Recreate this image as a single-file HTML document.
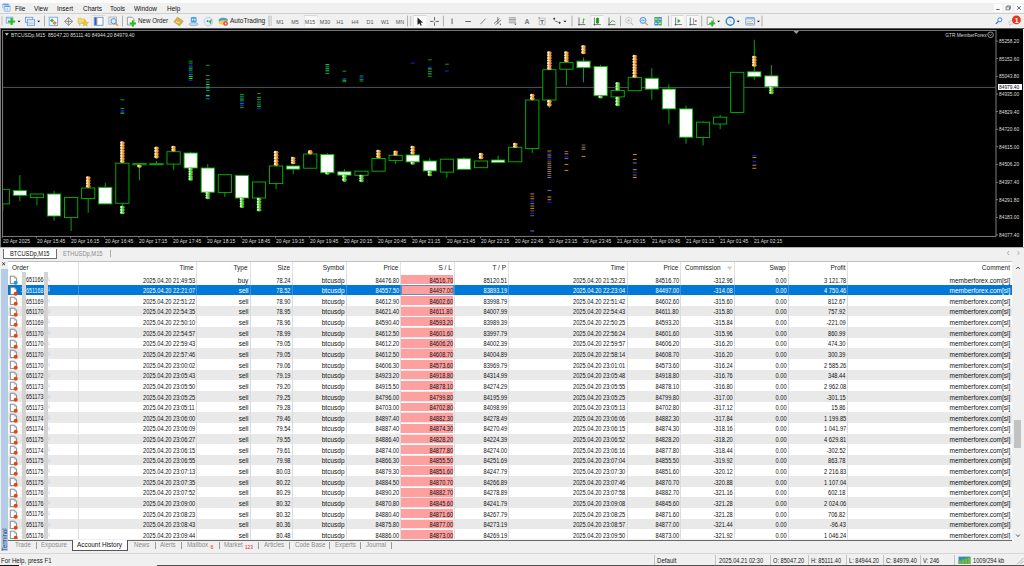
<!DOCTYPE html><html><head><meta charset="utf-8"><style>
html,body{margin:0;padding:0;}
body{width:1024px;height:566px;overflow:hidden;position:relative;background:#f0f0f0;font-family:"Liberation Sans", sans-serif;}
div{box-sizing:border-box;}
</style></head><body>
<div style="position:absolute;left:0px;top:0px;width:1024px;height:13.5px;background:#f0f0f0;"></div>
<div style="position:absolute;left:0px;top:0px;width:1024px;height:2.6px;background:#fcfcfc;"></div>
<div style="position:absolute;left:0px;top:12.8px;width:1024px;height:0.9px;background:#cfcfcf;"></div>
<div style="position:absolute;left:15px;top:5.0px;font-size:7.0px;line-height:7.0px;color:#111;white-space:nowrap;transform:scaleX(0.92);transform-origin:0 50%;">File</div>
<div style="position:absolute;left:34px;top:5.0px;font-size:7.0px;line-height:7.0px;color:#111;white-space:nowrap;transform:scaleX(0.92);transform-origin:0 50%;">View</div>
<div style="position:absolute;left:57px;top:5.0px;font-size:7.0px;line-height:7.0px;color:#111;white-space:nowrap;transform:scaleX(0.92);transform-origin:0 50%;">Insert</div>
<div style="position:absolute;left:82.5px;top:5.0px;font-size:7.0px;line-height:7.0px;color:#111;white-space:nowrap;transform:scaleX(0.92);transform-origin:0 50%;">Charts</div>
<div style="position:absolute;left:110px;top:5.0px;font-size:7.0px;line-height:7.0px;color:#111;white-space:nowrap;transform:scaleX(0.92);transform-origin:0 50%;">Tools</div>
<div style="position:absolute;left:134px;top:5.0px;font-size:7.0px;line-height:7.0px;color:#111;white-space:nowrap;transform:scaleX(0.92);transform-origin:0 50%;">Window</div>
<div style="position:absolute;left:167px;top:5.0px;font-size:7.0px;line-height:7.0px;color:#111;white-space:nowrap;transform:scaleX(0.92);transform-origin:0 50%;">Help</div>
<svg width="14" height="14" style="position:absolute;left:0;top:0"><rect x="2.6" y="3.8" width="6.2" height="4.4" rx="0.8" fill="#dce9f8" stroke="#8ab4ea" stroke-width="0.6"/><rect x="2.8" y="3.9" width="5.8" height="1.0" fill="#5b9be6"/><rect x="4.2" y="5.8" width="6.0" height="5.5" rx="0.8" fill="#e4eefa" stroke="#7aa8e6" stroke-width="0.7"/><rect x="4.4" y="5.9" width="5.6" height="1.0" fill="#5b9be6"/><rect x="5.2" y="8.4" width="1" height="2" fill="#a8c8f0"/><rect x="7" y="8" width="1" height="2.4" fill="#a8c8f0"/></svg>
<div style="position:absolute;left:0px;top:14px;width:1024px;height:13.5px;background:#f0f0f0;"></div>
<svg width="1024" height="28" style="position:absolute;left:0;top:0">
<rect x="1.2" y="15.8" width="1.6" height="10" fill="#d2d2d2"/>
<rect x="6.2" y="17.2" width="6.6" height="5.8" fill="#e4eefa" stroke="#79a6da" stroke-width="0.9"/>
<rect x="6.6" y="17.6" width="5.8" height="1.2" fill="#9fc3ea"/>
<rect x="8.0" y="20.45" width="7.2" height="2.1" fill="#1fbf1f" rx="0.4"/>
<rect x="10.549999999999999" y="17.9" width="2.1" height="7.2" fill="#1fbf1f" rx="0.4"/>
<polygon points="17.5,20.7 20.5,20.7 19.0,22.3" fill="#000"/>
<rect x="25.5" y="17.3" width="7.2" height="5.2" fill="#e8f0fa" stroke="#6e9fd6" stroke-width="0.9"/>
<rect x="27.4" y="19.7" width="7.2" height="5.6" fill="#e8f0fa" stroke="#6e9fd6" stroke-width="0.9"/>
<rect x="28.2" y="22.6" width="5.6" height="0.8" fill="#9ab"/>
<polygon points="37.2,20.7 40.2,20.7 38.7,22.3" fill="#000"/>
<rect x="44.05" y="15.6" width="0.9" height="10.8" fill="#a8a8a8"/>
<rect x="49.2" y="17.2" width="8.4" height="8.2" fill="#f4f8fd" stroke="#78a6da" stroke-width="0.9"/>
<polygon points="52,18.5 54.2,20.6 52,22.6 49.9,20.6" fill="#3cb83c"/>
<polygon points="54.6,21.0 56.8,23.1 54.6,25.1 52.5,23.1" fill="#f07a4a"/>
<g stroke="#6a6a6a" stroke-width="0.7" fill="none"><line x1="65.2" y1="21.4" x2="72.0" y2="21.4"/><line x1="68.6" y1="18.0" x2="68.6" y2="24.8"/><path d="M66.6 19.6 L68.6 17.2 L70.6 19.6 M66.6 23.2 L68.6 25.6 L70.6 23.2 M66.8 19.4 L64.4 21.4 L66.8 23.4 M70.4 19.4 L72.8 21.4 L70.4 23.4"/></g>
<path d="M78.2 18.2 L81.2 18.2 L82 19 L85 19 L85 23.5 L78.2 23.5 Z" fill="#f3dc6a" stroke="#d4b43a" stroke-width="0.6"/>
<polygon points="85.3,20.2 86.3,22.3 88.5,22.5 86.8,24 87.3,26 85.3,24.9 83.3,26 83.8,24 82.1,22.5 84.3,22.3" fill="#f0c828" stroke="#c9a020" stroke-width="0.4"/>
<rect x="79" y="23.5" width="1.4" height="2.2" fill="#bbb"/>
<rect x="91.6" y="15.0" width="13.400000000000006" height="11.8" fill="#f9f9f9"/>
<rect x="91.6" y="15.0" width="13.400000000000006" height="0.8" fill="#cfcfcf"/>
<rect x="91.6" y="15.0" width="0.8" height="11.8" fill="#dcdcdc"/>
<rect x="94.2" y="17.3" width="8.8" height="8" fill="#fff" stroke="#5b8fd0" stroke-width="0.9"/>
<rect x="94.6" y="17.7" width="2.2" height="7.2" fill="#2a62b8"/>
<rect x="96.8" y="17.7" width="0.9" height="7.2" fill="#f4b6b6"/>
<rect x="108.8" y="17.0" width="7.6" height="7.2" fill="#e6e6e6" stroke="#b0b0b0" stroke-width="0.8"/>
<circle cx="113.6" cy="21.2" r="2.6" fill="#d8ecfb" stroke="#3f8fd8" stroke-width="0.9"/>
<line x1="115.4" y1="23.0" x2="117.9" y2="25.9" stroke="#d89a20" stroke-width="1.3"/>
<rect x="122.05" y="15.6" width="0.9" height="10.8" fill="#a8a8a8"/>
<path d="M127.4 17.2 L132 17.2 L134 19.2 L134 25 L127.4 25 Z" fill="#f6f6f6" stroke="#8a8a8a" stroke-width="0.8"/>
<rect x="129.60000000000002" y="22.55" width="6.4" height="1.9" fill="#1fbf1f" rx="0.4"/>
<rect x="131.85000000000002" y="20.3" width="1.9" height="6.4" fill="#1fbf1f" rx="0.4"/>
<polygon points="177.5,17.2 183.2,21.2 179.5,25.7 173.9,21.8" fill="#d9b445" stroke="#a88a30" stroke-width="0.6"/>
<polygon points="176.2,21.3 180.2,22.6 179.6,23.6 175.6,22.3" fill="#f6e08a"/>
<ellipse cx="193.6" cy="24.2" rx="4.6" ry="1.6" fill="#c9d4e2" stroke="#8ea2bb" stroke-width="0.6"/>
<rect x="190.8" y="17.0" width="5.8" height="5.4" rx="1.2" fill="#49a4ea"/>
<rect x="192" y="18.8" width="1.3" height="1.6" fill="#dff"/><rect x="194.2" y="18.8" width="1.3" height="1.6" fill="#dff"/>
<circle cx="208.4" cy="21.5" r="4.3" fill="#e2eef8" stroke="#a8c4de" stroke-width="0.7"/>
<path d="M208.6 21.4 L211.8 19 L211 24.5 Z" fill="#3ab54a"/>
<circle cx="207.6" cy="21.2" r="0.9" fill="#2a70c0"/>
<path d="M218.8 19.2 Q223 16.6 227.6 19 L227.6 23.6 Q223 26 218.8 23.6 Z" fill="#f0d040"/>
<path d="M218.8 19.2 Q223 16.6 227.6 19 L227.6 21 Q223 19 218.8 21.6 Z" fill="#4a9ee0"/>
<circle cx="225.6" cy="23.5" r="2.3" fill="#e23a2a"/>
<rect x="224.8" y="22.6" width="1.6" height="1.8" fill="#fff"/>
<rect x="268.55" y="15.6" width="0.9" height="10.8" fill="#a8a8a8"/>
<rect x="270.4" y="15.8" width="1.6" height="10" fill="#d2d2d2"/>
<rect x="303.8" y="15.0" width="13.0" height="11.8" fill="#f9f9f9"/>
<rect x="303.8" y="15.0" width="13.0" height="0.8" fill="#cfcfcf"/>
<rect x="303.8" y="15.0" width="0.8" height="11.8" fill="#dcdcdc"/>
<rect x="407.05" y="15.6" width="0.9" height="10.8" fill="#a8a8a8"/>
<rect x="409.8" y="15.8" width="1.6" height="10" fill="#d2d2d2"/>
<rect x="413.2" y="15.0" width="13.0" height="11.8" fill="#f9f9f9"/>
<rect x="413.2" y="15.0" width="13.0" height="0.8" fill="#cfcfcf"/>
<rect x="413.2" y="15.0" width="0.8" height="11.8" fill="#dcdcdc"/>
<polygon points="417.5,17.4 417.5,25.0 419.3,23.2 420.8,25.8 421.9,25.2 420.6,22.7 423.0,22.5" fill="#222"/>
<g stroke="#444" stroke-width="0.8"><line x1="430" y1="21.4" x2="433.5" y2="21.4"/><line x1="435.5" y1="21.4" x2="439" y2="21.4"/><line x1="434.5" y1="17" x2="434.5" y2="20.4"/><line x1="434.5" y1="22.4" x2="434.5" y2="25.8"/></g>
<rect x="442.95" y="15.6" width="0.9" height="10.8" fill="#a8a8a8"/>
<rect x="451.6" y="18.5" width="0.9" height="5.6" fill="#555"/>
<rect x="465.3" y="21.0" width="5.6" height="0.9" fill="#555"/>
<line x1="480.4" y1="24.2" x2="485.6" y2="18.6" stroke="#666" stroke-width="0.8"/>
<g stroke="#666" stroke-width="0.8"><line x1="494" y1="23.6" x2="499.6" y2="18.6"/><line x1="495.4" y1="25" x2="501" y2="20"/><line x1="497.8" y1="17" x2="497.8" y2="24"/></g>
<rect x="499.8" y="23.6" width="1" height="1.6" fill="#555"/>
<g stroke="#777" stroke-width="0.7"><line x1="508.8" y1="17.8" x2="516" y2="17.8"/><line x1="508.8" y1="19.4" x2="516" y2="19.4"/><line x1="508.8" y1="21" x2="516" y2="21"/><line x1="508.8" y1="22.8" x2="516" y2="22.8"/></g>
<polygon points="514.3,23.8 516.4,23.8 515.4,25" fill="#333"/>
<text x="527" y="24.4" font-family="Liberation Sans" font-weight="bold" font-size="7" fill="#7a7a7a" text-anchor="middle">A</text>
<rect x="539.2" y="18.2" width="5.8" height="6.6" fill="#f6f6f6" stroke="#aaa" stroke-width="0.7"/>
<text x="542.1" y="24.2" font-family="Liberation Sans" font-weight="bold" font-size="6" fill="#555" text-anchor="middle">T</text>
<rect x="538.6" y="17.4" width="0.9" height="0.9" fill="#333"/>
<g fill="#333"><polygon points="554.2,17.6 555.4,18.8 554.2,20 553,18.8"/><polygon points="559.6,21.6 560.8,22.8 559.6,24 558.4,22.8"/></g>
<line x1="554.6" y1="20.8" x2="558.4" y2="22.2" stroke="#555" stroke-width="0.7"/>
<polygon points="563.5,20.7 566.5,20.7 565.0,22.3" fill="#000"/>
<rect x="571.55" y="15.6" width="0.9" height="10.8" fill="#a8a8a8"/>
<g stroke="#444" stroke-width="0.7"><line x1="579.0" y1="17.4" x2="579.0" y2="25.6"/><line x1="578.0" y1="24.6" x2="585.4" y2="24.6"/></g>
<g stroke="#2aa02a" stroke-width="0.8"><line x1="583.4" y1="18.6" x2="583.4" y2="23.4"/><line x1="582.2" y1="22.6" x2="583.4" y2="22.6"/><line x1="583.4" y1="19.4" x2="584.6" y2="19.4"/></g>
<rect x="590.5" y="15.0" width="13.0" height="11.8" fill="#f9f9f9"/>
<rect x="590.5" y="15.0" width="13.0" height="0.8" fill="#cfcfcf"/>
<rect x="590.5" y="15.0" width="0.8" height="11.8" fill="#dcdcdc"/>
<g stroke="#444" stroke-width="0.7"><line x1="594.4" y1="17.4" x2="594.4" y2="25.6"/><line x1="593.4" y1="24.6" x2="600.8" y2="24.6"/></g>
<rect x="596.2" y="18.6" width="2.6" height="4.4" fill="#1fb21f" stroke="#0a8a0a" stroke-width="0.5"/>
<line x1="597.5" y1="17.4" x2="597.5" y2="24" stroke="#0a8a0a" stroke-width="0.6"/>
<g stroke="#444" stroke-width="0.7"><line x1="609.0" y1="17.4" x2="609.0" y2="25.6"/><line x1="608.0" y1="24.6" x2="615.4" y2="24.6"/></g>
<path d="M609.6 23.6 Q612.5 18.5 615.2 22.4" fill="none" stroke="#3aa03a" stroke-width="0.8"/>
<rect x="620.05" y="15.6" width="0.9" height="10.8" fill="#a8a8a8"/>
<circle cx="628.6" cy="20.4" r="3.0" fill="#f4f4f4" stroke="#c0c0c0" stroke-width="0.8"/>
<line x1="630.8" y1="22.6" x2="633.2" y2="25.2" stroke="#c0c0c0" stroke-width="1.1"/>
<g stroke="#aaa" stroke-width="0.6"><line x1="627" y1="20.4" x2="630.2" y2="20.4"/><line x1="628.6" y1="18.8" x2="628.6" y2="22"/></g>
<circle cx="643" cy="20.4" r="3.0" fill="#cfe6f8" stroke="#3d8fd8" stroke-width="0.9"/>
<line x1="641.4" y1="20.4" x2="644.6" y2="20.4" stroke="#3d8fd8" stroke-width="0.7"/>
<line x1="645.2" y1="22.6" x2="647.8" y2="25.3" stroke="#d9a92a" stroke-width="1.3"/>
<rect x="654.4" y="17.0" width="3.6" height="4.0" fill="#3bb24a"/><rect x="658.2" y="17.0" width="3.6" height="4.0" fill="#3d86d8"/>
<rect x="654.4" y="21.2" width="3.6" height="4.2" fill="#3d86d8"/><rect x="658.2" y="21.2" width="3.6" height="4.2" fill="#3bb24a"/>
<g fill="#e8f4e8"><rect x="655" y="18.6" width="2.4" height="1"/><rect x="658.8" y="18.6" width="2.4" height="1"/><rect x="655" y="22.8" width="2.4" height="1"/><rect x="658.8" y="22.8" width="2.4" height="1"/></g>
<rect x="668.05" y="15.6" width="0.9" height="10.8" fill="#a8a8a8"/>
<rect x="671.0" y="15.0" width="12.5" height="11.8" fill="#f9f9f9"/>
<rect x="671.0" y="15.0" width="12.5" height="0.8" fill="#cfcfcf"/>
<rect x="671.0" y="15.0" width="0.8" height="11.8" fill="#dcdcdc"/>
<g stroke="#444" stroke-width="0.7"><line x1="675.6" y1="17.4" x2="675.6" y2="25.6"/><line x1="674.6" y1="24.6" x2="682.0" y2="24.6"/></g>
<polygon points="677.6,18.8 680.6,21.0 677.6,23.2" fill="#2aa83a"/>
<rect x="686.0" y="15.0" width="12.600000000000023" height="11.8" fill="#f9f9f9"/>
<rect x="686.0" y="15.0" width="12.600000000000023" height="0.8" fill="#cfcfcf"/>
<rect x="686.0" y="15.0" width="0.8" height="11.8" fill="#dcdcdc"/>
<g stroke="#444" stroke-width="0.7"><line x1="690.3" y1="17.4" x2="690.3" y2="25.6"/><line x1="689.3" y1="24.6" x2="696.6999999999999" y2="24.6"/></g>
<rect x="693.2" y="18.2" width="0.8" height="6" fill="#4a8fd8"/>
<rect x="694.8" y="20.0" width="1.9" height="1.9" fill="#e06a3a"/>
<rect x="701.25" y="15.6" width="0.9" height="10.8" fill="#a8a8a8"/>
<path d="M707.2 17.2 L711.6 17.2 L713.6 19.2 L713.6 24.6 L707.2 24.6 Z" fill="#f6f6f6" stroke="#8a8a8a" stroke-width="0.8"/>
<rect x="709.2" y="22.5" width="6.0" height="1.8" fill="#1fbf1f" rx="0.4"/>
<rect x="711.3000000000001" y="20.4" width="1.8" height="6.0" fill="#1fbf1f" rx="0.4"/>
<polygon points="717.1,20.7 720.1,20.7 718.6,22.3" fill="#000"/>
<circle cx="730.2" cy="21.2" r="4.0" fill="#eaf2fb" stroke="#2f7fd0" stroke-width="1.4"/>
<line x1="729.4" y1="20.2" x2="731.2" y2="21.8" stroke="#777" stroke-width="0.7"/>
<polygon points="736.7,20.7 739.7,20.7 738.2,22.3" fill="#000"/>
<rect x="745.8" y="17.6" width="8.8" height="7.4" fill="#eef4fb" stroke="#6b9fd8" stroke-width="0.9" rx="0.6"/>
<rect x="746.3" y="18.1" width="7.8" height="1.3" fill="#8ab8ea"/>
<path d="M746.8 22.6 L748.6 21 L750.4 22 L752.4 20.6 L754 21.4" fill="none" stroke="#e06a5a" stroke-width="0.6"/>
<rect x="746.8" y="23.2" width="6.8" height="0.8" fill="#6cc070"/>
<polygon points="756.9,20.7 759.9,20.7 758.4,22.3" fill="#000"/>
<rect x="761.55" y="15.6" width="0.9" height="10.8" fill="#a8a8a8"/>
<circle cx="999.9" cy="19.8" r="2.0" fill="#fff" stroke="#3f7fe0" stroke-width="1.0"/>
<line x1="998.4" y1="21.4" x2="995.9" y2="23.9" stroke="#2f6fd0" stroke-width="1.3"/>
<ellipse cx="1011.2" cy="22.6" rx="2.8" ry="2.2" fill="#e4e4e4" stroke="#cfcfcf" stroke-width="0.5"/>
<path d="M1009.6 24.2 L1009 26 L1011 24.6 Z" fill="#bbb"/>
<circle cx="1016.4" cy="19.9" r="4.4" fill="#e5341f"/>
<text x="1016.6" y="22.6" font-family="Liberation Sans" font-weight="bold" font-size="7" fill="#fff" text-anchor="middle">1</text>
</svg>
<div style="position:absolute;left:137.5px;top:16.9px;font-size:7.0px;line-height:7.0px;color:#1a1a1a;white-space:nowrap;transform:scaleX(0.89);transform-origin:0 50%;">New Order</div>
<div style="position:absolute;left:230.0px;top:16.9px;font-size:7.0px;line-height:7.0px;color:#1a1a1a;white-space:nowrap;transform:scaleX(0.93);transform-origin:0 50%;">AutoTrading</div>
<div style="position:absolute;left:269.8px;top:18.6px;width:20px;text-align:center;font-size:6px;line-height:6px;color:#555;transform:scaleX(0.9);">M1</div>
<div style="position:absolute;left:285px;top:18.6px;width:20px;text-align:center;font-size:6px;line-height:6px;color:#555;transform:scaleX(0.9);">M5</div>
<div style="position:absolute;left:300.2px;top:18.6px;width:20px;text-align:center;font-size:6px;line-height:6px;color:#555;transform:scaleX(0.9);">M15</div>
<div style="position:absolute;left:315px;top:18.6px;width:20px;text-align:center;font-size:6px;line-height:6px;color:#555;transform:scaleX(0.9);">M30</div>
<div style="position:absolute;left:329.5px;top:18.6px;width:20px;text-align:center;font-size:6px;line-height:6px;color:#555;transform:scaleX(0.9);">H1</div>
<div style="position:absolute;left:344.5px;top:18.6px;width:20px;text-align:center;font-size:6px;line-height:6px;color:#555;transform:scaleX(0.9);">H4</div>
<div style="position:absolute;left:359.5px;top:18.6px;width:20px;text-align:center;font-size:6px;line-height:6px;color:#555;transform:scaleX(0.9);">D1</div>
<div style="position:absolute;left:375px;top:18.6px;width:20px;text-align:center;font-size:6px;line-height:6px;color:#555;transform:scaleX(0.9);">W1</div>
<div style="position:absolute;left:389.6px;top:18.6px;width:20px;text-align:center;font-size:6px;line-height:6px;color:#555;transform:scaleX(0.9);">MN</div>
<svg width="40" height="14" style="position:absolute;left:984px;top:0"><rect x="10" y="4" width="8.3" height="7.9" fill="#fcfcfc"/><rect x="20.4" y="4" width="7.9" height="7.9" fill="#fcfcfc"/><rect x="30.7" y="4" width="8" height="7.9" fill="#fcfcfc"/><rect x="12.2" y="9.0" width="3.4" height="0.9" fill="#4a5260"/><rect x="23.0" y="5.9" width="3.4" height="3.0" fill="none" stroke="#6a7280" stroke-width="0.8"/><rect x="22.0" y="6.9" width="3.4" height="3.0" fill="#e8e8e8" stroke="#6a7280" stroke-width="0.8"/><path d="M33.1 6.1 L36.8 9.8 M36.8 6.1 L33.1 9.8" stroke="#555d6a" stroke-width="0.9"/></svg>
<div style="position:absolute;left:0px;top:27.5px;width:1024px;height:1.6px;background:#5a5a5a;"></div>
<div style="position:absolute;left:0px;top:29px;width:1023px;height:218.3px;background:#000;"></div>
<div style="position:absolute;left:0px;top:27.5px;width:1.2px;height:220px;background:#7a7a7a;"></div>
<svg width="1024" height="566" style="position:absolute;left:0;top:0">
<defs><clipPath id="pc"><rect x="3" y="31" width="993" height="205"/></clipPath></defs>
<rect x="2.6" y="30.4" width="993.4" height="206" fill="none" stroke="#8c8c8c" stroke-width="0.9"/>
<line x1="3" y1="87.4" x2="996" y2="87.4" stroke="#50565c" stroke-width="1"/>
<g clip-path="url(#pc)">
<rect x="120.46" y="99.30" width="3.8" height="1" fill="#0a0"/>
<rect x="120.46" y="108.00" width="3.8" height="1" fill="#0a0"/>
<rect x="120.46" y="110.20" width="3.8" height="1" fill="#1c1cff"/>
<rect x="120.46" y="111.50" width="3.8" height="1" fill="#1c1cff"/>
<rect x="120.46" y="112.70" width="3.8" height="1" fill="#22dd22"/>
<rect x="188.78" y="60.70" width="3.8" height="1" fill="#0a0"/>
<rect x="188.78" y="62.62" width="3.8" height="1" fill="#0a0"/>
<rect x="188.78" y="64.54" width="3.8" height="1" fill="#1c1cff"/>
<rect x="188.78" y="66.46" width="3.8" height="1" fill="#0c8c8c"/>
<rect x="188.78" y="68.38" width="3.8" height="1" fill="#22dd22"/>
<rect x="188.78" y="70.30" width="3.8" height="1" fill="#0c8c8c"/>
<rect x="188.78" y="72.22" width="3.8" height="1" fill="#1c1cff"/>
<rect x="188.78" y="74.14" width="3.8" height="1" fill="#0c8c8c"/>
<rect x="188.78" y="76.06" width="3.8" height="1" fill="#22dd22"/>
<rect x="188.78" y="77.98" width="3.8" height="1" fill="#22dd22"/>
<rect x="188.78" y="79.90" width="3.8" height="1" fill="#1c1cff"/>
<rect x="205.86" y="64.80" width="3.8" height="1" fill="#0a0"/>
<rect x="205.86" y="75.00" width="3.8" height="1" fill="#0c8c8c"/>
<rect x="205.86" y="79.00" width="3.8" height="1" fill="#0a0"/>
<rect x="205.86" y="81.50" width="3.8" height="1" fill="#0c8c8c"/>
<rect x="205.86" y="84.00" width="3.8" height="1" fill="#22dd22"/>
<rect x="205.86" y="86.50" width="3.8" height="1" fill="#22dd22"/>
<rect x="205.86" y="88.00" width="3.8" height="1" fill="#1c1cff"/>
<rect x="205.86" y="90.00" width="3.8" height="1" fill="#0a0"/>
<rect x="205.86" y="95.00" width="3.8" height="1" fill="#22dd22"/>
<rect x="205.86" y="96.00" width="3.8" height="1" fill="#1c1cff"/>
<rect x="205.86" y="98.30" width="3.8" height="1" fill="#0a0"/>
<rect x="240.02" y="93.90" width="3.8" height="1" fill="#0a0"/>
<rect x="240.02" y="95.76" width="3.8" height="1" fill="#0c8c8c"/>
<rect x="240.02" y="97.61" width="3.8" height="1" fill="#0a0"/>
<rect x="240.02" y="99.47" width="3.8" height="1" fill="#22dd22"/>
<rect x="240.02" y="101.33" width="3.8" height="1" fill="#1c1cff"/>
<rect x="240.02" y="103.19" width="3.8" height="1" fill="#0c8c8c"/>
<rect x="240.02" y="105.04" width="3.8" height="1" fill="#1c1cff"/>
<rect x="240.02" y="106.90" width="3.8" height="1" fill="#0a0"/>
<rect x="257.10" y="92.90" width="3.8" height="1" fill="#0a0"/>
<rect x="257.10" y="97.00" width="3.8" height="1" fill="#0a0"/>
<rect x="257.10" y="99.00" width="3.8" height="1" fill="#0a0"/>
<rect x="257.10" y="101.50" width="3.8" height="1" fill="#0c8c8c"/>
<rect x="257.10" y="103.63" width="3.8" height="1" fill="#0a0"/>
<rect x="257.10" y="105.77" width="3.8" height="1" fill="#22dd22"/>
<rect x="257.10" y="107.90" width="3.8" height="1" fill="#1c1cff"/>
<rect x="325.42" y="64.10" width="3.8" height="1" fill="#22dd22"/>
<rect x="325.42" y="66.17" width="3.8" height="1" fill="#0c8c8c"/>
<rect x="325.42" y="68.23" width="3.8" height="1" fill="#22dd22"/>
<rect x="325.42" y="70.30" width="3.8" height="1" fill="#22dd22"/>
<rect x="325.42" y="73.00" width="3.8" height="1" fill="#0a0"/>
<rect x="342.50" y="70.70" width="3.8" height="1" fill="#0a0"/>
<rect x="342.50" y="78.50" width="3.8" height="1" fill="#0c8c8c"/>
<rect x="342.50" y="80.00" width="3.8" height="1" fill="#0c8c8c"/>
<rect x="342.50" y="81.20" width="3.8" height="1" fill="#0a0"/>
<rect x="359.58" y="75.50" width="3.8" height="1" fill="#0a0"/>
<rect x="359.58" y="77.17" width="3.8" height="1" fill="#1c1cff"/>
<rect x="359.58" y="78.83" width="3.8" height="1" fill="#0c8c8c"/>
<rect x="359.58" y="80.50" width="3.8" height="1" fill="#0a0"/>
<rect x="410.82" y="62.60" width="3.8" height="1" fill="#1c1cff"/>
<rect x="427.90" y="59.30" width="3.8" height="1" fill="#0a0"/>
<rect x="427.90" y="66.80" width="3.8" height="1" fill="#1c1cff"/>
<rect x="427.90" y="68.40" width="3.8" height="1" fill="#22dd22"/>
<rect x="427.90" y="70.87" width="3.8" height="1" fill="#0c8c8c"/>
<rect x="427.90" y="73.33" width="3.8" height="1" fill="#22dd22"/>
<rect x="427.90" y="75.80" width="3.8" height="1" fill="#0a0"/>
<rect x="444.98" y="63.70" width="3.8" height="1" fill="#0a0"/>
<rect x="444.98" y="70.50" width="3.8" height="1" fill="#1c1cff"/>
<rect x="530.38" y="193.40" width="3.8" height="1" fill="#d08a10"/>
<rect x="530.38" y="195.82" width="3.8" height="1" fill="#8a6020"/>
<rect x="530.38" y="198.24" width="3.8" height="1" fill="#d08a10"/>
<rect x="530.38" y="200.67" width="3.8" height="1" fill="#1c1cff"/>
<rect x="530.38" y="203.09" width="3.8" height="1" fill="#7070d0"/>
<rect x="530.38" y="205.51" width="3.8" height="1" fill="#d08a10"/>
<rect x="530.38" y="207.93" width="3.8" height="1" fill="#d08a10"/>
<rect x="530.38" y="210.36" width="3.8" height="1" fill="#8a6020"/>
<rect x="530.38" y="212.78" width="3.8" height="1" fill="#1c1cff"/>
<rect x="530.38" y="215.20" width="3.8" height="1" fill="#8a6020"/>
<rect x="530.38" y="230.50" width="3.8" height="1" fill="#7070d0"/>
<rect x="547.46" y="150.50" width="3.8" height="1" fill="#d08a10"/>
<rect x="547.46" y="152.54" width="3.8" height="1" fill="#1c1cff"/>
<rect x="547.46" y="154.58" width="3.8" height="1" fill="#d08a10"/>
<rect x="547.46" y="156.62" width="3.8" height="1" fill="#7070d0"/>
<rect x="547.46" y="158.65" width="3.8" height="1" fill="#1c1cff"/>
<rect x="547.46" y="160.69" width="3.8" height="1" fill="#8a6020"/>
<rect x="547.46" y="162.73" width="3.8" height="1" fill="#d08a10"/>
<rect x="547.46" y="164.77" width="3.8" height="1" fill="#7070d0"/>
<rect x="547.46" y="166.81" width="3.8" height="1" fill="#d08a10"/>
<rect x="547.46" y="168.85" width="3.8" height="1" fill="#7070d0"/>
<rect x="547.46" y="170.88" width="3.8" height="1" fill="#d08a10"/>
<rect x="547.46" y="172.92" width="3.8" height="1" fill="#7070d0"/>
<rect x="547.46" y="174.96" width="3.8" height="1" fill="#8a6020"/>
<rect x="547.46" y="177.00" width="3.8" height="1" fill="#7070d0"/>
<rect x="547.46" y="189.90" width="3.8" height="1" fill="#7070d0"/>
<rect x="547.46" y="196.50" width="3.8" height="1" fill="#d08a10"/>
<rect x="547.46" y="199.20" width="3.8" height="1" fill="#d08a10"/>
<rect x="547.46" y="201.70" width="3.8" height="1" fill="#1c1cff"/>
<rect x="564.54" y="151.00" width="3.8" height="1" fill="#8a6020"/>
<rect x="564.54" y="153.30" width="3.8" height="1" fill="#d08a10"/>
<rect x="564.54" y="156.30" width="3.8" height="1" fill="#1c1cff"/>
<rect x="564.54" y="158.10" width="3.8" height="1" fill="#7070d0"/>
<rect x="564.54" y="163.90" width="3.8" height="1" fill="#d08a10"/>
<rect x="564.54" y="169.90" width="3.8" height="1" fill="#d08a10"/>
<rect x="581.62" y="144.50" width="3.8" height="1" fill="#8a6020"/>
<rect x="581.62" y="146.70" width="3.8" height="1" fill="#7070d0"/>
<rect x="581.62" y="148.70" width="3.8" height="1" fill="#d08a10"/>
<rect x="581.62" y="155.90" width="3.8" height="1" fill="#d08a10"/>
<rect x="632.86" y="154.00" width="3.8" height="1" fill="#d08a10"/>
<rect x="632.86" y="158.90" width="3.8" height="1" fill="#d08a10"/>
<rect x="632.86" y="162.50" width="3.8" height="1" fill="#7070d0"/>
<rect x="632.86" y="169.20" width="3.8" height="1" fill="#d08a10"/>
<rect x="632.86" y="171.80" width="3.8" height="1" fill="#1c1cff"/>
<rect x="632.86" y="174.50" width="3.8" height="1" fill="#8a6020"/>
<rect x="632.86" y="177.00" width="3.8" height="1" fill="#d08a10"/>
<rect x="752.42" y="155.10" width="3.8" height="1" fill="#1c1cff"/>
<rect x="752.42" y="157.00" width="3.8" height="1" fill="#d08a10"/>
<rect x="752.42" y="160.80" width="3.8" height="1" fill="#1c1cff"/>
<rect x="752.42" y="164.70" width="3.8" height="1" fill="#d08a10"/>
<rect x="752.42" y="167.80" width="3.8" height="1" fill="#d08a10"/>
<line x1="2.80" y1="203.9" x2="2.80" y2="210.7" stroke="#00bb00" stroke-width="0.9"/>
<rect x="-3.80" y="189.3" width="13.20" height="14.60" fill="#000" stroke="#00bb00" stroke-width="0.9"/>
<line x1="19.88" y1="175.0" x2="19.88" y2="190.6" stroke="#00bb00" stroke-width="0.9"/>
<line x1="19.88" y1="195.3" x2="19.88" y2="201.2" stroke="#00bb00" stroke-width="0.9"/>
<rect x="13.28" y="190.6" width="13.20" height="4.70" fill="#fff" stroke="#00bb00" stroke-width="0.9"/>
<line x1="36.96" y1="197.6" x2="36.96" y2="205.5" stroke="#00bb00" stroke-width="0.9"/>
<rect x="30.36" y="194.0" width="13.20" height="3.60" fill="#000" stroke="#00bb00" stroke-width="0.9"/>
<line x1="54.04" y1="190.9" x2="54.04" y2="194.0" stroke="#00bb00" stroke-width="0.9"/>
<line x1="54.04" y1="216.0" x2="54.04" y2="220.8" stroke="#00bb00" stroke-width="0.9"/>
<rect x="47.44" y="194.0" width="13.20" height="22.00" fill="#fff" stroke="#00bb00" stroke-width="0.9"/>
<line x1="71.12" y1="217.6" x2="71.12" y2="231.0" stroke="#00bb00" stroke-width="0.9"/>
<rect x="64.52" y="197.6" width="13.20" height="20.00" fill="#000" stroke="#00bb00" stroke-width="0.9"/>
<line x1="88.20" y1="198.5" x2="88.20" y2="212.8" stroke="#00bb00" stroke-width="0.9"/>
<rect x="81.60" y="188.0" width="13.20" height="10.50" fill="#000" stroke="#00bb00" stroke-width="0.9"/>
<line x1="105.28" y1="183.0" x2="105.28" y2="187.4" stroke="#00bb00" stroke-width="0.9"/>
<rect x="98.68" y="187.4" width="13.20" height="16.50" fill="#fff" stroke="#00bb00" stroke-width="0.9"/>
<line x1="122.36" y1="203.3" x2="122.36" y2="207.7" stroke="#00bb00" stroke-width="0.9"/>
<rect x="115.76" y="163.2" width="13.20" height="40.10" fill="#000" stroke="#00bb00" stroke-width="0.9"/>
<line x1="139.44" y1="164.8" x2="139.44" y2="180.4" stroke="#00bb00" stroke-width="0.9"/>
<rect x="132.84" y="163.6" width="13.20" height="1.20" fill="#000" stroke="#00bb00" stroke-width="0.9"/>
<line x1="156.52" y1="161.0" x2="156.52" y2="163.7" stroke="#00bb00" stroke-width="0.9"/>
<rect x="149.92" y="163.7" width="13.20" height="1.00" fill="#000" stroke="#00bb00" stroke-width="0.9"/>
<line x1="173.60" y1="164.1" x2="173.60" y2="169.8" stroke="#00bb00" stroke-width="0.9"/>
<rect x="167.00" y="151.7" width="13.20" height="12.40" fill="#000" stroke="#00bb00" stroke-width="0.9"/>
<line x1="190.68" y1="152.0" x2="190.68" y2="153.0" stroke="#00bb00" stroke-width="0.9"/>
<rect x="184.08" y="153.0" width="13.20" height="15.00" fill="#fff" stroke="#00bb00" stroke-width="0.9"/>
<line x1="207.76" y1="164.0" x2="207.76" y2="168.0" stroke="#00bb00" stroke-width="0.9"/>
<rect x="201.16" y="168.0" width="13.20" height="24.20" fill="#fff" stroke="#00bb00" stroke-width="0.9"/>
<line x1="224.84" y1="192.4" x2="224.84" y2="196.8" stroke="#00bb00" stroke-width="0.9"/>
<rect x="218.24" y="174.7" width="13.20" height="17.70" fill="#000" stroke="#00bb00" stroke-width="0.9"/>
<rect x="235.32" y="175.4" width="13.20" height="22.60" fill="#fff" stroke="#00bb00" stroke-width="0.9"/>
<rect x="252.40" y="182.0" width="13.20" height="16.00" fill="#000" stroke="#00bb00" stroke-width="0.9"/>
<line x1="276.08" y1="183.6" x2="276.08" y2="189.3" stroke="#00bb00" stroke-width="0.9"/>
<rect x="269.48" y="166.0" width="13.20" height="17.60" fill="#000" stroke="#00bb00" stroke-width="0.9"/>
<line x1="293.16" y1="169.1" x2="293.16" y2="174.0" stroke="#00bb00" stroke-width="0.9"/>
<rect x="286.56" y="166.0" width="13.20" height="3.10" fill="#fff" stroke="#00bb00" stroke-width="0.9"/>
<rect x="303.64" y="154.0" width="13.20" height="14.20" fill="#000" stroke="#00bb00" stroke-width="0.9"/>
<line x1="327.32" y1="153.0" x2="327.32" y2="154.5" stroke="#00bb00" stroke-width="0.9"/>
<rect x="320.72" y="154.5" width="13.20" height="18.20" fill="#fff" stroke="#00bb00" stroke-width="0.9"/>
<line x1="344.40" y1="169.0" x2="344.40" y2="171.8" stroke="#00bb00" stroke-width="0.9"/>
<rect x="337.80" y="171.8" width="13.20" height="3.30" fill="#fff" stroke="#00bb00" stroke-width="0.9"/>
<rect x="354.88" y="171.2" width="13.20" height="4.10" fill="#000" stroke="#00bb00" stroke-width="0.9"/>
<rect x="371.96" y="158.5" width="13.20" height="12.70" fill="#000" stroke="#00bb00" stroke-width="0.9"/>
<line x1="395.64" y1="160.6" x2="395.64" y2="163.8" stroke="#00bb00" stroke-width="0.9"/>
<rect x="389.04" y="155.3" width="13.20" height="5.30" fill="#000" stroke="#00bb00" stroke-width="0.9"/>
<rect x="406.12" y="155.0" width="13.20" height="6.90" fill="#fff" stroke="#00bb00" stroke-width="0.9"/>
<line x1="429.80" y1="158.0" x2="429.80" y2="161.0" stroke="#00bb00" stroke-width="0.9"/>
<rect x="423.20" y="161.0" width="13.20" height="9.90" fill="#fff" stroke="#00bb00" stroke-width="0.9"/>
<line x1="446.88" y1="172.1" x2="446.88" y2="177.7" stroke="#00bb00" stroke-width="0.9"/>
<rect x="440.28" y="159.2" width="13.20" height="12.90" fill="#000" stroke="#00bb00" stroke-width="0.9"/>
<line x1="463.96" y1="157.0" x2="463.96" y2="158.8" stroke="#00bb00" stroke-width="0.9"/>
<rect x="457.36" y="158.8" width="13.20" height="10.50" fill="#fff" stroke="#00bb00" stroke-width="0.9"/>
<rect x="474.44" y="161.0" width="13.20" height="6.70" fill="#000" stroke="#00bb00" stroke-width="0.9"/>
<line x1="498.12" y1="155.6" x2="498.12" y2="160.0" stroke="#00bb00" stroke-width="0.9"/>
<rect x="491.52" y="160.0" width="13.20" height="2.40" fill="#fff" stroke="#00bb00" stroke-width="0.9"/>
<rect x="508.60" y="147.3" width="13.20" height="14.50" fill="#000" stroke="#00bb00" stroke-width="0.9"/>
<line x1="532.28" y1="148.6" x2="532.28" y2="153.0" stroke="#00bb00" stroke-width="0.9"/>
<rect x="525.68" y="100.0" width="13.20" height="48.60" fill="#000" stroke="#00bb00" stroke-width="0.9"/>
<line x1="549.36" y1="100.0" x2="549.36" y2="108.0" stroke="#00bb00" stroke-width="0.9"/>
<rect x="542.76" y="69.7" width="13.20" height="30.30" fill="#000" stroke="#00bb00" stroke-width="0.9"/>
<line x1="566.44" y1="69.2" x2="566.44" y2="85.0" stroke="#00bb00" stroke-width="0.9"/>
<rect x="559.84" y="62.6" width="13.20" height="6.60" fill="#000" stroke="#00bb00" stroke-width="0.9"/>
<line x1="583.52" y1="57.7" x2="583.52" y2="61.2" stroke="#00bb00" stroke-width="0.9"/>
<line x1="583.52" y1="67.7" x2="583.52" y2="82.4" stroke="#00bb00" stroke-width="0.9"/>
<rect x="576.92" y="61.2" width="13.20" height="6.50" fill="#fff" stroke="#00bb00" stroke-width="0.9"/>
<line x1="600.60" y1="64.7" x2="600.60" y2="66.5" stroke="#00bb00" stroke-width="0.9"/>
<rect x="594.00" y="66.5" width="13.20" height="29.20" fill="#fff" stroke="#00bb00" stroke-width="0.9"/>
<rect x="611.08" y="90.4" width="13.20" height="6.50" fill="#000" stroke="#00bb00" stroke-width="0.9"/>
<rect x="628.16" y="77.6" width="13.20" height="13.10" fill="#000" stroke="#00bb00" stroke-width="0.9"/>
<line x1="651.84" y1="68.3" x2="651.84" y2="78.3" stroke="#00bb00" stroke-width="0.9"/>
<line x1="651.84" y1="89.1" x2="651.84" y2="99.7" stroke="#00bb00" stroke-width="0.9"/>
<rect x="645.24" y="78.3" width="13.20" height="10.80" fill="#fff" stroke="#00bb00" stroke-width="0.9"/>
<line x1="668.92" y1="84.2" x2="668.92" y2="89.1" stroke="#00bb00" stroke-width="0.9"/>
<line x1="668.92" y1="108.9" x2="668.92" y2="124.0" stroke="#00bb00" stroke-width="0.9"/>
<rect x="662.32" y="89.1" width="13.20" height="19.80" fill="#fff" stroke="#00bb00" stroke-width="0.9"/>
<line x1="686.00" y1="105.4" x2="686.00" y2="108.9" stroke="#00bb00" stroke-width="0.9"/>
<line x1="686.00" y1="137.2" x2="686.00" y2="143.8" stroke="#00bb00" stroke-width="0.9"/>
<rect x="679.40" y="108.9" width="13.20" height="28.30" fill="#fff" stroke="#00bb00" stroke-width="0.9"/>
<line x1="703.08" y1="121.3" x2="703.08" y2="122.2" stroke="#00bb00" stroke-width="0.9"/>
<line x1="703.08" y1="137.5" x2="703.08" y2="145.4" stroke="#00bb00" stroke-width="0.9"/>
<rect x="696.48" y="122.2" width="13.20" height="15.30" fill="#000" stroke="#00bb00" stroke-width="0.9"/>
<line x1="720.16" y1="115.0" x2="720.16" y2="117.2" stroke="#00bb00" stroke-width="0.9"/>
<line x1="720.16" y1="124.0" x2="720.16" y2="129.2" stroke="#00bb00" stroke-width="0.9"/>
<rect x="713.56" y="117.2" width="13.20" height="6.80" fill="#000" stroke="#00bb00" stroke-width="0.9"/>
<line x1="737.24" y1="112.4" x2="737.24" y2="113.3" stroke="#00bb00" stroke-width="0.9"/>
<rect x="730.64" y="72.3" width="13.20" height="40.10" fill="#000" stroke="#00bb00" stroke-width="0.9"/>
<line x1="754.32" y1="39.7" x2="754.32" y2="71.8" stroke="#00bb00" stroke-width="0.9"/>
<line x1="754.32" y1="76.7" x2="754.32" y2="79.8" stroke="#00bb00" stroke-width="0.9"/>
<rect x="747.72" y="71.8" width="13.20" height="4.90" fill="#fff" stroke="#00bb00" stroke-width="0.9"/>
<line x1="771.40" y1="64.9" x2="771.40" y2="75.9" stroke="#00bb00" stroke-width="0.9"/>
<rect x="764.80" y="75.9" width="13.20" height="10.90" fill="#fff" stroke="#00bb00" stroke-width="0.9"/>
<ellipse cx="88.20" cy="177.90" rx="2.3" ry="1.74" fill="#f0a030"/>
<ellipse cx="88.20" cy="180.70" rx="2.3" ry="1.74" fill="#f0a030"/>
<ellipse cx="88.20" cy="183.50" rx="2.3" ry="1.74" fill="#f0a030"/>
<ellipse cx="88.20" cy="186.30" rx="2.3" ry="1.74" fill="#f0a030"/>
<ellipse cx="87.10" cy="177.60" rx="1.0" ry="1.26" fill="#fff4dc" opacity="0.9"/>
<rect x="89.60" y="177.40" width="1.0" height="1.0" fill="#e4381c"/>
<rect x="88.30" y="178.10" width="0.9" height="0.9" fill="#a8d040"/>
<ellipse cx="87.10" cy="180.40" rx="1.0" ry="1.26" fill="#fff4dc" opacity="0.9"/>
<rect x="89.60" y="180.20" width="1.0" height="1.0" fill="#e4381c"/>
<rect x="88.30" y="180.90" width="0.9" height="0.9" fill="#a8d040"/>
<ellipse cx="87.10" cy="183.20" rx="1.0" ry="1.26" fill="#fff4dc" opacity="0.9"/>
<rect x="89.60" y="183.00" width="1.0" height="1.0" fill="#e4381c"/>
<rect x="88.30" y="183.70" width="0.9" height="0.9" fill="#a8d040"/>
<ellipse cx="87.10" cy="186.00" rx="1.0" ry="1.26" fill="#fff4dc" opacity="0.9"/>
<rect x="89.60" y="185.80" width="1.0" height="1.0" fill="#e4381c"/>
<rect x="88.30" y="186.50" width="0.9" height="0.9" fill="#a8d040"/>
<ellipse cx="122.36" cy="142.82" rx="2.3" ry="1.64" fill="#f0a030"/>
<ellipse cx="122.36" cy="145.47" rx="2.3" ry="1.64" fill="#f0a030"/>
<ellipse cx="122.36" cy="148.12" rx="2.3" ry="1.64" fill="#f0a030"/>
<ellipse cx="122.36" cy="150.78" rx="2.3" ry="1.64" fill="#f0a030"/>
<ellipse cx="122.36" cy="153.42" rx="2.3" ry="1.64" fill="#f0a030"/>
<ellipse cx="122.36" cy="156.07" rx="2.3" ry="1.64" fill="#f0a030"/>
<ellipse cx="122.36" cy="158.72" rx="2.3" ry="1.64" fill="#f0a030"/>
<ellipse cx="122.36" cy="161.38" rx="2.3" ry="1.64" fill="#f0a030"/>
<ellipse cx="121.26" cy="142.52" rx="1.0" ry="1.19" fill="#fff4dc" opacity="0.9"/>
<rect x="123.76" y="142.32" width="1.0" height="1.0" fill="#e4381c"/>
<rect x="122.46" y="143.02" width="0.9" height="0.9" fill="#a8d040"/>
<ellipse cx="121.26" cy="145.17" rx="1.0" ry="1.19" fill="#fff4dc" opacity="0.9"/>
<rect x="123.76" y="144.97" width="1.0" height="1.0" fill="#e4381c"/>
<rect x="122.46" y="145.67" width="0.9" height="0.9" fill="#a8d040"/>
<ellipse cx="121.26" cy="147.82" rx="1.0" ry="1.19" fill="#fff4dc" opacity="0.9"/>
<rect x="123.76" y="147.62" width="1.0" height="1.0" fill="#e4381c"/>
<rect x="122.46" y="148.32" width="0.9" height="0.9" fill="#a8d040"/>
<ellipse cx="121.26" cy="150.47" rx="1.0" ry="1.19" fill="#fff4dc" opacity="0.9"/>
<rect x="123.76" y="150.28" width="1.0" height="1.0" fill="#e4381c"/>
<rect x="122.46" y="150.97" width="0.9" height="0.9" fill="#a8d040"/>
<ellipse cx="121.26" cy="153.12" rx="1.0" ry="1.19" fill="#fff4dc" opacity="0.9"/>
<rect x="123.76" y="152.92" width="1.0" height="1.0" fill="#e4381c"/>
<rect x="122.46" y="153.62" width="0.9" height="0.9" fill="#a8d040"/>
<ellipse cx="121.26" cy="155.77" rx="1.0" ry="1.19" fill="#fff4dc" opacity="0.9"/>
<rect x="123.76" y="155.57" width="1.0" height="1.0" fill="#e4381c"/>
<rect x="122.46" y="156.27" width="0.9" height="0.9" fill="#a8d040"/>
<ellipse cx="121.26" cy="158.42" rx="1.0" ry="1.19" fill="#fff4dc" opacity="0.9"/>
<rect x="123.76" y="158.22" width="1.0" height="1.0" fill="#e4381c"/>
<rect x="122.46" y="158.92" width="0.9" height="0.9" fill="#a8d040"/>
<ellipse cx="121.26" cy="161.07" rx="1.0" ry="1.19" fill="#fff4dc" opacity="0.9"/>
<rect x="123.76" y="160.88" width="1.0" height="1.0" fill="#e4381c"/>
<rect x="122.46" y="161.57" width="0.9" height="0.9" fill="#a8d040"/>
<ellipse cx="122.36" cy="207.33" rx="2.3" ry="1.65" fill="#30e030"/>
<ellipse cx="122.36" cy="210.00" rx="2.3" ry="1.65" fill="#30e030"/>
<ellipse cx="122.36" cy="212.67" rx="2.3" ry="1.65" fill="#30e030"/>
<ellipse cx="121.26" cy="207.03" rx="1.0" ry="1.20" fill="#fff4dc" opacity="0.9"/>
<rect x="123.76" y="206.83" width="1.0" height="1.0" fill="#e4381c"/>
<ellipse cx="121.26" cy="209.70" rx="1.0" ry="1.20" fill="#fff4dc" opacity="0.9"/>
<rect x="123.76" y="209.50" width="1.0" height="1.0" fill="#e4381c"/>
<ellipse cx="121.26" cy="212.37" rx="1.0" ry="1.20" fill="#fff4dc" opacity="0.9"/>
<rect x="123.76" y="212.17" width="1.0" height="1.0" fill="#e4381c"/>
<ellipse cx="139.44" cy="166.15" rx="2.3" ry="1.50" fill="#f0a030"/>
<ellipse cx="138.34" cy="165.85" rx="1.0" ry="1.00" fill="#fff4dc" opacity="0.9"/>
<rect x="140.84" y="165.65" width="1.0" height="1.0" fill="#e4381c"/>
<rect x="139.54" y="166.35" width="0.9" height="0.9" fill="#a8d040"/>
<ellipse cx="156.52" cy="148.24" rx="2.3" ry="1.78" fill="#f0a030"/>
<ellipse cx="156.52" cy="151.11" rx="2.3" ry="1.78" fill="#f0a030"/>
<ellipse cx="156.52" cy="153.99" rx="2.3" ry="1.78" fill="#f0a030"/>
<ellipse cx="156.52" cy="156.86" rx="2.3" ry="1.78" fill="#f0a030"/>
<ellipse cx="155.42" cy="147.94" rx="1.0" ry="1.29" fill="#fff4dc" opacity="0.9"/>
<rect x="157.92" y="147.74" width="1.0" height="1.0" fill="#e4381c"/>
<rect x="156.62" y="148.44" width="0.9" height="0.9" fill="#a8d040"/>
<ellipse cx="155.42" cy="150.81" rx="1.0" ry="1.29" fill="#fff4dc" opacity="0.9"/>
<rect x="157.92" y="150.61" width="1.0" height="1.0" fill="#e4381c"/>
<rect x="156.62" y="151.31" width="0.9" height="0.9" fill="#a8d040"/>
<ellipse cx="155.42" cy="153.69" rx="1.0" ry="1.29" fill="#fff4dc" opacity="0.9"/>
<rect x="157.92" y="153.49" width="1.0" height="1.0" fill="#e4381c"/>
<rect x="156.62" y="154.19" width="0.9" height="0.9" fill="#a8d040"/>
<ellipse cx="155.42" cy="156.56" rx="1.0" ry="1.29" fill="#fff4dc" opacity="0.9"/>
<rect x="157.92" y="156.36" width="1.0" height="1.0" fill="#e4381c"/>
<rect x="156.62" y="157.06" width="0.9" height="0.9" fill="#a8d040"/>
<ellipse cx="173.60" cy="147.38" rx="2.3" ry="1.71" fill="#f0a030"/>
<ellipse cx="173.60" cy="150.12" rx="2.3" ry="1.71" fill="#f0a030"/>
<ellipse cx="172.50" cy="147.07" rx="1.0" ry="1.24" fill="#fff4dc" opacity="0.9"/>
<rect x="175.00" y="146.88" width="1.0" height="1.0" fill="#e4381c"/>
<rect x="173.70" y="147.57" width="0.9" height="0.9" fill="#a8d040"/>
<ellipse cx="172.50" cy="149.82" rx="1.0" ry="1.24" fill="#fff4dc" opacity="0.9"/>
<rect x="175.00" y="149.62" width="1.0" height="1.0" fill="#e4381c"/>
<rect x="173.70" y="150.32" width="0.9" height="0.9" fill="#a8d040"/>
<ellipse cx="190.68" cy="169.24" rx="2.3" ry="1.54" fill="#30e030"/>
<ellipse cx="190.68" cy="171.72" rx="2.3" ry="1.54" fill="#30e030"/>
<ellipse cx="190.68" cy="174.20" rx="2.3" ry="1.54" fill="#30e030"/>
<ellipse cx="190.68" cy="176.68" rx="2.3" ry="1.54" fill="#30e030"/>
<ellipse cx="190.68" cy="179.16" rx="2.3" ry="1.54" fill="#30e030"/>
<ellipse cx="189.58" cy="168.94" rx="1.0" ry="1.12" fill="#fff4dc" opacity="0.9"/>
<rect x="192.08" y="168.74" width="1.0" height="1.0" fill="#e4381c"/>
<ellipse cx="189.58" cy="171.42" rx="1.0" ry="1.12" fill="#fff4dc" opacity="0.9"/>
<rect x="192.08" y="171.22" width="1.0" height="1.0" fill="#e4381c"/>
<ellipse cx="189.58" cy="173.90" rx="1.0" ry="1.12" fill="#fff4dc" opacity="0.9"/>
<rect x="192.08" y="173.70" width="1.0" height="1.0" fill="#e4381c"/>
<ellipse cx="189.58" cy="176.38" rx="1.0" ry="1.12" fill="#fff4dc" opacity="0.9"/>
<rect x="192.08" y="176.18" width="1.0" height="1.0" fill="#e4381c"/>
<ellipse cx="189.58" cy="178.86" rx="1.0" ry="1.12" fill="#fff4dc" opacity="0.9"/>
<rect x="192.08" y="178.66" width="1.0" height="1.0" fill="#e4381c"/>
<ellipse cx="207.76" cy="193.17" rx="2.3" ry="1.50" fill="#30e030"/>
<ellipse cx="207.76" cy="195.50" rx="2.3" ry="1.50" fill="#30e030"/>
<ellipse cx="207.76" cy="197.83" rx="2.3" ry="1.50" fill="#30e030"/>
<ellipse cx="206.66" cy="192.87" rx="1.0" ry="1.05" fill="#fff4dc" opacity="0.9"/>
<rect x="209.16" y="192.67" width="1.0" height="1.0" fill="#e4381c"/>
<ellipse cx="206.66" cy="195.20" rx="1.0" ry="1.05" fill="#fff4dc" opacity="0.9"/>
<rect x="209.16" y="195.00" width="1.0" height="1.0" fill="#e4381c"/>
<ellipse cx="206.66" cy="197.53" rx="1.0" ry="1.05" fill="#fff4dc" opacity="0.9"/>
<rect x="209.16" y="197.33" width="1.0" height="1.0" fill="#e4381c"/>
<ellipse cx="241.92" cy="199.21" rx="2.3" ry="1.50" fill="#30e030"/>
<ellipse cx="241.92" cy="201.64" rx="2.3" ry="1.50" fill="#30e030"/>
<ellipse cx="241.92" cy="204.06" rx="2.3" ry="1.50" fill="#30e030"/>
<ellipse cx="241.92" cy="206.49" rx="2.3" ry="1.50" fill="#30e030"/>
<ellipse cx="240.82" cy="198.91" rx="1.0" ry="1.09" fill="#fff4dc" opacity="0.9"/>
<rect x="243.32" y="198.71" width="1.0" height="1.0" fill="#e4381c"/>
<ellipse cx="240.82" cy="201.34" rx="1.0" ry="1.09" fill="#fff4dc" opacity="0.9"/>
<rect x="243.32" y="201.14" width="1.0" height="1.0" fill="#e4381c"/>
<ellipse cx="240.82" cy="203.76" rx="1.0" ry="1.09" fill="#fff4dc" opacity="0.9"/>
<rect x="243.32" y="203.56" width="1.0" height="1.0" fill="#e4381c"/>
<ellipse cx="240.82" cy="206.19" rx="1.0" ry="1.09" fill="#fff4dc" opacity="0.9"/>
<rect x="243.32" y="205.99" width="1.0" height="1.0" fill="#e4381c"/>
<ellipse cx="259.00" cy="199.33" rx="2.3" ry="1.65" fill="#30e030"/>
<ellipse cx="259.00" cy="201.99" rx="2.3" ry="1.65" fill="#30e030"/>
<ellipse cx="259.00" cy="204.65" rx="2.3" ry="1.65" fill="#30e030"/>
<ellipse cx="259.00" cy="207.31" rx="2.3" ry="1.65" fill="#30e030"/>
<ellipse cx="259.00" cy="209.97" rx="2.3" ry="1.65" fill="#30e030"/>
<ellipse cx="257.90" cy="199.03" rx="1.0" ry="1.20" fill="#fff4dc" opacity="0.9"/>
<rect x="260.40" y="198.83" width="1.0" height="1.0" fill="#e4381c"/>
<ellipse cx="257.90" cy="201.69" rx="1.0" ry="1.20" fill="#fff4dc" opacity="0.9"/>
<rect x="260.40" y="201.49" width="1.0" height="1.0" fill="#e4381c"/>
<ellipse cx="257.90" cy="204.35" rx="1.0" ry="1.20" fill="#fff4dc" opacity="0.9"/>
<rect x="260.40" y="204.15" width="1.0" height="1.0" fill="#e4381c"/>
<ellipse cx="257.90" cy="207.01" rx="1.0" ry="1.20" fill="#fff4dc" opacity="0.9"/>
<rect x="260.40" y="206.81" width="1.0" height="1.0" fill="#e4381c"/>
<ellipse cx="257.90" cy="209.67" rx="1.0" ry="1.20" fill="#fff4dc" opacity="0.9"/>
<rect x="260.40" y="209.47" width="1.0" height="1.0" fill="#e4381c"/>
<ellipse cx="276.08" cy="152.46" rx="2.3" ry="1.81" fill="#f0a030"/>
<ellipse cx="276.08" cy="155.38" rx="2.3" ry="1.81" fill="#f0a030"/>
<ellipse cx="276.08" cy="158.30" rx="2.3" ry="1.81" fill="#f0a030"/>
<ellipse cx="276.08" cy="161.22" rx="2.3" ry="1.81" fill="#f0a030"/>
<ellipse cx="276.08" cy="164.14" rx="2.3" ry="1.81" fill="#f0a030"/>
<ellipse cx="274.98" cy="152.16" rx="1.0" ry="1.31" fill="#fff4dc" opacity="0.9"/>
<rect x="277.48" y="151.96" width="1.0" height="1.0" fill="#e4381c"/>
<rect x="276.18" y="152.66" width="0.9" height="0.9" fill="#a8d040"/>
<ellipse cx="274.98" cy="155.08" rx="1.0" ry="1.31" fill="#fff4dc" opacity="0.9"/>
<rect x="277.48" y="154.88" width="1.0" height="1.0" fill="#e4381c"/>
<rect x="276.18" y="155.58" width="0.9" height="0.9" fill="#a8d040"/>
<ellipse cx="274.98" cy="158.00" rx="1.0" ry="1.31" fill="#fff4dc" opacity="0.9"/>
<rect x="277.48" y="157.80" width="1.0" height="1.0" fill="#e4381c"/>
<rect x="276.18" y="158.50" width="0.9" height="0.9" fill="#a8d040"/>
<ellipse cx="274.98" cy="160.92" rx="1.0" ry="1.31" fill="#fff4dc" opacity="0.9"/>
<rect x="277.48" y="160.72" width="1.0" height="1.0" fill="#e4381c"/>
<rect x="276.18" y="161.42" width="0.9" height="0.9" fill="#a8d040"/>
<ellipse cx="274.98" cy="163.84" rx="1.0" ry="1.31" fill="#fff4dc" opacity="0.9"/>
<rect x="277.48" y="163.64" width="1.0" height="1.0" fill="#e4381c"/>
<rect x="276.18" y="164.34" width="0.9" height="0.9" fill="#a8d040"/>
<ellipse cx="293.16" cy="158.17" rx="2.3" ry="1.50" fill="#f0a030"/>
<ellipse cx="293.16" cy="160.50" rx="2.3" ry="1.50" fill="#f0a030"/>
<ellipse cx="293.16" cy="162.83" rx="2.3" ry="1.50" fill="#f0a030"/>
<ellipse cx="292.06" cy="157.87" rx="1.0" ry="1.05" fill="#fff4dc" opacity="0.9"/>
<rect x="294.56" y="157.67" width="1.0" height="1.0" fill="#e4381c"/>
<rect x="293.26" y="158.37" width="0.9" height="0.9" fill="#a8d040"/>
<ellipse cx="292.06" cy="160.20" rx="1.0" ry="1.05" fill="#fff4dc" opacity="0.9"/>
<rect x="294.56" y="160.00" width="1.0" height="1.0" fill="#e4381c"/>
<rect x="293.26" y="160.70" width="0.9" height="0.9" fill="#a8d040"/>
<ellipse cx="292.06" cy="162.53" rx="1.0" ry="1.05" fill="#fff4dc" opacity="0.9"/>
<rect x="294.56" y="162.33" width="1.0" height="1.0" fill="#e4381c"/>
<rect x="293.26" y="163.03" width="0.9" height="0.9" fill="#a8d040"/>
<ellipse cx="310.24" cy="152.20" rx="2.3" ry="2.23" fill="#f0a030"/>
<ellipse cx="309.14" cy="151.90" rx="1.0" ry="1.62" fill="#fff4dc" opacity="0.9"/>
<rect x="311.64" y="151.70" width="1.0" height="1.0" fill="#e4381c"/>
<rect x="310.34" y="152.40" width="0.9" height="0.9" fill="#a8d040"/>
<ellipse cx="327.32" cy="173.35" rx="2.3" ry="1.50" fill="#30e030"/>
<ellipse cx="326.22" cy="173.05" rx="1.0" ry="1.00" fill="#fff4dc" opacity="0.9"/>
<rect x="328.72" y="172.85" width="1.0" height="1.0" fill="#e4381c"/>
<ellipse cx="344.40" cy="176.62" rx="2.3" ry="2.02" fill="#30e030"/>
<ellipse cx="344.40" cy="179.88" rx="2.3" ry="2.02" fill="#30e030"/>
<ellipse cx="343.30" cy="176.32" rx="1.0" ry="1.46" fill="#fff4dc" opacity="0.9"/>
<rect x="345.80" y="176.12" width="1.0" height="1.0" fill="#e4381c"/>
<ellipse cx="343.30" cy="179.57" rx="1.0" ry="1.46" fill="#fff4dc" opacity="0.9"/>
<rect x="345.80" y="179.38" width="1.0" height="1.0" fill="#e4381c"/>
<ellipse cx="361.48" cy="176.17" rx="2.3" ry="1.50" fill="#30e030"/>
<ellipse cx="361.48" cy="178.50" rx="2.3" ry="1.50" fill="#30e030"/>
<ellipse cx="361.48" cy="180.83" rx="2.3" ry="1.50" fill="#30e030"/>
<ellipse cx="360.38" cy="175.87" rx="1.0" ry="1.05" fill="#fff4dc" opacity="0.9"/>
<rect x="362.88" y="175.67" width="1.0" height="1.0" fill="#e4381c"/>
<ellipse cx="360.38" cy="178.20" rx="1.0" ry="1.05" fill="#fff4dc" opacity="0.9"/>
<rect x="362.88" y="178.00" width="1.0" height="1.0" fill="#e4381c"/>
<ellipse cx="360.38" cy="180.53" rx="1.0" ry="1.05" fill="#fff4dc" opacity="0.9"/>
<rect x="362.88" y="180.33" width="1.0" height="1.0" fill="#e4381c"/>
<ellipse cx="378.56" cy="151.33" rx="2.3" ry="1.65" fill="#f0a030"/>
<ellipse cx="378.56" cy="154.00" rx="2.3" ry="1.65" fill="#f0a030"/>
<ellipse cx="378.56" cy="156.67" rx="2.3" ry="1.65" fill="#f0a030"/>
<ellipse cx="377.46" cy="151.03" rx="1.0" ry="1.20" fill="#fff4dc" opacity="0.9"/>
<rect x="379.96" y="150.83" width="1.0" height="1.0" fill="#e4381c"/>
<rect x="378.66" y="151.53" width="0.9" height="0.9" fill="#a8d040"/>
<ellipse cx="377.46" cy="153.70" rx="1.0" ry="1.20" fill="#fff4dc" opacity="0.9"/>
<rect x="379.96" y="153.50" width="1.0" height="1.0" fill="#e4381c"/>
<rect x="378.66" y="154.20" width="0.9" height="0.9" fill="#a8d040"/>
<ellipse cx="377.46" cy="156.37" rx="1.0" ry="1.20" fill="#fff4dc" opacity="0.9"/>
<rect x="379.96" y="156.17" width="1.0" height="1.0" fill="#e4381c"/>
<rect x="378.66" y="156.87" width="0.9" height="0.9" fill="#a8d040"/>
<ellipse cx="395.64" cy="152.07" rx="2.3" ry="1.50" fill="#f0a030"/>
<ellipse cx="395.64" cy="154.23" rx="2.3" ry="1.50" fill="#f0a030"/>
<ellipse cx="394.54" cy="151.77" rx="1.0" ry="1.00" fill="#fff4dc" opacity="0.9"/>
<rect x="397.04" y="151.57" width="1.0" height="1.0" fill="#e4381c"/>
<rect x="395.74" y="152.27" width="0.9" height="0.9" fill="#a8d040"/>
<ellipse cx="394.54" cy="153.93" rx="1.0" ry="1.00" fill="#fff4dc" opacity="0.9"/>
<rect x="397.04" y="153.73" width="1.0" height="1.0" fill="#e4381c"/>
<rect x="395.74" y="154.43" width="0.9" height="0.9" fill="#a8d040"/>
<ellipse cx="412.72" cy="147.42" rx="2.3" ry="1.76" fill="#f0a030"/>
<ellipse cx="412.72" cy="150.25" rx="2.3" ry="1.76" fill="#f0a030"/>
<ellipse cx="412.72" cy="153.08" rx="2.3" ry="1.76" fill="#f0a030"/>
<ellipse cx="411.62" cy="147.12" rx="1.0" ry="1.28" fill="#fff4dc" opacity="0.9"/>
<rect x="414.12" y="146.92" width="1.0" height="1.0" fill="#e4381c"/>
<rect x="412.82" y="147.62" width="0.9" height="0.9" fill="#a8d040"/>
<ellipse cx="411.62" cy="149.95" rx="1.0" ry="1.28" fill="#fff4dc" opacity="0.9"/>
<rect x="414.12" y="149.75" width="1.0" height="1.0" fill="#e4381c"/>
<rect x="412.82" y="150.45" width="0.9" height="0.9" fill="#a8d040"/>
<ellipse cx="411.62" cy="152.78" rx="1.0" ry="1.28" fill="#fff4dc" opacity="0.9"/>
<rect x="414.12" y="152.58" width="1.0" height="1.0" fill="#e4381c"/>
<rect x="412.82" y="153.28" width="0.9" height="0.9" fill="#a8d040"/>
<ellipse cx="412.72" cy="163.25" rx="2.3" ry="1.55" fill="#30e030"/>
<ellipse cx="411.62" cy="162.95" rx="1.0" ry="1.12" fill="#fff4dc" opacity="0.9"/>
<rect x="414.12" y="162.75" width="1.0" height="1.0" fill="#e4381c"/>
<ellipse cx="429.80" cy="172.25" rx="2.3" ry="1.55" fill="#30e030"/>
<ellipse cx="429.80" cy="174.75" rx="2.3" ry="1.55" fill="#30e030"/>
<ellipse cx="428.70" cy="171.95" rx="1.0" ry="1.12" fill="#fff4dc" opacity="0.9"/>
<rect x="431.20" y="171.75" width="1.0" height="1.0" fill="#e4381c"/>
<ellipse cx="428.70" cy="174.45" rx="1.0" ry="1.12" fill="#fff4dc" opacity="0.9"/>
<rect x="431.20" y="174.25" width="1.0" height="1.0" fill="#e4381c"/>
<ellipse cx="481.04" cy="154.50" rx="2.3" ry="1.86" fill="#f0a030"/>
<ellipse cx="481.04" cy="157.50" rx="2.3" ry="1.86" fill="#f0a030"/>
<ellipse cx="479.94" cy="154.20" rx="1.0" ry="1.35" fill="#fff4dc" opacity="0.9"/>
<rect x="482.44" y="154.00" width="1.0" height="1.0" fill="#e4381c"/>
<rect x="481.14" y="154.70" width="0.9" height="0.9" fill="#a8d040"/>
<ellipse cx="479.94" cy="157.20" rx="1.0" ry="1.35" fill="#fff4dc" opacity="0.9"/>
<rect x="482.44" y="157.00" width="1.0" height="1.0" fill="#e4381c"/>
<rect x="481.14" y="157.70" width="0.9" height="0.9" fill="#a8d040"/>
<ellipse cx="515.20" cy="144.18" rx="2.3" ry="1.50" fill="#f0a030"/>
<ellipse cx="515.20" cy="146.52" rx="2.3" ry="1.50" fill="#f0a030"/>
<ellipse cx="514.10" cy="143.88" rx="1.0" ry="1.06" fill="#fff4dc" opacity="0.9"/>
<rect x="516.60" y="143.68" width="1.0" height="1.0" fill="#e4381c"/>
<rect x="515.30" y="144.38" width="0.9" height="0.9" fill="#a8d040"/>
<ellipse cx="514.10" cy="146.22" rx="1.0" ry="1.06" fill="#fff4dc" opacity="0.9"/>
<rect x="516.60" y="146.02" width="1.0" height="1.0" fill="#e4381c"/>
<rect x="515.30" y="146.72" width="0.9" height="0.9" fill="#a8d040"/>
<ellipse cx="532.28" cy="95.50" rx="2.3" ry="1.86" fill="#f0a030"/>
<ellipse cx="532.28" cy="98.50" rx="2.3" ry="1.86" fill="#f0a030"/>
<ellipse cx="531.18" cy="95.20" rx="1.0" ry="1.35" fill="#fff4dc" opacity="0.9"/>
<rect x="533.68" y="95.00" width="1.0" height="1.0" fill="#e4381c"/>
<rect x="532.38" y="95.70" width="0.9" height="0.9" fill="#a8d040"/>
<ellipse cx="531.18" cy="98.20" rx="1.0" ry="1.35" fill="#fff4dc" opacity="0.9"/>
<rect x="533.68" y="98.00" width="1.0" height="1.0" fill="#e4381c"/>
<rect x="532.38" y="98.70" width="0.9" height="0.9" fill="#a8d040"/>
<ellipse cx="549.36" cy="52.80" rx="2.3" ry="1.61" fill="#f0a030"/>
<ellipse cx="549.36" cy="55.40" rx="2.3" ry="1.61" fill="#f0a030"/>
<ellipse cx="549.36" cy="58.00" rx="2.3" ry="1.61" fill="#f0a030"/>
<ellipse cx="549.36" cy="60.60" rx="2.3" ry="1.61" fill="#f0a030"/>
<ellipse cx="549.36" cy="63.20" rx="2.3" ry="1.61" fill="#f0a030"/>
<ellipse cx="549.36" cy="65.80" rx="2.3" ry="1.61" fill="#f0a030"/>
<ellipse cx="549.36" cy="68.40" rx="2.3" ry="1.61" fill="#f0a030"/>
<ellipse cx="548.26" cy="52.50" rx="1.0" ry="1.17" fill="#fff4dc" opacity="0.9"/>
<rect x="550.76" y="52.30" width="1.0" height="1.0" fill="#e4381c"/>
<rect x="549.46" y="53.00" width="0.9" height="0.9" fill="#a8d040"/>
<ellipse cx="548.26" cy="55.10" rx="1.0" ry="1.17" fill="#fff4dc" opacity="0.9"/>
<rect x="550.76" y="54.90" width="1.0" height="1.0" fill="#e4381c"/>
<rect x="549.46" y="55.60" width="0.9" height="0.9" fill="#a8d040"/>
<ellipse cx="548.26" cy="57.70" rx="1.0" ry="1.17" fill="#fff4dc" opacity="0.9"/>
<rect x="550.76" y="57.50" width="1.0" height="1.0" fill="#e4381c"/>
<rect x="549.46" y="58.20" width="0.9" height="0.9" fill="#a8d040"/>
<ellipse cx="548.26" cy="60.30" rx="1.0" ry="1.17" fill="#fff4dc" opacity="0.9"/>
<rect x="550.76" y="60.10" width="1.0" height="1.0" fill="#e4381c"/>
<rect x="549.46" y="60.80" width="0.9" height="0.9" fill="#a8d040"/>
<ellipse cx="548.26" cy="62.90" rx="1.0" ry="1.17" fill="#fff4dc" opacity="0.9"/>
<rect x="550.76" y="62.70" width="1.0" height="1.0" fill="#e4381c"/>
<rect x="549.46" y="63.40" width="0.9" height="0.9" fill="#a8d040"/>
<ellipse cx="548.26" cy="65.50" rx="1.0" ry="1.17" fill="#fff4dc" opacity="0.9"/>
<rect x="550.76" y="65.30" width="1.0" height="1.0" fill="#e4381c"/>
<rect x="549.46" y="66.00" width="0.9" height="0.9" fill="#a8d040"/>
<ellipse cx="548.26" cy="68.10" rx="1.0" ry="1.17" fill="#fff4dc" opacity="0.9"/>
<rect x="550.76" y="67.90" width="1.0" height="1.0" fill="#e4381c"/>
<rect x="549.46" y="68.60" width="0.9" height="0.9" fill="#a8d040"/>
<ellipse cx="549.36" cy="101.58" rx="2.3" ry="1.95" fill="#f0a030"/>
<ellipse cx="549.36" cy="104.72" rx="2.3" ry="1.95" fill="#f0a030"/>
<ellipse cx="548.26" cy="101.28" rx="1.0" ry="1.42" fill="#fff4dc" opacity="0.9"/>
<rect x="550.76" y="101.08" width="1.0" height="1.0" fill="#e4381c"/>
<rect x="549.46" y="101.78" width="0.9" height="0.9" fill="#a8d040"/>
<ellipse cx="548.26" cy="104.42" rx="1.0" ry="1.42" fill="#fff4dc" opacity="0.9"/>
<rect x="550.76" y="104.22" width="1.0" height="1.0" fill="#e4381c"/>
<rect x="549.46" y="104.92" width="0.9" height="0.9" fill="#a8d040"/>
<ellipse cx="566.44" cy="52.81" rx="2.3" ry="1.63" fill="#f0a030"/>
<ellipse cx="566.44" cy="55.44" rx="2.3" ry="1.63" fill="#f0a030"/>
<ellipse cx="566.44" cy="58.06" rx="2.3" ry="1.63" fill="#f0a030"/>
<ellipse cx="566.44" cy="60.69" rx="2.3" ry="1.63" fill="#f0a030"/>
<ellipse cx="565.34" cy="52.51" rx="1.0" ry="1.18" fill="#fff4dc" opacity="0.9"/>
<rect x="567.84" y="52.31" width="1.0" height="1.0" fill="#e4381c"/>
<rect x="566.54" y="53.01" width="0.9" height="0.9" fill="#a8d040"/>
<ellipse cx="565.34" cy="55.14" rx="1.0" ry="1.18" fill="#fff4dc" opacity="0.9"/>
<rect x="567.84" y="54.94" width="1.0" height="1.0" fill="#e4381c"/>
<rect x="566.54" y="55.64" width="0.9" height="0.9" fill="#a8d040"/>
<ellipse cx="565.34" cy="57.76" rx="1.0" ry="1.18" fill="#fff4dc" opacity="0.9"/>
<rect x="567.84" y="57.56" width="1.0" height="1.0" fill="#e4381c"/>
<rect x="566.54" y="58.26" width="0.9" height="0.9" fill="#a8d040"/>
<ellipse cx="565.34" cy="60.39" rx="1.0" ry="1.18" fill="#fff4dc" opacity="0.9"/>
<rect x="567.84" y="60.19" width="1.0" height="1.0" fill="#e4381c"/>
<rect x="566.54" y="60.89" width="0.9" height="0.9" fill="#a8d040"/>
<ellipse cx="583.52" cy="46.75" rx="2.3" ry="1.80" fill="#f0a030"/>
<ellipse cx="583.52" cy="49.65" rx="2.3" ry="1.80" fill="#f0a030"/>
<ellipse cx="583.52" cy="52.55" rx="2.3" ry="1.80" fill="#f0a030"/>
<ellipse cx="582.42" cy="46.45" rx="1.0" ry="1.31" fill="#fff4dc" opacity="0.9"/>
<rect x="584.92" y="46.25" width="1.0" height="1.0" fill="#e4381c"/>
<rect x="583.62" y="46.95" width="0.9" height="0.9" fill="#a8d040"/>
<ellipse cx="582.42" cy="49.35" rx="1.0" ry="1.31" fill="#fff4dc" opacity="0.9"/>
<rect x="584.92" y="49.15" width="1.0" height="1.0" fill="#e4381c"/>
<rect x="583.62" y="49.85" width="0.9" height="0.9" fill="#a8d040"/>
<ellipse cx="582.42" cy="52.25" rx="1.0" ry="1.31" fill="#fff4dc" opacity="0.9"/>
<rect x="584.92" y="52.05" width="1.0" height="1.0" fill="#e4381c"/>
<rect x="583.62" y="52.75" width="0.9" height="0.9" fill="#a8d040"/>
<ellipse cx="600.60" cy="97.00" rx="2.3" ry="1.50" fill="#30e030"/>
<ellipse cx="599.50" cy="96.70" rx="1.0" ry="1.00" fill="#fff4dc" opacity="0.9"/>
<rect x="602.00" y="96.50" width="1.0" height="1.0" fill="#e4381c"/>
<ellipse cx="617.68" cy="83.73" rx="2.3" ry="1.65" fill="#30e030"/>
<ellipse cx="617.68" cy="86.40" rx="2.3" ry="1.65" fill="#30e030"/>
<ellipse cx="617.68" cy="89.07" rx="2.3" ry="1.65" fill="#30e030"/>
<ellipse cx="616.58" cy="83.43" rx="1.0" ry="1.20" fill="#fff4dc" opacity="0.9"/>
<rect x="619.08" y="83.23" width="1.0" height="1.0" fill="#e4381c"/>
<ellipse cx="616.58" cy="86.10" rx="1.0" ry="1.20" fill="#fff4dc" opacity="0.9"/>
<rect x="619.08" y="85.90" width="1.0" height="1.0" fill="#e4381c"/>
<ellipse cx="616.58" cy="88.77" rx="1.0" ry="1.20" fill="#fff4dc" opacity="0.9"/>
<rect x="619.08" y="88.57" width="1.0" height="1.0" fill="#e4381c"/>
<ellipse cx="617.68" cy="98.50" rx="2.3" ry="1.86" fill="#30e030"/>
<ellipse cx="617.68" cy="101.50" rx="2.3" ry="1.86" fill="#30e030"/>
<ellipse cx="617.68" cy="104.50" rx="2.3" ry="1.86" fill="#30e030"/>
<ellipse cx="616.58" cy="98.20" rx="1.0" ry="1.35" fill="#fff4dc" opacity="0.9"/>
<rect x="619.08" y="98.00" width="1.0" height="1.0" fill="#e4381c"/>
<ellipse cx="616.58" cy="101.20" rx="1.0" ry="1.35" fill="#fff4dc" opacity="0.9"/>
<rect x="619.08" y="101.00" width="1.0" height="1.0" fill="#e4381c"/>
<ellipse cx="616.58" cy="104.20" rx="1.0" ry="1.35" fill="#fff4dc" opacity="0.9"/>
<rect x="619.08" y="104.00" width="1.0" height="1.0" fill="#e4381c"/>
<ellipse cx="634.76" cy="56.41" rx="2.3" ry="1.75" fill="#f0a030"/>
<ellipse cx="634.76" cy="59.24" rx="2.3" ry="1.75" fill="#f0a030"/>
<ellipse cx="634.76" cy="62.06" rx="2.3" ry="1.75" fill="#f0a030"/>
<ellipse cx="634.76" cy="64.89" rx="2.3" ry="1.75" fill="#f0a030"/>
<ellipse cx="634.76" cy="67.71" rx="2.3" ry="1.75" fill="#f0a030"/>
<ellipse cx="634.76" cy="70.54" rx="2.3" ry="1.75" fill="#f0a030"/>
<ellipse cx="634.76" cy="73.36" rx="2.3" ry="1.75" fill="#f0a030"/>
<ellipse cx="634.76" cy="76.19" rx="2.3" ry="1.75" fill="#f0a030"/>
<ellipse cx="633.66" cy="56.11" rx="1.0" ry="1.27" fill="#fff4dc" opacity="0.9"/>
<rect x="636.16" y="55.91" width="1.0" height="1.0" fill="#e4381c"/>
<rect x="634.86" y="56.61" width="0.9" height="0.9" fill="#a8d040"/>
<ellipse cx="633.66" cy="58.94" rx="1.0" ry="1.27" fill="#fff4dc" opacity="0.9"/>
<rect x="636.16" y="58.74" width="1.0" height="1.0" fill="#e4381c"/>
<rect x="634.86" y="59.44" width="0.9" height="0.9" fill="#a8d040"/>
<ellipse cx="633.66" cy="61.76" rx="1.0" ry="1.27" fill="#fff4dc" opacity="0.9"/>
<rect x="636.16" y="61.56" width="1.0" height="1.0" fill="#e4381c"/>
<rect x="634.86" y="62.26" width="0.9" height="0.9" fill="#a8d040"/>
<ellipse cx="633.66" cy="64.59" rx="1.0" ry="1.27" fill="#fff4dc" opacity="0.9"/>
<rect x="636.16" y="64.39" width="1.0" height="1.0" fill="#e4381c"/>
<rect x="634.86" y="65.09" width="0.9" height="0.9" fill="#a8d040"/>
<ellipse cx="633.66" cy="67.41" rx="1.0" ry="1.27" fill="#fff4dc" opacity="0.9"/>
<rect x="636.16" y="67.21" width="1.0" height="1.0" fill="#e4381c"/>
<rect x="634.86" y="67.91" width="0.9" height="0.9" fill="#a8d040"/>
<ellipse cx="633.66" cy="70.24" rx="1.0" ry="1.27" fill="#fff4dc" opacity="0.9"/>
<rect x="636.16" y="70.04" width="1.0" height="1.0" fill="#e4381c"/>
<rect x="634.86" y="70.74" width="0.9" height="0.9" fill="#a8d040"/>
<ellipse cx="633.66" cy="73.06" rx="1.0" ry="1.27" fill="#fff4dc" opacity="0.9"/>
<rect x="636.16" y="72.86" width="1.0" height="1.0" fill="#e4381c"/>
<rect x="634.86" y="73.56" width="0.9" height="0.9" fill="#a8d040"/>
<ellipse cx="633.66" cy="75.89" rx="1.0" ry="1.27" fill="#fff4dc" opacity="0.9"/>
<rect x="636.16" y="75.69" width="1.0" height="1.0" fill="#e4381c"/>
<rect x="634.86" y="76.39" width="0.9" height="0.9" fill="#a8d040"/>
<ellipse cx="754.32" cy="57.31" rx="2.3" ry="1.63" fill="#f0a030"/>
<ellipse cx="754.32" cy="59.94" rx="2.3" ry="1.63" fill="#f0a030"/>
<ellipse cx="754.32" cy="62.56" rx="2.3" ry="1.63" fill="#f0a030"/>
<ellipse cx="754.32" cy="65.19" rx="2.3" ry="1.63" fill="#f0a030"/>
<ellipse cx="753.22" cy="57.01" rx="1.0" ry="1.18" fill="#fff4dc" opacity="0.9"/>
<rect x="755.72" y="56.81" width="1.0" height="1.0" fill="#e4381c"/>
<rect x="754.42" y="57.51" width="0.9" height="0.9" fill="#a8d040"/>
<ellipse cx="753.22" cy="59.64" rx="1.0" ry="1.18" fill="#fff4dc" opacity="0.9"/>
<rect x="755.72" y="59.44" width="1.0" height="1.0" fill="#e4381c"/>
<rect x="754.42" y="60.14" width="0.9" height="0.9" fill="#a8d040"/>
<ellipse cx="753.22" cy="62.26" rx="1.0" ry="1.18" fill="#fff4dc" opacity="0.9"/>
<rect x="755.72" y="62.06" width="1.0" height="1.0" fill="#e4381c"/>
<rect x="754.42" y="62.76" width="0.9" height="0.9" fill="#a8d040"/>
<ellipse cx="753.22" cy="64.89" rx="1.0" ry="1.18" fill="#fff4dc" opacity="0.9"/>
<rect x="755.72" y="64.69" width="1.0" height="1.0" fill="#e4381c"/>
<rect x="754.42" y="65.39" width="0.9" height="0.9" fill="#a8d040"/>
<ellipse cx="771.40" cy="88.00" rx="2.3" ry="1.50" fill="#30e030"/>
<ellipse cx="771.40" cy="90.40" rx="2.3" ry="1.50" fill="#30e030"/>
<ellipse cx="771.40" cy="92.80" rx="2.3" ry="1.50" fill="#30e030"/>
<ellipse cx="770.30" cy="87.70" rx="1.0" ry="1.08" fill="#fff4dc" opacity="0.9"/>
<rect x="772.80" y="87.50" width="1.0" height="1.0" fill="#e4381c"/>
<ellipse cx="770.30" cy="90.10" rx="1.0" ry="1.08" fill="#fff4dc" opacity="0.9"/>
<rect x="772.80" y="89.90" width="1.0" height="1.0" fill="#e4381c"/>
<ellipse cx="770.30" cy="92.50" rx="1.0" ry="1.08" fill="#fff4dc" opacity="0.9"/>
<rect x="772.80" y="92.30" width="1.0" height="1.0" fill="#e4381c"/>
</g>
<line x1="996" y1="41.20" x2="998" y2="41.20" stroke="#8c8c8c" stroke-width="0.8"/>
<line x1="996" y1="58.51" x2="998" y2="58.51" stroke="#8c8c8c" stroke-width="0.8"/>
<line x1="996" y1="76.35" x2="998" y2="76.35" stroke="#8c8c8c" stroke-width="0.8"/>
<line x1="996" y1="94.19" x2="998" y2="94.19" stroke="#8c8c8c" stroke-width="0.8"/>
<line x1="996" y1="111.51" x2="998" y2="111.51" stroke="#8c8c8c" stroke-width="0.8"/>
<line x1="996" y1="129.34" x2="998" y2="129.34" stroke="#8c8c8c" stroke-width="0.8"/>
<line x1="996" y1="146.66" x2="998" y2="146.66" stroke="#8c8c8c" stroke-width="0.8"/>
<line x1="996" y1="164.50" x2="998" y2="164.50" stroke="#8c8c8c" stroke-width="0.8"/>
<line x1="996" y1="182.34" x2="998" y2="182.34" stroke="#8c8c8c" stroke-width="0.8"/>
<line x1="996" y1="199.65" x2="998" y2="199.65" stroke="#8c8c8c" stroke-width="0.8"/>
<line x1="996" y1="217.49" x2="998" y2="217.49" stroke="#8c8c8c" stroke-width="0.8"/>
<line x1="996" y1="234.80" x2="998" y2="234.80" stroke="#8c8c8c" stroke-width="0.8"/>
<line x1="2.20" y1="236.4" x2="2.20" y2="238.2" stroke="#8c8c8c" stroke-width="0.8"/>
<line x1="36.37" y1="236.4" x2="36.37" y2="238.2" stroke="#8c8c8c" stroke-width="0.8"/>
<line x1="70.53" y1="236.4" x2="70.53" y2="238.2" stroke="#8c8c8c" stroke-width="0.8"/>
<line x1="104.70" y1="236.4" x2="104.70" y2="238.2" stroke="#8c8c8c" stroke-width="0.8"/>
<line x1="138.86" y1="236.4" x2="138.86" y2="238.2" stroke="#8c8c8c" stroke-width="0.8"/>
<line x1="173.02" y1="236.4" x2="173.02" y2="238.2" stroke="#8c8c8c" stroke-width="0.8"/>
<line x1="207.19" y1="236.4" x2="207.19" y2="238.2" stroke="#8c8c8c" stroke-width="0.8"/>
<line x1="241.35" y1="236.4" x2="241.35" y2="238.2" stroke="#8c8c8c" stroke-width="0.8"/>
<line x1="275.52" y1="236.4" x2="275.52" y2="238.2" stroke="#8c8c8c" stroke-width="0.8"/>
<line x1="309.69" y1="236.4" x2="309.69" y2="238.2" stroke="#8c8c8c" stroke-width="0.8"/>
<line x1="343.85" y1="236.4" x2="343.85" y2="238.2" stroke="#8c8c8c" stroke-width="0.8"/>
<line x1="378.01" y1="236.4" x2="378.01" y2="238.2" stroke="#8c8c8c" stroke-width="0.8"/>
<line x1="412.18" y1="236.4" x2="412.18" y2="238.2" stroke="#8c8c8c" stroke-width="0.8"/>
<line x1="446.34" y1="236.4" x2="446.34" y2="238.2" stroke="#8c8c8c" stroke-width="0.8"/>
<line x1="480.51" y1="236.4" x2="480.51" y2="238.2" stroke="#8c8c8c" stroke-width="0.8"/>
<line x1="514.68" y1="236.4" x2="514.68" y2="238.2" stroke="#8c8c8c" stroke-width="0.8"/>
<line x1="548.84" y1="236.4" x2="548.84" y2="238.2" stroke="#8c8c8c" stroke-width="0.8"/>
<line x1="583.00" y1="236.4" x2="583.00" y2="238.2" stroke="#8c8c8c" stroke-width="0.8"/>
<line x1="617.17" y1="236.4" x2="617.17" y2="238.2" stroke="#8c8c8c" stroke-width="0.8"/>
<line x1="651.34" y1="236.4" x2="651.34" y2="238.2" stroke="#8c8c8c" stroke-width="0.8"/>
<line x1="685.50" y1="236.4" x2="685.50" y2="238.2" stroke="#8c8c8c" stroke-width="0.8"/>
<line x1="719.67" y1="236.4" x2="719.67" y2="238.2" stroke="#8c8c8c" stroke-width="0.8"/>
<line x1="753.83" y1="236.4" x2="753.83" y2="238.2" stroke="#8c8c8c" stroke-width="0.8"/>
<polygon points="793.5,31 799,31 796.2,34" fill="#8fa0b0"/>
</svg>
<div style="position:absolute;left:998.8px;top:38.2px;font-size:6.0px;line-height:6.0px;color:#dcdcdc;white-space:nowrap;transform:scaleX(0.81);transform-origin:0 50%;">85258.20</div>
<div style="position:absolute;left:998.8px;top:55.51417599999857px;font-size:6.0px;line-height:6.0px;color:#dcdcdc;white-space:nowrap;transform:scaleX(0.81);transform-origin:0 50%;">85152.60</div>
<div style="position:absolute;left:998.8px;top:73.35302399999904px;font-size:6.0px;line-height:6.0px;color:#dcdcdc;white-space:nowrap;transform:scaleX(0.81);transform-origin:0 50%;">85043.80</div>
<div style="position:absolute;left:998.8px;top:91.19187199999952px;font-size:6.0px;line-height:6.0px;color:#dcdcdc;white-space:nowrap;transform:scaleX(0.81);transform-origin:0 50%;">84935.00</div>
<div style="position:absolute;left:998.8px;top:108.50604800000048px;font-size:6.0px;line-height:6.0px;color:#dcdcdc;white-space:nowrap;transform:scaleX(0.81);transform-origin:0 50%;">84829.40</div>
<div style="position:absolute;left:998.8px;top:126.34489599999858px;font-size:6.0px;line-height:6.0px;color:#dcdcdc;white-space:nowrap;transform:scaleX(0.81);transform-origin:0 50%;">84720.60</div>
<div style="position:absolute;left:998.8px;top:143.65907199999953px;font-size:6.0px;line-height:6.0px;color:#dcdcdc;white-space:nowrap;transform:scaleX(0.81);transform-origin:0 50%;">84615.00</div>
<div style="position:absolute;left:998.8px;top:161.49792px;font-size:6.0px;line-height:6.0px;color:#dcdcdc;white-space:nowrap;transform:scaleX(0.81);transform-origin:0 50%;">84506.20</div>
<div style="position:absolute;left:998.8px;top:179.33676800000046px;font-size:6.0px;line-height:6.0px;color:#dcdcdc;white-space:nowrap;transform:scaleX(0.81);transform-origin:0 50%;">84397.40</div>
<div style="position:absolute;left:998.8px;top:196.65094399999901px;font-size:6.0px;line-height:6.0px;color:#dcdcdc;white-space:nowrap;transform:scaleX(0.81);transform-origin:0 50%;">84291.80</div>
<div style="position:absolute;left:998.8px;top:214.4897919999995px;font-size:6.0px;line-height:6.0px;color:#dcdcdc;white-space:nowrap;transform:scaleX(0.81);transform-origin:0 50%;">84183.00</div>
<div style="position:absolute;left:998.8px;top:231.80396800000045px;font-size:6.0px;line-height:6.0px;color:#dcdcdc;white-space:nowrap;transform:scaleX(0.81);transform-origin:0 50%;">84077.40</div>
<div style="position:absolute;left:997.8px;top:83.71204800000048px;width:24.2px;height:6.4px;background:#fff;"></div>
<div style="position:absolute;left:998.8px;top:83.91204800000048px;font-size:6.0px;line-height:6.0px;color:#000;white-space:nowrap;transform:scaleX(0.81);transform-origin:0 50%;">84979.40</div>
<div style="position:absolute;left:2.5px;top:238.2px;font-size:6.0px;line-height:6.0px;color:#dcdcdc;white-space:nowrap;transform:scaleX(0.834);transform-origin:0 50%;">20 Apr 2025</div>
<div style="position:absolute;left:36.665px;top:238.2px;font-size:6.0px;line-height:6.0px;color:#dcdcdc;white-space:nowrap;transform:scaleX(0.834);transform-origin:0 50%;">20 Apr 15:45</div>
<div style="position:absolute;left:70.83px;top:238.2px;font-size:6.0px;line-height:6.0px;color:#dcdcdc;white-space:nowrap;transform:scaleX(0.834);transform-origin:0 50%;">20 Apr 16:15</div>
<div style="position:absolute;left:104.995px;top:238.2px;font-size:6.0px;line-height:6.0px;color:#dcdcdc;white-space:nowrap;transform:scaleX(0.834);transform-origin:0 50%;">20 Apr 16:45</div>
<div style="position:absolute;left:139.16px;top:238.2px;font-size:6.0px;line-height:6.0px;color:#dcdcdc;white-space:nowrap;transform:scaleX(0.834);transform-origin:0 50%;">20 Apr 17:15</div>
<div style="position:absolute;left:173.325px;top:238.2px;font-size:6.0px;line-height:6.0px;color:#dcdcdc;white-space:nowrap;transform:scaleX(0.834);transform-origin:0 50%;">20 Apr 17:45</div>
<div style="position:absolute;left:207.49px;top:238.2px;font-size:6.0px;line-height:6.0px;color:#dcdcdc;white-space:nowrap;transform:scaleX(0.834);transform-origin:0 50%;">20 Apr 18:15</div>
<div style="position:absolute;left:241.655px;top:238.2px;font-size:6.0px;line-height:6.0px;color:#dcdcdc;white-space:nowrap;transform:scaleX(0.834);transform-origin:0 50%;">20 Apr 18:45</div>
<div style="position:absolute;left:275.82px;top:238.2px;font-size:6.0px;line-height:6.0px;color:#dcdcdc;white-space:nowrap;transform:scaleX(0.834);transform-origin:0 50%;">20 Apr 19:15</div>
<div style="position:absolute;left:309.985px;top:238.2px;font-size:6.0px;line-height:6.0px;color:#dcdcdc;white-space:nowrap;transform:scaleX(0.834);transform-origin:0 50%;">20 Apr 19:45</div>
<div style="position:absolute;left:344.15px;top:238.2px;font-size:6.0px;line-height:6.0px;color:#dcdcdc;white-space:nowrap;transform:scaleX(0.834);transform-origin:0 50%;">20 Apr 20:15</div>
<div style="position:absolute;left:378.315px;top:238.2px;font-size:6.0px;line-height:6.0px;color:#dcdcdc;white-space:nowrap;transform:scaleX(0.834);transform-origin:0 50%;">20 Apr 20:45</div>
<div style="position:absolute;left:412.48px;top:238.2px;font-size:6.0px;line-height:6.0px;color:#dcdcdc;white-space:nowrap;transform:scaleX(0.834);transform-origin:0 50%;">20 Apr 21:15</div>
<div style="position:absolute;left:446.645px;top:238.2px;font-size:6.0px;line-height:6.0px;color:#dcdcdc;white-space:nowrap;transform:scaleX(0.834);transform-origin:0 50%;">20 Apr 21:45</div>
<div style="position:absolute;left:480.81px;top:238.2px;font-size:6.0px;line-height:6.0px;color:#dcdcdc;white-space:nowrap;transform:scaleX(0.834);transform-origin:0 50%;">20 Apr 22:15</div>
<div style="position:absolute;left:514.975px;top:238.2px;font-size:6.0px;line-height:6.0px;color:#dcdcdc;white-space:nowrap;transform:scaleX(0.834);transform-origin:0 50%;">20 Apr 22:45</div>
<div style="position:absolute;left:549.14px;top:238.2px;font-size:6.0px;line-height:6.0px;color:#dcdcdc;white-space:nowrap;transform:scaleX(0.834);transform-origin:0 50%;">20 Apr 23:15</div>
<div style="position:absolute;left:583.305px;top:238.2px;font-size:6.0px;line-height:6.0px;color:#dcdcdc;white-space:nowrap;transform:scaleX(0.834);transform-origin:0 50%;">20 Apr 23:45</div>
<div style="position:absolute;left:617.47px;top:238.2px;font-size:6.0px;line-height:6.0px;color:#dcdcdc;white-space:nowrap;transform:scaleX(0.834);transform-origin:0 50%;">21 Apr 00:15</div>
<div style="position:absolute;left:651.635px;top:238.2px;font-size:6.0px;line-height:6.0px;color:#dcdcdc;white-space:nowrap;transform:scaleX(0.834);transform-origin:0 50%;">21 Apr 00:45</div>
<div style="position:absolute;left:685.8px;top:238.2px;font-size:6.0px;line-height:6.0px;color:#dcdcdc;white-space:nowrap;transform:scaleX(0.834);transform-origin:0 50%;">21 Apr 01:15</div>
<div style="position:absolute;left:719.965px;top:238.2px;font-size:6.0px;line-height:6.0px;color:#dcdcdc;white-space:nowrap;transform:scaleX(0.834);transform-origin:0 50%;">21 Apr 01:45</div>
<div style="position:absolute;left:754.13px;top:238.2px;font-size:6.0px;line-height:6.0px;color:#dcdcdc;white-space:nowrap;transform:scaleX(0.834);transform-origin:0 50%;">21 Apr 02:15</div>
<div style="position:absolute;left:10.5px;top:31.7px;font-size:6.0px;line-height:6.0px;color:#dcdcdc;white-space:nowrap;transform:scaleX(0.83);transform-origin:0 50%;">BTCUSDp,M15&nbsp;&nbsp;85047.20 85111.40 84944.20 84979.40</div>
<svg width="8" height="6" style="position:absolute;left:3.5px;top:32px"><polygon points="0.9,1.3 4.8,1.3 2.85,3.4" fill="#ddd"/></svg>
<div style="position:absolute;right:37.700000000000045px;top:32.0px;font-size:6.0px;line-height:6.0px;color:#dcdcdc;white-space:nowrap;text-align:right;transform:scaleX(0.8);transform-origin:100% 50%;">GTR MemberForex</div>
<svg width="8" height="8" style="position:absolute;left:986.5px;top:31px"><circle cx="3.6" cy="3.8" r="2.8" fill="none" stroke="#ccc" stroke-width="0.7"/><path d="M2.4 3.2 L3.6 4.6 L4.8 3.2" fill="none" stroke="#ccc" stroke-width="0.6"/></svg>
<div style="position:absolute;left:0px;top:247.3px;width:1024px;height:0.9px;background:#b4b4b4;"></div>
<div style="position:absolute;left:3px;top:248.5px;width:53.5px;height:10.2px;background:#fff;border:0.8px solid #6e6e6e;border-top:none;"></div>
<div style="position:absolute;left:10.2px;top:250.8px;font-size:6.6px;line-height:6.6px;color:#111;white-space:nowrap;transform:scaleX(0.87);transform-origin:0 50%;">BTCUSDp,M15</div>
<div style="position:absolute;left:62.5px;top:250.8px;font-size:6.6px;line-height:6.6px;color:#8a8a8a;white-space:nowrap;transform:scaleX(0.87);transform-origin:0 50%;">ETHUSDp,M15</div>
<div style="position:absolute;left:109.8px;top:250px;width:0.8px;height:7px;background:#aaa;"></div>
<div style="position:absolute;left:8.3px;top:261.2px;width:1003.7px;height:279.09999999999997px;background:#fff;"></div>
<div style="position:absolute;left:8.3px;top:261.2px;width:1015.7px;height:0.8px;background:#c0c0c0;"></div>
<div style="position:absolute;left:77.6px;top:262.0px;width:0.8px;height:11.899999999999988px;background:#e3e3e3;"></div>
<div style="position:absolute;left:196.2px;top:262.0px;width:0.8px;height:11.899999999999988px;background:#e3e3e3;"></div>
<div style="position:absolute;left:249.79999999999998px;top:262.0px;width:0.8px;height:11.899999999999988px;background:#e3e3e3;"></div>
<div style="position:absolute;left:291.90000000000003px;top:262.0px;width:0.8px;height:11.899999999999988px;background:#e3e3e3;"></div>
<div style="position:absolute;left:345.90000000000003px;top:262.0px;width:0.8px;height:11.899999999999988px;background:#e3e3e3;"></div>
<div style="position:absolute;left:400.3px;top:262.0px;width:0.8px;height:11.899999999999988px;background:#e3e3e3;"></div>
<div style="position:absolute;left:454.1px;top:262.0px;width:0.8px;height:11.899999999999988px;background:#e3e3e3;"></div>
<div style="position:absolute;left:508.20000000000005px;top:262.0px;width:0.8px;height:11.899999999999988px;background:#e3e3e3;"></div>
<div style="position:absolute;left:626.8000000000001px;top:262.0px;width:0.8px;height:11.899999999999988px;background:#e3e3e3;"></div>
<div style="position:absolute;left:680.4px;top:262.0px;width:0.8px;height:11.899999999999988px;background:#e3e3e3;"></div>
<div style="position:absolute;left:734.2px;top:262.0px;width:0.8px;height:11.899999999999988px;background:#e3e3e3;"></div>
<div style="position:absolute;left:788.0px;top:262.0px;width:0.8px;height:11.899999999999988px;background:#e3e3e3;"></div>
<div style="position:absolute;left:847.2px;top:262.0px;width:0.8px;height:11.899999999999988px;background:#e3e3e3;"></div>
<div style="position:absolute;left:8.3px;top:273.59999999999997px;width:1003.7px;height:0.8px;background:#e6e6e6;"></div>
<div style="position:absolute;left:12px;top:265.2px;font-size:6.7px;line-height:6.7px;color:#222;white-space:nowrap;transform:scaleX(0.97);transform-origin:0 50%;">Order</div>
<div style="position:absolute;right:829.9px;top:265.2px;font-size:6.7px;line-height:6.7px;color:#222;white-space:nowrap;text-align:right;transform:scaleX(0.97);transform-origin:100% 50%;">Time</div>
<div style="position:absolute;right:776.3px;top:265.2px;font-size:6.7px;line-height:6.7px;color:#222;white-space:nowrap;text-align:right;transform:scaleX(0.97);transform-origin:100% 50%;">Type</div>
<div style="position:absolute;right:734.2px;top:265.2px;font-size:6.7px;line-height:6.7px;color:#222;white-space:nowrap;text-align:right;transform:scaleX(0.97);transform-origin:100% 50%;">Size</div>
<div style="position:absolute;right:680.2px;top:265.2px;font-size:6.7px;line-height:6.7px;color:#222;white-space:nowrap;text-align:right;transform:scaleX(0.97);transform-origin:100% 50%;">Symbol</div>
<div style="position:absolute;right:625.8px;top:265.2px;font-size:6.7px;line-height:6.7px;color:#222;white-space:nowrap;text-align:right;transform:scaleX(0.97);transform-origin:100% 50%;">Price</div>
<div style="position:absolute;right:572.0px;top:265.2px;font-size:6.7px;line-height:6.7px;color:#222;white-space:nowrap;text-align:right;transform:scaleX(0.97);transform-origin:100% 50%;">S / L</div>
<div style="position:absolute;right:517.9px;top:265.2px;font-size:6.7px;line-height:6.7px;color:#222;white-space:nowrap;text-align:right;transform:scaleX(0.97);transform-origin:100% 50%;">T / P</div>
<div style="position:absolute;right:399.29999999999995px;top:265.2px;font-size:6.7px;line-height:6.7px;color:#222;white-space:nowrap;text-align:right;transform:scaleX(0.97);transform-origin:100% 50%;">Time</div>
<div style="position:absolute;right:345.70000000000005px;top:265.2px;font-size:6.7px;line-height:6.7px;color:#222;white-space:nowrap;text-align:right;transform:scaleX(0.97);transform-origin:100% 50%;">Price</div>
<div style="position:absolute;left:685.4px;top:265.2px;font-size:6.7px;line-height:6.7px;color:#222;white-space:nowrap;transform:scaleX(0.97);transform-origin:0 50%;">Commission</div>
<svg width="6" height="5" style="position:absolute;left:726.6px;top:266.2px"><path d="M0.8 1 L4.4 1 L2.6 3.6 Z" fill="none" stroke="#999" stroke-width="0.6"/></svg>
<div style="position:absolute;right:238.10000000000002px;top:265.2px;font-size:6.7px;line-height:6.7px;color:#222;white-space:nowrap;text-align:right;transform:scaleX(0.97);transform-origin:100% 50%;">Swap</div>
<div style="position:absolute;right:178.89999999999998px;top:265.2px;font-size:6.7px;line-height:6.7px;color:#222;white-space:nowrap;text-align:right;transform:scaleX(0.97);transform-origin:100% 50%;">Profit</div>
<div style="position:absolute;right:14.5px;top:265.2px;font-size:6.7px;line-height:6.7px;color:#222;white-space:nowrap;text-align:right;transform:scaleX(0.97);transform-origin:100% 50%;">Comment</div>
<div style="position:absolute;left:8.3px;top:273.9px;width:1003.7px;height:10.64px;background:#ffffff;"></div>
<div style="position:absolute;left:401.2px;top:274.9px;width:51.90000000000001px;height:8.84px;background:#ffa0a0;"></div>
<div style="position:absolute;right:829.2px;top:276.5px;font-size:7.0px;line-height:7.0px;color:#111;white-space:nowrap;text-align:right;transform:scaleX(0.8125);transform-origin:100% 50%;">2025.04.20 21:49:53</div>
<div style="position:absolute;right:775.6px;top:276.5px;font-size:7.0px;line-height:7.0px;color:#111;white-space:nowrap;text-align:right;transform:scaleX(0.93);transform-origin:100% 50%;">buy</div>
<div style="position:absolute;right:733.5px;top:276.5px;font-size:7.0px;line-height:7.0px;color:#111;white-space:nowrap;text-align:right;transform:scaleX(0.8125);transform-origin:100% 50%;">78.24</div>
<div style="position:absolute;right:679.5px;top:276.5px;font-size:7.0px;line-height:7.0px;color:#111;white-space:nowrap;text-align:right;transform:scaleX(0.93);transform-origin:100% 50%;">btcusdp</div>
<div style="position:absolute;right:625.1px;top:276.5px;font-size:7.0px;line-height:7.0px;color:#111;white-space:nowrap;text-align:right;transform:scaleX(0.8125);transform-origin:100% 50%;">84476.80</div>
<div style="position:absolute;right:571.3px;top:276.5px;font-size:7.0px;line-height:7.0px;color:#111;white-space:nowrap;text-align:right;transform:scaleX(0.8125);transform-origin:100% 50%;">84516.70</div>
<div style="position:absolute;right:517.2px;top:276.5px;font-size:7.0px;line-height:7.0px;color:#111;white-space:nowrap;text-align:right;transform:scaleX(0.8125);transform-origin:100% 50%;">85120.51</div>
<div style="position:absolute;right:398.5999999999999px;top:276.5px;font-size:7.0px;line-height:7.0px;color:#111;white-space:nowrap;text-align:right;transform:scaleX(0.8125);transform-origin:100% 50%;">2025.04.20 21:52:23</div>
<div style="position:absolute;right:345.0px;top:276.5px;font-size:7.0px;line-height:7.0px;color:#111;white-space:nowrap;text-align:right;transform:scaleX(0.8125);transform-origin:100% 50%;">84516.70</div>
<div style="position:absolute;right:291.19999999999993px;top:276.5px;font-size:7.0px;line-height:7.0px;color:#111;white-space:nowrap;text-align:right;transform:scaleX(0.8125);transform-origin:100% 50%;">-312.96</div>
<div style="position:absolute;right:237.39999999999998px;top:276.5px;font-size:7.0px;line-height:7.0px;color:#111;white-space:nowrap;text-align:right;transform:scaleX(0.8125);transform-origin:100% 50%;">0.00</div>
<div style="position:absolute;right:178.19999999999993px;top:276.5px;font-size:7.0px;line-height:7.0px;color:#111;white-space:nowrap;text-align:right;transform:scaleX(0.8125);transform-origin:100% 50%;">3 121.78</div>
<div style="position:absolute;right:13.799999999999955px;top:276.5px;font-size:7.0px;line-height:7.0px;color:#111;white-space:nowrap;text-align:right;transform:scaleX(0.93);transform-origin:100% 50%;">memberforex.com[sl]</div>
<div style="position:absolute;left:77.6px;top:273.9px;width:0.8px;height:10.64px;background:#dcdcdc;"></div>
<div style="position:absolute;left:196.2px;top:273.9px;width:0.8px;height:10.64px;background:#dcdcdc;"></div>
<div style="position:absolute;left:249.79999999999998px;top:273.9px;width:0.8px;height:10.64px;background:#dcdcdc;"></div>
<div style="position:absolute;left:291.90000000000003px;top:273.9px;width:0.8px;height:10.64px;background:#dcdcdc;"></div>
<div style="position:absolute;left:345.90000000000003px;top:273.9px;width:0.8px;height:10.64px;background:#dcdcdc;"></div>
<div style="position:absolute;left:400.3px;top:273.9px;width:0.8px;height:10.64px;background:#dcdcdc;"></div>
<div style="position:absolute;left:454.1px;top:273.9px;width:0.8px;height:10.64px;background:#dcdcdc;"></div>
<div style="position:absolute;left:508.20000000000005px;top:273.9px;width:0.8px;height:10.64px;background:#dcdcdc;"></div>
<div style="position:absolute;left:626.8000000000001px;top:273.9px;width:0.8px;height:10.64px;background:#dcdcdc;"></div>
<div style="position:absolute;left:680.4px;top:273.9px;width:0.8px;height:10.64px;background:#dcdcdc;"></div>
<div style="position:absolute;left:734.2px;top:273.9px;width:0.8px;height:10.64px;background:#dcdcdc;"></div>
<div style="position:absolute;left:788.0px;top:273.9px;width:0.8px;height:10.64px;background:#dcdcdc;"></div>
<div style="position:absolute;left:847.2px;top:273.9px;width:0.8px;height:10.64px;background:#dcdcdc;"></div>
<div style="position:absolute;left:8.3px;top:284.53999999999996px;width:1003.7px;height:10.64px;background:#0078d7;"></div>
<div style="position:absolute;left:401.2px;top:285.14px;width:52.500000000000014px;height:9.440000000000001px;background:#ffa0a0;border:0.8px solid #5a8ed0;"></div>
<div style="position:absolute;right:829.2px;top:287.14px;font-size:7.0px;line-height:7.0px;color:#fff;white-space:nowrap;text-align:right;transform:scaleX(0.8125);transform-origin:100% 50%;">2025.04.20 22:21:07</div>
<div style="position:absolute;right:775.6px;top:287.14px;font-size:7.0px;line-height:7.0px;color:#fff;white-space:nowrap;text-align:right;transform:scaleX(0.93);transform-origin:100% 50%;">sell</div>
<div style="position:absolute;right:733.5px;top:287.14px;font-size:7.0px;line-height:7.0px;color:#fff;white-space:nowrap;text-align:right;transform:scaleX(0.8125);transform-origin:100% 50%;">78.52</div>
<div style="position:absolute;right:679.5px;top:287.14px;font-size:7.0px;line-height:7.0px;color:#fff;white-space:nowrap;text-align:right;transform:scaleX(0.93);transform-origin:100% 50%;">btcusdp</div>
<div style="position:absolute;right:625.1px;top:287.14px;font-size:7.0px;line-height:7.0px;color:#fff;white-space:nowrap;text-align:right;transform:scaleX(0.8125);transform-origin:100% 50%;">84557.50</div>
<div style="position:absolute;right:571.3px;top:287.14px;font-size:7.0px;line-height:7.0px;color:#111;white-space:nowrap;text-align:right;transform:scaleX(0.8125);transform-origin:100% 50%;">84497.00</div>
<div style="position:absolute;right:517.2px;top:287.14px;font-size:7.0px;line-height:7.0px;color:#fff;white-space:nowrap;text-align:right;transform:scaleX(0.8125);transform-origin:100% 50%;">83893.19</div>
<div style="position:absolute;right:398.5999999999999px;top:287.14px;font-size:7.0px;line-height:7.0px;color:#fff;white-space:nowrap;text-align:right;transform:scaleX(0.8125);transform-origin:100% 50%;">2025.04.20 22:23:04</div>
<div style="position:absolute;right:345.0px;top:287.14px;font-size:7.0px;line-height:7.0px;color:#fff;white-space:nowrap;text-align:right;transform:scaleX(0.8125);transform-origin:100% 50%;">84497.00</div>
<div style="position:absolute;right:291.19999999999993px;top:287.14px;font-size:7.0px;line-height:7.0px;color:#fff;white-space:nowrap;text-align:right;transform:scaleX(0.8125);transform-origin:100% 50%;">-314.08</div>
<div style="position:absolute;right:237.39999999999998px;top:287.14px;font-size:7.0px;line-height:7.0px;color:#fff;white-space:nowrap;text-align:right;transform:scaleX(0.8125);transform-origin:100% 50%;">0.00</div>
<div style="position:absolute;right:178.19999999999993px;top:287.14px;font-size:7.0px;line-height:7.0px;color:#fff;white-space:nowrap;text-align:right;transform:scaleX(0.8125);transform-origin:100% 50%;">4 750.46</div>
<div style="position:absolute;right:13.799999999999955px;top:287.14px;font-size:7.0px;line-height:7.0px;color:#fff;white-space:nowrap;text-align:right;transform:scaleX(0.93);transform-origin:100% 50%;">memberforex.com[sl]</div>
<div style="position:absolute;left:77.6px;top:284.53999999999996px;width:0.8px;height:10.64px;background:#3a8fd9;"></div>
<div style="position:absolute;left:196.2px;top:284.53999999999996px;width:0.8px;height:10.64px;background:#3a8fd9;"></div>
<div style="position:absolute;left:249.79999999999998px;top:284.53999999999996px;width:0.8px;height:10.64px;background:#3a8fd9;"></div>
<div style="position:absolute;left:291.90000000000003px;top:284.53999999999996px;width:0.8px;height:10.64px;background:#3a8fd9;"></div>
<div style="position:absolute;left:345.90000000000003px;top:284.53999999999996px;width:0.8px;height:10.64px;background:#3a8fd9;"></div>
<div style="position:absolute;left:400.3px;top:284.53999999999996px;width:0.8px;height:10.64px;background:#3a8fd9;"></div>
<div style="position:absolute;left:454.1px;top:284.53999999999996px;width:0.8px;height:10.64px;background:#3a8fd9;"></div>
<div style="position:absolute;left:508.20000000000005px;top:284.53999999999996px;width:0.8px;height:10.64px;background:#3a8fd9;"></div>
<div style="position:absolute;left:626.8000000000001px;top:284.53999999999996px;width:0.8px;height:10.64px;background:#3a8fd9;"></div>
<div style="position:absolute;left:680.4px;top:284.53999999999996px;width:0.8px;height:10.64px;background:#3a8fd9;"></div>
<div style="position:absolute;left:734.2px;top:284.53999999999996px;width:0.8px;height:10.64px;background:#3a8fd9;"></div>
<div style="position:absolute;left:788.0px;top:284.53999999999996px;width:0.8px;height:10.64px;background:#3a8fd9;"></div>
<div style="position:absolute;left:847.2px;top:284.53999999999996px;width:0.8px;height:10.64px;background:#3a8fd9;"></div>
<div style="position:absolute;left:8.3px;top:295.17999999999995px;width:1003.7px;height:10.64px;background:#ffffff;"></div>
<div style="position:absolute;left:401.2px;top:296.17999999999995px;width:51.90000000000001px;height:8.84px;background:#ffa0a0;"></div>
<div style="position:absolute;right:829.2px;top:297.78px;font-size:7.0px;line-height:7.0px;color:#111;white-space:nowrap;text-align:right;transform:scaleX(0.8125);transform-origin:100% 50%;">2025.04.20 22:51:22</div>
<div style="position:absolute;right:775.6px;top:297.78px;font-size:7.0px;line-height:7.0px;color:#111;white-space:nowrap;text-align:right;transform:scaleX(0.93);transform-origin:100% 50%;">sell</div>
<div style="position:absolute;right:733.5px;top:297.78px;font-size:7.0px;line-height:7.0px;color:#111;white-space:nowrap;text-align:right;transform:scaleX(0.8125);transform-origin:100% 50%;">78.90</div>
<div style="position:absolute;right:679.5px;top:297.78px;font-size:7.0px;line-height:7.0px;color:#111;white-space:nowrap;text-align:right;transform:scaleX(0.93);transform-origin:100% 50%;">btcusdp</div>
<div style="position:absolute;right:625.1px;top:297.78px;font-size:7.0px;line-height:7.0px;color:#111;white-space:nowrap;text-align:right;transform:scaleX(0.8125);transform-origin:100% 50%;">84612.90</div>
<div style="position:absolute;right:571.3px;top:297.78px;font-size:7.0px;line-height:7.0px;color:#111;white-space:nowrap;text-align:right;transform:scaleX(0.8125);transform-origin:100% 50%;">84602.60</div>
<div style="position:absolute;right:517.2px;top:297.78px;font-size:7.0px;line-height:7.0px;color:#111;white-space:nowrap;text-align:right;transform:scaleX(0.8125);transform-origin:100% 50%;">83998.79</div>
<div style="position:absolute;right:398.5999999999999px;top:297.78px;font-size:7.0px;line-height:7.0px;color:#111;white-space:nowrap;text-align:right;transform:scaleX(0.8125);transform-origin:100% 50%;">2025.04.20 22:51:42</div>
<div style="position:absolute;right:345.0px;top:297.78px;font-size:7.0px;line-height:7.0px;color:#111;white-space:nowrap;text-align:right;transform:scaleX(0.8125);transform-origin:100% 50%;">84602.60</div>
<div style="position:absolute;right:291.19999999999993px;top:297.78px;font-size:7.0px;line-height:7.0px;color:#111;white-space:nowrap;text-align:right;transform:scaleX(0.8125);transform-origin:100% 50%;">-315.60</div>
<div style="position:absolute;right:237.39999999999998px;top:297.78px;font-size:7.0px;line-height:7.0px;color:#111;white-space:nowrap;text-align:right;transform:scaleX(0.8125);transform-origin:100% 50%;">0.00</div>
<div style="position:absolute;right:178.19999999999993px;top:297.78px;font-size:7.0px;line-height:7.0px;color:#111;white-space:nowrap;text-align:right;transform:scaleX(0.8125);transform-origin:100% 50%;">812.67</div>
<div style="position:absolute;right:13.799999999999955px;top:297.78px;font-size:7.0px;line-height:7.0px;color:#111;white-space:nowrap;text-align:right;transform:scaleX(0.93);transform-origin:100% 50%;">memberforex.com[sl]</div>
<div style="position:absolute;left:77.6px;top:295.17999999999995px;width:0.8px;height:10.64px;background:#dcdcdc;"></div>
<div style="position:absolute;left:196.2px;top:295.17999999999995px;width:0.8px;height:10.64px;background:#dcdcdc;"></div>
<div style="position:absolute;left:249.79999999999998px;top:295.17999999999995px;width:0.8px;height:10.64px;background:#dcdcdc;"></div>
<div style="position:absolute;left:291.90000000000003px;top:295.17999999999995px;width:0.8px;height:10.64px;background:#dcdcdc;"></div>
<div style="position:absolute;left:345.90000000000003px;top:295.17999999999995px;width:0.8px;height:10.64px;background:#dcdcdc;"></div>
<div style="position:absolute;left:400.3px;top:295.17999999999995px;width:0.8px;height:10.64px;background:#dcdcdc;"></div>
<div style="position:absolute;left:454.1px;top:295.17999999999995px;width:0.8px;height:10.64px;background:#dcdcdc;"></div>
<div style="position:absolute;left:508.20000000000005px;top:295.17999999999995px;width:0.8px;height:10.64px;background:#dcdcdc;"></div>
<div style="position:absolute;left:626.8000000000001px;top:295.17999999999995px;width:0.8px;height:10.64px;background:#dcdcdc;"></div>
<div style="position:absolute;left:680.4px;top:295.17999999999995px;width:0.8px;height:10.64px;background:#dcdcdc;"></div>
<div style="position:absolute;left:734.2px;top:295.17999999999995px;width:0.8px;height:10.64px;background:#dcdcdc;"></div>
<div style="position:absolute;left:788.0px;top:295.17999999999995px;width:0.8px;height:10.64px;background:#dcdcdc;"></div>
<div style="position:absolute;left:847.2px;top:295.17999999999995px;width:0.8px;height:10.64px;background:#dcdcdc;"></div>
<div style="position:absolute;left:8.3px;top:305.82px;width:1003.7px;height:10.64px;background:#e9e9e9;"></div>
<div style="position:absolute;left:401.2px;top:306.82px;width:51.90000000000001px;height:8.84px;background:#ffa0a0;"></div>
<div style="position:absolute;right:829.2px;top:308.42px;font-size:7.0px;line-height:7.0px;color:#111;white-space:nowrap;text-align:right;transform:scaleX(0.8125);transform-origin:100% 50%;">2025.04.20 22:54:35</div>
<div style="position:absolute;right:775.6px;top:308.42px;font-size:7.0px;line-height:7.0px;color:#111;white-space:nowrap;text-align:right;transform:scaleX(0.93);transform-origin:100% 50%;">sell</div>
<div style="position:absolute;right:733.5px;top:308.42px;font-size:7.0px;line-height:7.0px;color:#111;white-space:nowrap;text-align:right;transform:scaleX(0.8125);transform-origin:100% 50%;">78.95</div>
<div style="position:absolute;right:679.5px;top:308.42px;font-size:7.0px;line-height:7.0px;color:#111;white-space:nowrap;text-align:right;transform:scaleX(0.93);transform-origin:100% 50%;">btcusdp</div>
<div style="position:absolute;right:625.1px;top:308.42px;font-size:7.0px;line-height:7.0px;color:#111;white-space:nowrap;text-align:right;transform:scaleX(0.8125);transform-origin:100% 50%;">84621.40</div>
<div style="position:absolute;right:571.3px;top:308.42px;font-size:7.0px;line-height:7.0px;color:#111;white-space:nowrap;text-align:right;transform:scaleX(0.8125);transform-origin:100% 50%;">84611.80</div>
<div style="position:absolute;right:517.2px;top:308.42px;font-size:7.0px;line-height:7.0px;color:#111;white-space:nowrap;text-align:right;transform:scaleX(0.8125);transform-origin:100% 50%;">84007.99</div>
<div style="position:absolute;right:398.5999999999999px;top:308.42px;font-size:7.0px;line-height:7.0px;color:#111;white-space:nowrap;text-align:right;transform:scaleX(0.8125);transform-origin:100% 50%;">2025.04.20 22:54:43</div>
<div style="position:absolute;right:345.0px;top:308.42px;font-size:7.0px;line-height:7.0px;color:#111;white-space:nowrap;text-align:right;transform:scaleX(0.8125);transform-origin:100% 50%;">84611.80</div>
<div style="position:absolute;right:291.19999999999993px;top:308.42px;font-size:7.0px;line-height:7.0px;color:#111;white-space:nowrap;text-align:right;transform:scaleX(0.8125);transform-origin:100% 50%;">-315.80</div>
<div style="position:absolute;right:237.39999999999998px;top:308.42px;font-size:7.0px;line-height:7.0px;color:#111;white-space:nowrap;text-align:right;transform:scaleX(0.8125);transform-origin:100% 50%;">0.00</div>
<div style="position:absolute;right:178.19999999999993px;top:308.42px;font-size:7.0px;line-height:7.0px;color:#111;white-space:nowrap;text-align:right;transform:scaleX(0.8125);transform-origin:100% 50%;">757.92</div>
<div style="position:absolute;right:13.799999999999955px;top:308.42px;font-size:7.0px;line-height:7.0px;color:#111;white-space:nowrap;text-align:right;transform:scaleX(0.93);transform-origin:100% 50%;">memberforex.com[sl]</div>
<div style="position:absolute;left:77.6px;top:305.82px;width:0.8px;height:10.64px;background:#dcdcdc;"></div>
<div style="position:absolute;left:196.2px;top:305.82px;width:0.8px;height:10.64px;background:#dcdcdc;"></div>
<div style="position:absolute;left:249.79999999999998px;top:305.82px;width:0.8px;height:10.64px;background:#dcdcdc;"></div>
<div style="position:absolute;left:291.90000000000003px;top:305.82px;width:0.8px;height:10.64px;background:#dcdcdc;"></div>
<div style="position:absolute;left:345.90000000000003px;top:305.82px;width:0.8px;height:10.64px;background:#dcdcdc;"></div>
<div style="position:absolute;left:400.3px;top:305.82px;width:0.8px;height:10.64px;background:#dcdcdc;"></div>
<div style="position:absolute;left:454.1px;top:305.82px;width:0.8px;height:10.64px;background:#dcdcdc;"></div>
<div style="position:absolute;left:508.20000000000005px;top:305.82px;width:0.8px;height:10.64px;background:#dcdcdc;"></div>
<div style="position:absolute;left:626.8000000000001px;top:305.82px;width:0.8px;height:10.64px;background:#dcdcdc;"></div>
<div style="position:absolute;left:680.4px;top:305.82px;width:0.8px;height:10.64px;background:#dcdcdc;"></div>
<div style="position:absolute;left:734.2px;top:305.82px;width:0.8px;height:10.64px;background:#dcdcdc;"></div>
<div style="position:absolute;left:788.0px;top:305.82px;width:0.8px;height:10.64px;background:#dcdcdc;"></div>
<div style="position:absolute;left:847.2px;top:305.82px;width:0.8px;height:10.64px;background:#dcdcdc;"></div>
<div style="position:absolute;left:8.3px;top:316.46px;width:1003.7px;height:10.64px;background:#ffffff;"></div>
<div style="position:absolute;left:401.2px;top:317.46px;width:51.90000000000001px;height:8.84px;background:#ffa0a0;"></div>
<div style="position:absolute;right:829.2px;top:319.06px;font-size:7.0px;line-height:7.0px;color:#111;white-space:nowrap;text-align:right;transform:scaleX(0.8125);transform-origin:100% 50%;">2025.04.20 22:50:10</div>
<div style="position:absolute;right:775.6px;top:319.06px;font-size:7.0px;line-height:7.0px;color:#111;white-space:nowrap;text-align:right;transform:scaleX(0.93);transform-origin:100% 50%;">sell</div>
<div style="position:absolute;right:733.5px;top:319.06px;font-size:7.0px;line-height:7.0px;color:#111;white-space:nowrap;text-align:right;transform:scaleX(0.8125);transform-origin:100% 50%;">78.96</div>
<div style="position:absolute;right:679.5px;top:319.06px;font-size:7.0px;line-height:7.0px;color:#111;white-space:nowrap;text-align:right;transform:scaleX(0.93);transform-origin:100% 50%;">btcusdp</div>
<div style="position:absolute;right:625.1px;top:319.06px;font-size:7.0px;line-height:7.0px;color:#111;white-space:nowrap;text-align:right;transform:scaleX(0.8125);transform-origin:100% 50%;">84590.40</div>
<div style="position:absolute;right:571.3px;top:319.06px;font-size:7.0px;line-height:7.0px;color:#111;white-space:nowrap;text-align:right;transform:scaleX(0.8125);transform-origin:100% 50%;">84593.20</div>
<div style="position:absolute;right:517.2px;top:319.06px;font-size:7.0px;line-height:7.0px;color:#111;white-space:nowrap;text-align:right;transform:scaleX(0.8125);transform-origin:100% 50%;">83989.39</div>
<div style="position:absolute;right:398.5999999999999px;top:319.06px;font-size:7.0px;line-height:7.0px;color:#111;white-space:nowrap;text-align:right;transform:scaleX(0.8125);transform-origin:100% 50%;">2025.04.20 22:50:25</div>
<div style="position:absolute;right:345.0px;top:319.06px;font-size:7.0px;line-height:7.0px;color:#111;white-space:nowrap;text-align:right;transform:scaleX(0.8125);transform-origin:100% 50%;">84593.20</div>
<div style="position:absolute;right:291.19999999999993px;top:319.06px;font-size:7.0px;line-height:7.0px;color:#111;white-space:nowrap;text-align:right;transform:scaleX(0.8125);transform-origin:100% 50%;">-315.84</div>
<div style="position:absolute;right:237.39999999999998px;top:319.06px;font-size:7.0px;line-height:7.0px;color:#111;white-space:nowrap;text-align:right;transform:scaleX(0.8125);transform-origin:100% 50%;">0.00</div>
<div style="position:absolute;right:178.19999999999993px;top:319.06px;font-size:7.0px;line-height:7.0px;color:#111;white-space:nowrap;text-align:right;transform:scaleX(0.8125);transform-origin:100% 50%;">-221.09</div>
<div style="position:absolute;right:13.799999999999955px;top:319.06px;font-size:7.0px;line-height:7.0px;color:#111;white-space:nowrap;text-align:right;transform:scaleX(0.93);transform-origin:100% 50%;">memberforex.com[sl]</div>
<div style="position:absolute;left:77.6px;top:316.46px;width:0.8px;height:10.64px;background:#dcdcdc;"></div>
<div style="position:absolute;left:196.2px;top:316.46px;width:0.8px;height:10.64px;background:#dcdcdc;"></div>
<div style="position:absolute;left:249.79999999999998px;top:316.46px;width:0.8px;height:10.64px;background:#dcdcdc;"></div>
<div style="position:absolute;left:291.90000000000003px;top:316.46px;width:0.8px;height:10.64px;background:#dcdcdc;"></div>
<div style="position:absolute;left:345.90000000000003px;top:316.46px;width:0.8px;height:10.64px;background:#dcdcdc;"></div>
<div style="position:absolute;left:400.3px;top:316.46px;width:0.8px;height:10.64px;background:#dcdcdc;"></div>
<div style="position:absolute;left:454.1px;top:316.46px;width:0.8px;height:10.64px;background:#dcdcdc;"></div>
<div style="position:absolute;left:508.20000000000005px;top:316.46px;width:0.8px;height:10.64px;background:#dcdcdc;"></div>
<div style="position:absolute;left:626.8000000000001px;top:316.46px;width:0.8px;height:10.64px;background:#dcdcdc;"></div>
<div style="position:absolute;left:680.4px;top:316.46px;width:0.8px;height:10.64px;background:#dcdcdc;"></div>
<div style="position:absolute;left:734.2px;top:316.46px;width:0.8px;height:10.64px;background:#dcdcdc;"></div>
<div style="position:absolute;left:788.0px;top:316.46px;width:0.8px;height:10.64px;background:#dcdcdc;"></div>
<div style="position:absolute;left:847.2px;top:316.46px;width:0.8px;height:10.64px;background:#dcdcdc;"></div>
<div style="position:absolute;left:8.3px;top:327.09999999999997px;width:1003.7px;height:10.64px;background:#e9e9e9;"></div>
<div style="position:absolute;left:401.2px;top:328.09999999999997px;width:51.90000000000001px;height:8.84px;background:#ffa0a0;"></div>
<div style="position:absolute;right:829.2px;top:329.7px;font-size:7.0px;line-height:7.0px;color:#111;white-space:nowrap;text-align:right;transform:scaleX(0.8125);transform-origin:100% 50%;">2025.04.20 22:54:57</div>
<div style="position:absolute;right:775.6px;top:329.7px;font-size:7.0px;line-height:7.0px;color:#111;white-space:nowrap;text-align:right;transform:scaleX(0.93);transform-origin:100% 50%;">sell</div>
<div style="position:absolute;right:733.5px;top:329.7px;font-size:7.0px;line-height:7.0px;color:#111;white-space:nowrap;text-align:right;transform:scaleX(0.8125);transform-origin:100% 50%;">78.99</div>
<div style="position:absolute;right:679.5px;top:329.7px;font-size:7.0px;line-height:7.0px;color:#111;white-space:nowrap;text-align:right;transform:scaleX(0.93);transform-origin:100% 50%;">btcusdp</div>
<div style="position:absolute;right:625.1px;top:329.7px;font-size:7.0px;line-height:7.0px;color:#111;white-space:nowrap;text-align:right;transform:scaleX(0.8125);transform-origin:100% 50%;">84612.50</div>
<div style="position:absolute;right:571.3px;top:329.7px;font-size:7.0px;line-height:7.0px;color:#111;white-space:nowrap;text-align:right;transform:scaleX(0.8125);transform-origin:100% 50%;">84601.60</div>
<div style="position:absolute;right:517.2px;top:329.7px;font-size:7.0px;line-height:7.0px;color:#111;white-space:nowrap;text-align:right;transform:scaleX(0.8125);transform-origin:100% 50%;">83997.79</div>
<div style="position:absolute;right:398.5999999999999px;top:329.7px;font-size:7.0px;line-height:7.0px;color:#111;white-space:nowrap;text-align:right;transform:scaleX(0.8125);transform-origin:100% 50%;">2025.04.20 22:56:24</div>
<div style="position:absolute;right:345.0px;top:329.7px;font-size:7.0px;line-height:7.0px;color:#111;white-space:nowrap;text-align:right;transform:scaleX(0.8125);transform-origin:100% 50%;">84601.60</div>
<div style="position:absolute;right:291.19999999999993px;top:329.7px;font-size:7.0px;line-height:7.0px;color:#111;white-space:nowrap;text-align:right;transform:scaleX(0.8125);transform-origin:100% 50%;">-315.96</div>
<div style="position:absolute;right:237.39999999999998px;top:329.7px;font-size:7.0px;line-height:7.0px;color:#111;white-space:nowrap;text-align:right;transform:scaleX(0.8125);transform-origin:100% 50%;">0.00</div>
<div style="position:absolute;right:178.19999999999993px;top:329.7px;font-size:7.0px;line-height:7.0px;color:#111;white-space:nowrap;text-align:right;transform:scaleX(0.8125);transform-origin:100% 50%;">860.99</div>
<div style="position:absolute;right:13.799999999999955px;top:329.7px;font-size:7.0px;line-height:7.0px;color:#111;white-space:nowrap;text-align:right;transform:scaleX(0.93);transform-origin:100% 50%;">memberforex.com[sl]</div>
<div style="position:absolute;left:77.6px;top:327.09999999999997px;width:0.8px;height:10.64px;background:#dcdcdc;"></div>
<div style="position:absolute;left:196.2px;top:327.09999999999997px;width:0.8px;height:10.64px;background:#dcdcdc;"></div>
<div style="position:absolute;left:249.79999999999998px;top:327.09999999999997px;width:0.8px;height:10.64px;background:#dcdcdc;"></div>
<div style="position:absolute;left:291.90000000000003px;top:327.09999999999997px;width:0.8px;height:10.64px;background:#dcdcdc;"></div>
<div style="position:absolute;left:345.90000000000003px;top:327.09999999999997px;width:0.8px;height:10.64px;background:#dcdcdc;"></div>
<div style="position:absolute;left:400.3px;top:327.09999999999997px;width:0.8px;height:10.64px;background:#dcdcdc;"></div>
<div style="position:absolute;left:454.1px;top:327.09999999999997px;width:0.8px;height:10.64px;background:#dcdcdc;"></div>
<div style="position:absolute;left:508.20000000000005px;top:327.09999999999997px;width:0.8px;height:10.64px;background:#dcdcdc;"></div>
<div style="position:absolute;left:626.8000000000001px;top:327.09999999999997px;width:0.8px;height:10.64px;background:#dcdcdc;"></div>
<div style="position:absolute;left:680.4px;top:327.09999999999997px;width:0.8px;height:10.64px;background:#dcdcdc;"></div>
<div style="position:absolute;left:734.2px;top:327.09999999999997px;width:0.8px;height:10.64px;background:#dcdcdc;"></div>
<div style="position:absolute;left:788.0px;top:327.09999999999997px;width:0.8px;height:10.64px;background:#dcdcdc;"></div>
<div style="position:absolute;left:847.2px;top:327.09999999999997px;width:0.8px;height:10.64px;background:#dcdcdc;"></div>
<div style="position:absolute;left:8.3px;top:337.74px;width:1003.7px;height:10.64px;background:#ffffff;"></div>
<div style="position:absolute;left:401.2px;top:338.74px;width:51.90000000000001px;height:8.84px;background:#ffa0a0;"></div>
<div style="position:absolute;right:829.2px;top:340.34000000000003px;font-size:7.0px;line-height:7.0px;color:#111;white-space:nowrap;text-align:right;transform:scaleX(0.8125);transform-origin:100% 50%;">2025.04.20 22:59:43</div>
<div style="position:absolute;right:775.6px;top:340.34000000000003px;font-size:7.0px;line-height:7.0px;color:#111;white-space:nowrap;text-align:right;transform:scaleX(0.93);transform-origin:100% 50%;">sell</div>
<div style="position:absolute;right:733.5px;top:340.34000000000003px;font-size:7.0px;line-height:7.0px;color:#111;white-space:nowrap;text-align:right;transform:scaleX(0.8125);transform-origin:100% 50%;">79.05</div>
<div style="position:absolute;right:679.5px;top:340.34000000000003px;font-size:7.0px;line-height:7.0px;color:#111;white-space:nowrap;text-align:right;transform:scaleX(0.93);transform-origin:100% 50%;">btcusdp</div>
<div style="position:absolute;right:625.1px;top:340.34000000000003px;font-size:7.0px;line-height:7.0px;color:#111;white-space:nowrap;text-align:right;transform:scaleX(0.8125);transform-origin:100% 50%;">84612.20</div>
<div style="position:absolute;right:571.3px;top:340.34000000000003px;font-size:7.0px;line-height:7.0px;color:#111;white-space:nowrap;text-align:right;transform:scaleX(0.8125);transform-origin:100% 50%;">84606.20</div>
<div style="position:absolute;right:517.2px;top:340.34000000000003px;font-size:7.0px;line-height:7.0px;color:#111;white-space:nowrap;text-align:right;transform:scaleX(0.8125);transform-origin:100% 50%;">84002.39</div>
<div style="position:absolute;right:398.5999999999999px;top:340.34000000000003px;font-size:7.0px;line-height:7.0px;color:#111;white-space:nowrap;text-align:right;transform:scaleX(0.8125);transform-origin:100% 50%;">2025.04.20 22:59:57</div>
<div style="position:absolute;right:345.0px;top:340.34000000000003px;font-size:7.0px;line-height:7.0px;color:#111;white-space:nowrap;text-align:right;transform:scaleX(0.8125);transform-origin:100% 50%;">84606.20</div>
<div style="position:absolute;right:291.19999999999993px;top:340.34000000000003px;font-size:7.0px;line-height:7.0px;color:#111;white-space:nowrap;text-align:right;transform:scaleX(0.8125);transform-origin:100% 50%;">-316.20</div>
<div style="position:absolute;right:237.39999999999998px;top:340.34000000000003px;font-size:7.0px;line-height:7.0px;color:#111;white-space:nowrap;text-align:right;transform:scaleX(0.8125);transform-origin:100% 50%;">0.00</div>
<div style="position:absolute;right:178.19999999999993px;top:340.34000000000003px;font-size:7.0px;line-height:7.0px;color:#111;white-space:nowrap;text-align:right;transform:scaleX(0.8125);transform-origin:100% 50%;">474.30</div>
<div style="position:absolute;right:13.799999999999955px;top:340.34000000000003px;font-size:7.0px;line-height:7.0px;color:#111;white-space:nowrap;text-align:right;transform:scaleX(0.93);transform-origin:100% 50%;">memberforex.com[sl]</div>
<div style="position:absolute;left:77.6px;top:337.74px;width:0.8px;height:10.64px;background:#dcdcdc;"></div>
<div style="position:absolute;left:196.2px;top:337.74px;width:0.8px;height:10.64px;background:#dcdcdc;"></div>
<div style="position:absolute;left:249.79999999999998px;top:337.74px;width:0.8px;height:10.64px;background:#dcdcdc;"></div>
<div style="position:absolute;left:291.90000000000003px;top:337.74px;width:0.8px;height:10.64px;background:#dcdcdc;"></div>
<div style="position:absolute;left:345.90000000000003px;top:337.74px;width:0.8px;height:10.64px;background:#dcdcdc;"></div>
<div style="position:absolute;left:400.3px;top:337.74px;width:0.8px;height:10.64px;background:#dcdcdc;"></div>
<div style="position:absolute;left:454.1px;top:337.74px;width:0.8px;height:10.64px;background:#dcdcdc;"></div>
<div style="position:absolute;left:508.20000000000005px;top:337.74px;width:0.8px;height:10.64px;background:#dcdcdc;"></div>
<div style="position:absolute;left:626.8000000000001px;top:337.74px;width:0.8px;height:10.64px;background:#dcdcdc;"></div>
<div style="position:absolute;left:680.4px;top:337.74px;width:0.8px;height:10.64px;background:#dcdcdc;"></div>
<div style="position:absolute;left:734.2px;top:337.74px;width:0.8px;height:10.64px;background:#dcdcdc;"></div>
<div style="position:absolute;left:788.0px;top:337.74px;width:0.8px;height:10.64px;background:#dcdcdc;"></div>
<div style="position:absolute;left:847.2px;top:337.74px;width:0.8px;height:10.64px;background:#dcdcdc;"></div>
<div style="position:absolute;left:8.3px;top:348.38px;width:1003.7px;height:10.64px;background:#e9e9e9;"></div>
<div style="position:absolute;left:401.2px;top:349.38px;width:51.90000000000001px;height:8.84px;background:#ffa0a0;"></div>
<div style="position:absolute;right:829.2px;top:350.98px;font-size:7.0px;line-height:7.0px;color:#111;white-space:nowrap;text-align:right;transform:scaleX(0.8125);transform-origin:100% 50%;">2025.04.20 22:57:46</div>
<div style="position:absolute;right:775.6px;top:350.98px;font-size:7.0px;line-height:7.0px;color:#111;white-space:nowrap;text-align:right;transform:scaleX(0.93);transform-origin:100% 50%;">sell</div>
<div style="position:absolute;right:733.5px;top:350.98px;font-size:7.0px;line-height:7.0px;color:#111;white-space:nowrap;text-align:right;transform:scaleX(0.8125);transform-origin:100% 50%;">79.05</div>
<div style="position:absolute;right:679.5px;top:350.98px;font-size:7.0px;line-height:7.0px;color:#111;white-space:nowrap;text-align:right;transform:scaleX(0.93);transform-origin:100% 50%;">btcusdp</div>
<div style="position:absolute;right:625.1px;top:350.98px;font-size:7.0px;line-height:7.0px;color:#111;white-space:nowrap;text-align:right;transform:scaleX(0.8125);transform-origin:100% 50%;">84612.50</div>
<div style="position:absolute;right:571.3px;top:350.98px;font-size:7.0px;line-height:7.0px;color:#111;white-space:nowrap;text-align:right;transform:scaleX(0.8125);transform-origin:100% 50%;">84608.70</div>
<div style="position:absolute;right:517.2px;top:350.98px;font-size:7.0px;line-height:7.0px;color:#111;white-space:nowrap;text-align:right;transform:scaleX(0.8125);transform-origin:100% 50%;">84004.89</div>
<div style="position:absolute;right:398.5999999999999px;top:350.98px;font-size:7.0px;line-height:7.0px;color:#111;white-space:nowrap;text-align:right;transform:scaleX(0.8125);transform-origin:100% 50%;">2025.04.20 22:58:14</div>
<div style="position:absolute;right:345.0px;top:350.98px;font-size:7.0px;line-height:7.0px;color:#111;white-space:nowrap;text-align:right;transform:scaleX(0.8125);transform-origin:100% 50%;">84608.70</div>
<div style="position:absolute;right:291.19999999999993px;top:350.98px;font-size:7.0px;line-height:7.0px;color:#111;white-space:nowrap;text-align:right;transform:scaleX(0.8125);transform-origin:100% 50%;">-316.20</div>
<div style="position:absolute;right:237.39999999999998px;top:350.98px;font-size:7.0px;line-height:7.0px;color:#111;white-space:nowrap;text-align:right;transform:scaleX(0.8125);transform-origin:100% 50%;">0.00</div>
<div style="position:absolute;right:178.19999999999993px;top:350.98px;font-size:7.0px;line-height:7.0px;color:#111;white-space:nowrap;text-align:right;transform:scaleX(0.8125);transform-origin:100% 50%;">300.39</div>
<div style="position:absolute;right:13.799999999999955px;top:350.98px;font-size:7.0px;line-height:7.0px;color:#111;white-space:nowrap;text-align:right;transform:scaleX(0.93);transform-origin:100% 50%;">memberforex.com[sl]</div>
<div style="position:absolute;left:77.6px;top:348.38px;width:0.8px;height:10.64px;background:#dcdcdc;"></div>
<div style="position:absolute;left:196.2px;top:348.38px;width:0.8px;height:10.64px;background:#dcdcdc;"></div>
<div style="position:absolute;left:249.79999999999998px;top:348.38px;width:0.8px;height:10.64px;background:#dcdcdc;"></div>
<div style="position:absolute;left:291.90000000000003px;top:348.38px;width:0.8px;height:10.64px;background:#dcdcdc;"></div>
<div style="position:absolute;left:345.90000000000003px;top:348.38px;width:0.8px;height:10.64px;background:#dcdcdc;"></div>
<div style="position:absolute;left:400.3px;top:348.38px;width:0.8px;height:10.64px;background:#dcdcdc;"></div>
<div style="position:absolute;left:454.1px;top:348.38px;width:0.8px;height:10.64px;background:#dcdcdc;"></div>
<div style="position:absolute;left:508.20000000000005px;top:348.38px;width:0.8px;height:10.64px;background:#dcdcdc;"></div>
<div style="position:absolute;left:626.8000000000001px;top:348.38px;width:0.8px;height:10.64px;background:#dcdcdc;"></div>
<div style="position:absolute;left:680.4px;top:348.38px;width:0.8px;height:10.64px;background:#dcdcdc;"></div>
<div style="position:absolute;left:734.2px;top:348.38px;width:0.8px;height:10.64px;background:#dcdcdc;"></div>
<div style="position:absolute;left:788.0px;top:348.38px;width:0.8px;height:10.64px;background:#dcdcdc;"></div>
<div style="position:absolute;left:847.2px;top:348.38px;width:0.8px;height:10.64px;background:#dcdcdc;"></div>
<div style="position:absolute;left:8.3px;top:359.02px;width:1003.7px;height:10.64px;background:#ffffff;"></div>
<div style="position:absolute;left:401.2px;top:360.02px;width:51.90000000000001px;height:8.84px;background:#ffa0a0;"></div>
<div style="position:absolute;right:829.2px;top:361.62px;font-size:7.0px;line-height:7.0px;color:#111;white-space:nowrap;text-align:right;transform:scaleX(0.8125);transform-origin:100% 50%;">2025.04.20 23:00:02</div>
<div style="position:absolute;right:775.6px;top:361.62px;font-size:7.0px;line-height:7.0px;color:#111;white-space:nowrap;text-align:right;transform:scaleX(0.93);transform-origin:100% 50%;">sell</div>
<div style="position:absolute;right:733.5px;top:361.62px;font-size:7.0px;line-height:7.0px;color:#111;white-space:nowrap;text-align:right;transform:scaleX(0.8125);transform-origin:100% 50%;">79.06</div>
<div style="position:absolute;right:679.5px;top:361.62px;font-size:7.0px;line-height:7.0px;color:#111;white-space:nowrap;text-align:right;transform:scaleX(0.93);transform-origin:100% 50%;">btcusdp</div>
<div style="position:absolute;right:625.1px;top:361.62px;font-size:7.0px;line-height:7.0px;color:#111;white-space:nowrap;text-align:right;transform:scaleX(0.8125);transform-origin:100% 50%;">84606.30</div>
<div style="position:absolute;right:571.3px;top:361.62px;font-size:7.0px;line-height:7.0px;color:#111;white-space:nowrap;text-align:right;transform:scaleX(0.8125);transform-origin:100% 50%;">84573.60</div>
<div style="position:absolute;right:517.2px;top:361.62px;font-size:7.0px;line-height:7.0px;color:#111;white-space:nowrap;text-align:right;transform:scaleX(0.8125);transform-origin:100% 50%;">83969.79</div>
<div style="position:absolute;right:398.5999999999999px;top:361.62px;font-size:7.0px;line-height:7.0px;color:#111;white-space:nowrap;text-align:right;transform:scaleX(0.8125);transform-origin:100% 50%;">2025.04.20 23:01:01</div>
<div style="position:absolute;right:345.0px;top:361.62px;font-size:7.0px;line-height:7.0px;color:#111;white-space:nowrap;text-align:right;transform:scaleX(0.8125);transform-origin:100% 50%;">84573.60</div>
<div style="position:absolute;right:291.19999999999993px;top:361.62px;font-size:7.0px;line-height:7.0px;color:#111;white-space:nowrap;text-align:right;transform:scaleX(0.8125);transform-origin:100% 50%;">-316.24</div>
<div style="position:absolute;right:237.39999999999998px;top:361.62px;font-size:7.0px;line-height:7.0px;color:#111;white-space:nowrap;text-align:right;transform:scaleX(0.8125);transform-origin:100% 50%;">0.00</div>
<div style="position:absolute;right:178.19999999999993px;top:361.62px;font-size:7.0px;line-height:7.0px;color:#111;white-space:nowrap;text-align:right;transform:scaleX(0.8125);transform-origin:100% 50%;">2 585.26</div>
<div style="position:absolute;right:13.799999999999955px;top:361.62px;font-size:7.0px;line-height:7.0px;color:#111;white-space:nowrap;text-align:right;transform:scaleX(0.93);transform-origin:100% 50%;">memberforex.com[sl]</div>
<div style="position:absolute;left:77.6px;top:359.02px;width:0.8px;height:10.64px;background:#dcdcdc;"></div>
<div style="position:absolute;left:196.2px;top:359.02px;width:0.8px;height:10.64px;background:#dcdcdc;"></div>
<div style="position:absolute;left:249.79999999999998px;top:359.02px;width:0.8px;height:10.64px;background:#dcdcdc;"></div>
<div style="position:absolute;left:291.90000000000003px;top:359.02px;width:0.8px;height:10.64px;background:#dcdcdc;"></div>
<div style="position:absolute;left:345.90000000000003px;top:359.02px;width:0.8px;height:10.64px;background:#dcdcdc;"></div>
<div style="position:absolute;left:400.3px;top:359.02px;width:0.8px;height:10.64px;background:#dcdcdc;"></div>
<div style="position:absolute;left:454.1px;top:359.02px;width:0.8px;height:10.64px;background:#dcdcdc;"></div>
<div style="position:absolute;left:508.20000000000005px;top:359.02px;width:0.8px;height:10.64px;background:#dcdcdc;"></div>
<div style="position:absolute;left:626.8000000000001px;top:359.02px;width:0.8px;height:10.64px;background:#dcdcdc;"></div>
<div style="position:absolute;left:680.4px;top:359.02px;width:0.8px;height:10.64px;background:#dcdcdc;"></div>
<div style="position:absolute;left:734.2px;top:359.02px;width:0.8px;height:10.64px;background:#dcdcdc;"></div>
<div style="position:absolute;left:788.0px;top:359.02px;width:0.8px;height:10.64px;background:#dcdcdc;"></div>
<div style="position:absolute;left:847.2px;top:359.02px;width:0.8px;height:10.64px;background:#dcdcdc;"></div>
<div style="position:absolute;left:8.3px;top:369.65999999999997px;width:1003.7px;height:10.64px;background:#e9e9e9;"></div>
<div style="position:absolute;left:401.2px;top:370.65999999999997px;width:51.90000000000001px;height:8.84px;background:#ffa0a0;"></div>
<div style="position:absolute;right:829.2px;top:372.26px;font-size:7.0px;line-height:7.0px;color:#111;white-space:nowrap;text-align:right;transform:scaleX(0.8125);transform-origin:100% 50%;">2025.04.20 23:05:43</div>
<div style="position:absolute;right:775.6px;top:372.26px;font-size:7.0px;line-height:7.0px;color:#111;white-space:nowrap;text-align:right;transform:scaleX(0.93);transform-origin:100% 50%;">sell</div>
<div style="position:absolute;right:733.5px;top:372.26px;font-size:7.0px;line-height:7.0px;color:#111;white-space:nowrap;text-align:right;transform:scaleX(0.8125);transform-origin:100% 50%;">79.19</div>
<div style="position:absolute;right:679.5px;top:372.26px;font-size:7.0px;line-height:7.0px;color:#111;white-space:nowrap;text-align:right;transform:scaleX(0.93);transform-origin:100% 50%;">btcusdp</div>
<div style="position:absolute;right:625.1px;top:372.26px;font-size:7.0px;line-height:7.0px;color:#111;white-space:nowrap;text-align:right;transform:scaleX(0.8125);transform-origin:100% 50%;">84923.20</div>
<div style="position:absolute;right:571.3px;top:372.26px;font-size:7.0px;line-height:7.0px;color:#111;white-space:nowrap;text-align:right;transform:scaleX(0.8125);transform-origin:100% 50%;">84918.80</div>
<div style="position:absolute;right:517.2px;top:372.26px;font-size:7.0px;line-height:7.0px;color:#111;white-space:nowrap;text-align:right;transform:scaleX(0.8125);transform-origin:100% 50%;">84314.99</div>
<div style="position:absolute;right:398.5999999999999px;top:372.26px;font-size:7.0px;line-height:7.0px;color:#111;white-space:nowrap;text-align:right;transform:scaleX(0.8125);transform-origin:100% 50%;">2025.04.20 23:05:48</div>
<div style="position:absolute;right:345.0px;top:372.26px;font-size:7.0px;line-height:7.0px;color:#111;white-space:nowrap;text-align:right;transform:scaleX(0.8125);transform-origin:100% 50%;">84918.80</div>
<div style="position:absolute;right:291.19999999999993px;top:372.26px;font-size:7.0px;line-height:7.0px;color:#111;white-space:nowrap;text-align:right;transform:scaleX(0.8125);transform-origin:100% 50%;">-316.76</div>
<div style="position:absolute;right:237.39999999999998px;top:372.26px;font-size:7.0px;line-height:7.0px;color:#111;white-space:nowrap;text-align:right;transform:scaleX(0.8125);transform-origin:100% 50%;">0.00</div>
<div style="position:absolute;right:178.19999999999993px;top:372.26px;font-size:7.0px;line-height:7.0px;color:#111;white-space:nowrap;text-align:right;transform:scaleX(0.8125);transform-origin:100% 50%;">348.44</div>
<div style="position:absolute;right:13.799999999999955px;top:372.26px;font-size:7.0px;line-height:7.0px;color:#111;white-space:nowrap;text-align:right;transform:scaleX(0.93);transform-origin:100% 50%;">memberforex.com[sl]</div>
<div style="position:absolute;left:77.6px;top:369.65999999999997px;width:0.8px;height:10.64px;background:#dcdcdc;"></div>
<div style="position:absolute;left:196.2px;top:369.65999999999997px;width:0.8px;height:10.64px;background:#dcdcdc;"></div>
<div style="position:absolute;left:249.79999999999998px;top:369.65999999999997px;width:0.8px;height:10.64px;background:#dcdcdc;"></div>
<div style="position:absolute;left:291.90000000000003px;top:369.65999999999997px;width:0.8px;height:10.64px;background:#dcdcdc;"></div>
<div style="position:absolute;left:345.90000000000003px;top:369.65999999999997px;width:0.8px;height:10.64px;background:#dcdcdc;"></div>
<div style="position:absolute;left:400.3px;top:369.65999999999997px;width:0.8px;height:10.64px;background:#dcdcdc;"></div>
<div style="position:absolute;left:454.1px;top:369.65999999999997px;width:0.8px;height:10.64px;background:#dcdcdc;"></div>
<div style="position:absolute;left:508.20000000000005px;top:369.65999999999997px;width:0.8px;height:10.64px;background:#dcdcdc;"></div>
<div style="position:absolute;left:626.8000000000001px;top:369.65999999999997px;width:0.8px;height:10.64px;background:#dcdcdc;"></div>
<div style="position:absolute;left:680.4px;top:369.65999999999997px;width:0.8px;height:10.64px;background:#dcdcdc;"></div>
<div style="position:absolute;left:734.2px;top:369.65999999999997px;width:0.8px;height:10.64px;background:#dcdcdc;"></div>
<div style="position:absolute;left:788.0px;top:369.65999999999997px;width:0.8px;height:10.64px;background:#dcdcdc;"></div>
<div style="position:absolute;left:847.2px;top:369.65999999999997px;width:0.8px;height:10.64px;background:#dcdcdc;"></div>
<div style="position:absolute;left:8.3px;top:380.29999999999995px;width:1003.7px;height:10.64px;background:#ffffff;"></div>
<div style="position:absolute;left:401.2px;top:381.29999999999995px;width:51.90000000000001px;height:8.84px;background:#ffa0a0;"></div>
<div style="position:absolute;right:829.2px;top:382.9px;font-size:7.0px;line-height:7.0px;color:#111;white-space:nowrap;text-align:right;transform:scaleX(0.8125);transform-origin:100% 50%;">2025.04.20 23:05:50</div>
<div style="position:absolute;right:775.6px;top:382.9px;font-size:7.0px;line-height:7.0px;color:#111;white-space:nowrap;text-align:right;transform:scaleX(0.93);transform-origin:100% 50%;">sell</div>
<div style="position:absolute;right:733.5px;top:382.9px;font-size:7.0px;line-height:7.0px;color:#111;white-space:nowrap;text-align:right;transform:scaleX(0.8125);transform-origin:100% 50%;">79.20</div>
<div style="position:absolute;right:679.5px;top:382.9px;font-size:7.0px;line-height:7.0px;color:#111;white-space:nowrap;text-align:right;transform:scaleX(0.93);transform-origin:100% 50%;">btcusdp</div>
<div style="position:absolute;right:625.1px;top:382.9px;font-size:7.0px;line-height:7.0px;color:#111;white-space:nowrap;text-align:right;transform:scaleX(0.8125);transform-origin:100% 50%;">84915.50</div>
<div style="position:absolute;right:571.3px;top:382.9px;font-size:7.0px;line-height:7.0px;color:#111;white-space:nowrap;text-align:right;transform:scaleX(0.8125);transform-origin:100% 50%;">84878.10</div>
<div style="position:absolute;right:517.2px;top:382.9px;font-size:7.0px;line-height:7.0px;color:#111;white-space:nowrap;text-align:right;transform:scaleX(0.8125);transform-origin:100% 50%;">84274.29</div>
<div style="position:absolute;right:398.5999999999999px;top:382.9px;font-size:7.0px;line-height:7.0px;color:#111;white-space:nowrap;text-align:right;transform:scaleX(0.8125);transform-origin:100% 50%;">2025.04.20 23:05:55</div>
<div style="position:absolute;right:345.0px;top:382.9px;font-size:7.0px;line-height:7.0px;color:#111;white-space:nowrap;text-align:right;transform:scaleX(0.8125);transform-origin:100% 50%;">84878.10</div>
<div style="position:absolute;right:291.19999999999993px;top:382.9px;font-size:7.0px;line-height:7.0px;color:#111;white-space:nowrap;text-align:right;transform:scaleX(0.8125);transform-origin:100% 50%;">-316.80</div>
<div style="position:absolute;right:237.39999999999998px;top:382.9px;font-size:7.0px;line-height:7.0px;color:#111;white-space:nowrap;text-align:right;transform:scaleX(0.8125);transform-origin:100% 50%;">0.00</div>
<div style="position:absolute;right:178.19999999999993px;top:382.9px;font-size:7.0px;line-height:7.0px;color:#111;white-space:nowrap;text-align:right;transform:scaleX(0.8125);transform-origin:100% 50%;">2 962.08</div>
<div style="position:absolute;right:13.799999999999955px;top:382.9px;font-size:7.0px;line-height:7.0px;color:#111;white-space:nowrap;text-align:right;transform:scaleX(0.93);transform-origin:100% 50%;">memberforex.com[sl]</div>
<div style="position:absolute;left:77.6px;top:380.29999999999995px;width:0.8px;height:10.64px;background:#dcdcdc;"></div>
<div style="position:absolute;left:196.2px;top:380.29999999999995px;width:0.8px;height:10.64px;background:#dcdcdc;"></div>
<div style="position:absolute;left:249.79999999999998px;top:380.29999999999995px;width:0.8px;height:10.64px;background:#dcdcdc;"></div>
<div style="position:absolute;left:291.90000000000003px;top:380.29999999999995px;width:0.8px;height:10.64px;background:#dcdcdc;"></div>
<div style="position:absolute;left:345.90000000000003px;top:380.29999999999995px;width:0.8px;height:10.64px;background:#dcdcdc;"></div>
<div style="position:absolute;left:400.3px;top:380.29999999999995px;width:0.8px;height:10.64px;background:#dcdcdc;"></div>
<div style="position:absolute;left:454.1px;top:380.29999999999995px;width:0.8px;height:10.64px;background:#dcdcdc;"></div>
<div style="position:absolute;left:508.20000000000005px;top:380.29999999999995px;width:0.8px;height:10.64px;background:#dcdcdc;"></div>
<div style="position:absolute;left:626.8000000000001px;top:380.29999999999995px;width:0.8px;height:10.64px;background:#dcdcdc;"></div>
<div style="position:absolute;left:680.4px;top:380.29999999999995px;width:0.8px;height:10.64px;background:#dcdcdc;"></div>
<div style="position:absolute;left:734.2px;top:380.29999999999995px;width:0.8px;height:10.64px;background:#dcdcdc;"></div>
<div style="position:absolute;left:788.0px;top:380.29999999999995px;width:0.8px;height:10.64px;background:#dcdcdc;"></div>
<div style="position:absolute;left:847.2px;top:380.29999999999995px;width:0.8px;height:10.64px;background:#dcdcdc;"></div>
<div style="position:absolute;left:8.3px;top:390.94px;width:1003.7px;height:10.64px;background:#e9e9e9;"></div>
<div style="position:absolute;left:401.2px;top:391.94px;width:51.90000000000001px;height:8.84px;background:#ffa0a0;"></div>
<div style="position:absolute;right:829.2px;top:393.54px;font-size:7.0px;line-height:7.0px;color:#111;white-space:nowrap;text-align:right;transform:scaleX(0.8125);transform-origin:100% 50%;">2025.04.20 23:05:25</div>
<div style="position:absolute;right:775.6px;top:393.54px;font-size:7.0px;line-height:7.0px;color:#111;white-space:nowrap;text-align:right;transform:scaleX(0.93);transform-origin:100% 50%;">sell</div>
<div style="position:absolute;right:733.5px;top:393.54px;font-size:7.0px;line-height:7.0px;color:#111;white-space:nowrap;text-align:right;transform:scaleX(0.8125);transform-origin:100% 50%;">79.25</div>
<div style="position:absolute;right:679.5px;top:393.54px;font-size:7.0px;line-height:7.0px;color:#111;white-space:nowrap;text-align:right;transform:scaleX(0.93);transform-origin:100% 50%;">btcusdp</div>
<div style="position:absolute;right:625.1px;top:393.54px;font-size:7.0px;line-height:7.0px;color:#111;white-space:nowrap;text-align:right;transform:scaleX(0.8125);transform-origin:100% 50%;">84796.00</div>
<div style="position:absolute;right:571.3px;top:393.54px;font-size:7.0px;line-height:7.0px;color:#111;white-space:nowrap;text-align:right;transform:scaleX(0.8125);transform-origin:100% 50%;">84799.80</div>
<div style="position:absolute;right:517.2px;top:393.54px;font-size:7.0px;line-height:7.0px;color:#111;white-space:nowrap;text-align:right;transform:scaleX(0.8125);transform-origin:100% 50%;">84195.99</div>
<div style="position:absolute;right:398.5999999999999px;top:393.54px;font-size:7.0px;line-height:7.0px;color:#111;white-space:nowrap;text-align:right;transform:scaleX(0.8125);transform-origin:100% 50%;">2025.04.20 23:05:25</div>
<div style="position:absolute;right:345.0px;top:393.54px;font-size:7.0px;line-height:7.0px;color:#111;white-space:nowrap;text-align:right;transform:scaleX(0.8125);transform-origin:100% 50%;">84799.80</div>
<div style="position:absolute;right:291.19999999999993px;top:393.54px;font-size:7.0px;line-height:7.0px;color:#111;white-space:nowrap;text-align:right;transform:scaleX(0.8125);transform-origin:100% 50%;">-317.00</div>
<div style="position:absolute;right:237.39999999999998px;top:393.54px;font-size:7.0px;line-height:7.0px;color:#111;white-space:nowrap;text-align:right;transform:scaleX(0.8125);transform-origin:100% 50%;">0.00</div>
<div style="position:absolute;right:178.19999999999993px;top:393.54px;font-size:7.0px;line-height:7.0px;color:#111;white-space:nowrap;text-align:right;transform:scaleX(0.8125);transform-origin:100% 50%;">-301.15</div>
<div style="position:absolute;right:13.799999999999955px;top:393.54px;font-size:7.0px;line-height:7.0px;color:#111;white-space:nowrap;text-align:right;transform:scaleX(0.93);transform-origin:100% 50%;">memberforex.com[sl]</div>
<div style="position:absolute;left:77.6px;top:390.94px;width:0.8px;height:10.64px;background:#dcdcdc;"></div>
<div style="position:absolute;left:196.2px;top:390.94px;width:0.8px;height:10.64px;background:#dcdcdc;"></div>
<div style="position:absolute;left:249.79999999999998px;top:390.94px;width:0.8px;height:10.64px;background:#dcdcdc;"></div>
<div style="position:absolute;left:291.90000000000003px;top:390.94px;width:0.8px;height:10.64px;background:#dcdcdc;"></div>
<div style="position:absolute;left:345.90000000000003px;top:390.94px;width:0.8px;height:10.64px;background:#dcdcdc;"></div>
<div style="position:absolute;left:400.3px;top:390.94px;width:0.8px;height:10.64px;background:#dcdcdc;"></div>
<div style="position:absolute;left:454.1px;top:390.94px;width:0.8px;height:10.64px;background:#dcdcdc;"></div>
<div style="position:absolute;left:508.20000000000005px;top:390.94px;width:0.8px;height:10.64px;background:#dcdcdc;"></div>
<div style="position:absolute;left:626.8000000000001px;top:390.94px;width:0.8px;height:10.64px;background:#dcdcdc;"></div>
<div style="position:absolute;left:680.4px;top:390.94px;width:0.8px;height:10.64px;background:#dcdcdc;"></div>
<div style="position:absolute;left:734.2px;top:390.94px;width:0.8px;height:10.64px;background:#dcdcdc;"></div>
<div style="position:absolute;left:788.0px;top:390.94px;width:0.8px;height:10.64px;background:#dcdcdc;"></div>
<div style="position:absolute;left:847.2px;top:390.94px;width:0.8px;height:10.64px;background:#dcdcdc;"></div>
<div style="position:absolute;left:8.3px;top:401.58px;width:1003.7px;height:10.64px;background:#ffffff;"></div>
<div style="position:absolute;left:401.2px;top:402.58px;width:51.90000000000001px;height:8.84px;background:#ffa0a0;"></div>
<div style="position:absolute;right:829.2px;top:404.18px;font-size:7.0px;line-height:7.0px;color:#111;white-space:nowrap;text-align:right;transform:scaleX(0.8125);transform-origin:100% 50%;">2025.04.20 23:05:11</div>
<div style="position:absolute;right:775.6px;top:404.18px;font-size:7.0px;line-height:7.0px;color:#111;white-space:nowrap;text-align:right;transform:scaleX(0.93);transform-origin:100% 50%;">sell</div>
<div style="position:absolute;right:733.5px;top:404.18px;font-size:7.0px;line-height:7.0px;color:#111;white-space:nowrap;text-align:right;transform:scaleX(0.8125);transform-origin:100% 50%;">79.28</div>
<div style="position:absolute;right:679.5px;top:404.18px;font-size:7.0px;line-height:7.0px;color:#111;white-space:nowrap;text-align:right;transform:scaleX(0.93);transform-origin:100% 50%;">btcusdp</div>
<div style="position:absolute;right:625.1px;top:404.18px;font-size:7.0px;line-height:7.0px;color:#111;white-space:nowrap;text-align:right;transform:scaleX(0.8125);transform-origin:100% 50%;">84703.00</div>
<div style="position:absolute;right:571.3px;top:404.18px;font-size:7.0px;line-height:7.0px;color:#111;white-space:nowrap;text-align:right;transform:scaleX(0.8125);transform-origin:100% 50%;">84702.80</div>
<div style="position:absolute;right:517.2px;top:404.18px;font-size:7.0px;line-height:7.0px;color:#111;white-space:nowrap;text-align:right;transform:scaleX(0.8125);transform-origin:100% 50%;">84098.99</div>
<div style="position:absolute;right:398.5999999999999px;top:404.18px;font-size:7.0px;line-height:7.0px;color:#111;white-space:nowrap;text-align:right;transform:scaleX(0.8125);transform-origin:100% 50%;">2025.04.20 23:05:13</div>
<div style="position:absolute;right:345.0px;top:404.18px;font-size:7.0px;line-height:7.0px;color:#111;white-space:nowrap;text-align:right;transform:scaleX(0.8125);transform-origin:100% 50%;">84702.80</div>
<div style="position:absolute;right:291.19999999999993px;top:404.18px;font-size:7.0px;line-height:7.0px;color:#111;white-space:nowrap;text-align:right;transform:scaleX(0.8125);transform-origin:100% 50%;">-317.12</div>
<div style="position:absolute;right:237.39999999999998px;top:404.18px;font-size:7.0px;line-height:7.0px;color:#111;white-space:nowrap;text-align:right;transform:scaleX(0.8125);transform-origin:100% 50%;">0.00</div>
<div style="position:absolute;right:178.19999999999993px;top:404.18px;font-size:7.0px;line-height:7.0px;color:#111;white-space:nowrap;text-align:right;transform:scaleX(0.8125);transform-origin:100% 50%;">15.86</div>
<div style="position:absolute;right:13.799999999999955px;top:404.18px;font-size:7.0px;line-height:7.0px;color:#111;white-space:nowrap;text-align:right;transform:scaleX(0.93);transform-origin:100% 50%;">memberforex.com[sl]</div>
<div style="position:absolute;left:77.6px;top:401.58px;width:0.8px;height:10.64px;background:#dcdcdc;"></div>
<div style="position:absolute;left:196.2px;top:401.58px;width:0.8px;height:10.64px;background:#dcdcdc;"></div>
<div style="position:absolute;left:249.79999999999998px;top:401.58px;width:0.8px;height:10.64px;background:#dcdcdc;"></div>
<div style="position:absolute;left:291.90000000000003px;top:401.58px;width:0.8px;height:10.64px;background:#dcdcdc;"></div>
<div style="position:absolute;left:345.90000000000003px;top:401.58px;width:0.8px;height:10.64px;background:#dcdcdc;"></div>
<div style="position:absolute;left:400.3px;top:401.58px;width:0.8px;height:10.64px;background:#dcdcdc;"></div>
<div style="position:absolute;left:454.1px;top:401.58px;width:0.8px;height:10.64px;background:#dcdcdc;"></div>
<div style="position:absolute;left:508.20000000000005px;top:401.58px;width:0.8px;height:10.64px;background:#dcdcdc;"></div>
<div style="position:absolute;left:626.8000000000001px;top:401.58px;width:0.8px;height:10.64px;background:#dcdcdc;"></div>
<div style="position:absolute;left:680.4px;top:401.58px;width:0.8px;height:10.64px;background:#dcdcdc;"></div>
<div style="position:absolute;left:734.2px;top:401.58px;width:0.8px;height:10.64px;background:#dcdcdc;"></div>
<div style="position:absolute;left:788.0px;top:401.58px;width:0.8px;height:10.64px;background:#dcdcdc;"></div>
<div style="position:absolute;left:847.2px;top:401.58px;width:0.8px;height:10.64px;background:#dcdcdc;"></div>
<div style="position:absolute;left:8.3px;top:412.21999999999997px;width:1003.7px;height:10.64px;background:#e9e9e9;"></div>
<div style="position:absolute;left:401.2px;top:413.21999999999997px;width:51.90000000000001px;height:8.84px;background:#ffa0a0;"></div>
<div style="position:absolute;right:829.2px;top:414.82px;font-size:7.0px;line-height:7.0px;color:#111;white-space:nowrap;text-align:right;transform:scaleX(0.8125);transform-origin:100% 50%;">2025.04.20 23:06:00</div>
<div style="position:absolute;right:775.6px;top:414.82px;font-size:7.0px;line-height:7.0px;color:#111;white-space:nowrap;text-align:right;transform:scaleX(0.93);transform-origin:100% 50%;">sell</div>
<div style="position:absolute;right:733.5px;top:414.82px;font-size:7.0px;line-height:7.0px;color:#111;white-space:nowrap;text-align:right;transform:scaleX(0.8125);transform-origin:100% 50%;">79.46</div>
<div style="position:absolute;right:679.5px;top:414.82px;font-size:7.0px;line-height:7.0px;color:#111;white-space:nowrap;text-align:right;transform:scaleX(0.93);transform-origin:100% 50%;">btcusdp</div>
<div style="position:absolute;right:625.1px;top:414.82px;font-size:7.0px;line-height:7.0px;color:#111;white-space:nowrap;text-align:right;transform:scaleX(0.8125);transform-origin:100% 50%;">84897.40</div>
<div style="position:absolute;right:571.3px;top:414.82px;font-size:7.0px;line-height:7.0px;color:#111;white-space:nowrap;text-align:right;transform:scaleX(0.8125);transform-origin:100% 50%;">84882.30</div>
<div style="position:absolute;right:517.2px;top:414.82px;font-size:7.0px;line-height:7.0px;color:#111;white-space:nowrap;text-align:right;transform:scaleX(0.8125);transform-origin:100% 50%;">84278.49</div>
<div style="position:absolute;right:398.5999999999999px;top:414.82px;font-size:7.0px;line-height:7.0px;color:#111;white-space:nowrap;text-align:right;transform:scaleX(0.8125);transform-origin:100% 50%;">2025.04.20 23:06:06</div>
<div style="position:absolute;right:345.0px;top:414.82px;font-size:7.0px;line-height:7.0px;color:#111;white-space:nowrap;text-align:right;transform:scaleX(0.8125);transform-origin:100% 50%;">84882.30</div>
<div style="position:absolute;right:291.19999999999993px;top:414.82px;font-size:7.0px;line-height:7.0px;color:#111;white-space:nowrap;text-align:right;transform:scaleX(0.8125);transform-origin:100% 50%;">-317.84</div>
<div style="position:absolute;right:237.39999999999998px;top:414.82px;font-size:7.0px;line-height:7.0px;color:#111;white-space:nowrap;text-align:right;transform:scaleX(0.8125);transform-origin:100% 50%;">0.00</div>
<div style="position:absolute;right:178.19999999999993px;top:414.82px;font-size:7.0px;line-height:7.0px;color:#111;white-space:nowrap;text-align:right;transform:scaleX(0.8125);transform-origin:100% 50%;">1 199.85</div>
<div style="position:absolute;right:13.799999999999955px;top:414.82px;font-size:7.0px;line-height:7.0px;color:#111;white-space:nowrap;text-align:right;transform:scaleX(0.93);transform-origin:100% 50%;">memberforex.com[sl]</div>
<div style="position:absolute;left:77.6px;top:412.21999999999997px;width:0.8px;height:10.64px;background:#dcdcdc;"></div>
<div style="position:absolute;left:196.2px;top:412.21999999999997px;width:0.8px;height:10.64px;background:#dcdcdc;"></div>
<div style="position:absolute;left:249.79999999999998px;top:412.21999999999997px;width:0.8px;height:10.64px;background:#dcdcdc;"></div>
<div style="position:absolute;left:291.90000000000003px;top:412.21999999999997px;width:0.8px;height:10.64px;background:#dcdcdc;"></div>
<div style="position:absolute;left:345.90000000000003px;top:412.21999999999997px;width:0.8px;height:10.64px;background:#dcdcdc;"></div>
<div style="position:absolute;left:400.3px;top:412.21999999999997px;width:0.8px;height:10.64px;background:#dcdcdc;"></div>
<div style="position:absolute;left:454.1px;top:412.21999999999997px;width:0.8px;height:10.64px;background:#dcdcdc;"></div>
<div style="position:absolute;left:508.20000000000005px;top:412.21999999999997px;width:0.8px;height:10.64px;background:#dcdcdc;"></div>
<div style="position:absolute;left:626.8000000000001px;top:412.21999999999997px;width:0.8px;height:10.64px;background:#dcdcdc;"></div>
<div style="position:absolute;left:680.4px;top:412.21999999999997px;width:0.8px;height:10.64px;background:#dcdcdc;"></div>
<div style="position:absolute;left:734.2px;top:412.21999999999997px;width:0.8px;height:10.64px;background:#dcdcdc;"></div>
<div style="position:absolute;left:788.0px;top:412.21999999999997px;width:0.8px;height:10.64px;background:#dcdcdc;"></div>
<div style="position:absolute;left:847.2px;top:412.21999999999997px;width:0.8px;height:10.64px;background:#dcdcdc;"></div>
<div style="position:absolute;left:8.3px;top:422.86px;width:1003.7px;height:10.64px;background:#ffffff;"></div>
<div style="position:absolute;left:401.2px;top:423.86px;width:51.90000000000001px;height:8.84px;background:#ffa0a0;"></div>
<div style="position:absolute;right:829.2px;top:425.46000000000004px;font-size:7.0px;line-height:7.0px;color:#111;white-space:nowrap;text-align:right;transform:scaleX(0.8125);transform-origin:100% 50%;">2025.04.20 23:06:09</div>
<div style="position:absolute;right:775.6px;top:425.46000000000004px;font-size:7.0px;line-height:7.0px;color:#111;white-space:nowrap;text-align:right;transform:scaleX(0.93);transform-origin:100% 50%;">sell</div>
<div style="position:absolute;right:733.5px;top:425.46000000000004px;font-size:7.0px;line-height:7.0px;color:#111;white-space:nowrap;text-align:right;transform:scaleX(0.8125);transform-origin:100% 50%;">79.54</div>
<div style="position:absolute;right:679.5px;top:425.46000000000004px;font-size:7.0px;line-height:7.0px;color:#111;white-space:nowrap;text-align:right;transform:scaleX(0.93);transform-origin:100% 50%;">btcusdp</div>
<div style="position:absolute;right:625.1px;top:425.46000000000004px;font-size:7.0px;line-height:7.0px;color:#111;white-space:nowrap;text-align:right;transform:scaleX(0.8125);transform-origin:100% 50%;">84887.40</div>
<div style="position:absolute;right:571.3px;top:425.46000000000004px;font-size:7.0px;line-height:7.0px;color:#111;white-space:nowrap;text-align:right;transform:scaleX(0.8125);transform-origin:100% 50%;">84874.30</div>
<div style="position:absolute;right:517.2px;top:425.46000000000004px;font-size:7.0px;line-height:7.0px;color:#111;white-space:nowrap;text-align:right;transform:scaleX(0.8125);transform-origin:100% 50%;">84270.49</div>
<div style="position:absolute;right:398.5999999999999px;top:425.46000000000004px;font-size:7.0px;line-height:7.0px;color:#111;white-space:nowrap;text-align:right;transform:scaleX(0.8125);transform-origin:100% 50%;">2025.04.20 23:06:15</div>
<div style="position:absolute;right:345.0px;top:425.46000000000004px;font-size:7.0px;line-height:7.0px;color:#111;white-space:nowrap;text-align:right;transform:scaleX(0.8125);transform-origin:100% 50%;">84874.30</div>
<div style="position:absolute;right:291.19999999999993px;top:425.46000000000004px;font-size:7.0px;line-height:7.0px;color:#111;white-space:nowrap;text-align:right;transform:scaleX(0.8125);transform-origin:100% 50%;">-318.16</div>
<div style="position:absolute;right:237.39999999999998px;top:425.46000000000004px;font-size:7.0px;line-height:7.0px;color:#111;white-space:nowrap;text-align:right;transform:scaleX(0.8125);transform-origin:100% 50%;">0.00</div>
<div style="position:absolute;right:178.19999999999993px;top:425.46000000000004px;font-size:7.0px;line-height:7.0px;color:#111;white-space:nowrap;text-align:right;transform:scaleX(0.8125);transform-origin:100% 50%;">1 041.97</div>
<div style="position:absolute;right:13.799999999999955px;top:425.46000000000004px;font-size:7.0px;line-height:7.0px;color:#111;white-space:nowrap;text-align:right;transform:scaleX(0.93);transform-origin:100% 50%;">memberforex.com[sl]</div>
<div style="position:absolute;left:77.6px;top:422.86px;width:0.8px;height:10.64px;background:#dcdcdc;"></div>
<div style="position:absolute;left:196.2px;top:422.86px;width:0.8px;height:10.64px;background:#dcdcdc;"></div>
<div style="position:absolute;left:249.79999999999998px;top:422.86px;width:0.8px;height:10.64px;background:#dcdcdc;"></div>
<div style="position:absolute;left:291.90000000000003px;top:422.86px;width:0.8px;height:10.64px;background:#dcdcdc;"></div>
<div style="position:absolute;left:345.90000000000003px;top:422.86px;width:0.8px;height:10.64px;background:#dcdcdc;"></div>
<div style="position:absolute;left:400.3px;top:422.86px;width:0.8px;height:10.64px;background:#dcdcdc;"></div>
<div style="position:absolute;left:454.1px;top:422.86px;width:0.8px;height:10.64px;background:#dcdcdc;"></div>
<div style="position:absolute;left:508.20000000000005px;top:422.86px;width:0.8px;height:10.64px;background:#dcdcdc;"></div>
<div style="position:absolute;left:626.8000000000001px;top:422.86px;width:0.8px;height:10.64px;background:#dcdcdc;"></div>
<div style="position:absolute;left:680.4px;top:422.86px;width:0.8px;height:10.64px;background:#dcdcdc;"></div>
<div style="position:absolute;left:734.2px;top:422.86px;width:0.8px;height:10.64px;background:#dcdcdc;"></div>
<div style="position:absolute;left:788.0px;top:422.86px;width:0.8px;height:10.64px;background:#dcdcdc;"></div>
<div style="position:absolute;left:847.2px;top:422.86px;width:0.8px;height:10.64px;background:#dcdcdc;"></div>
<div style="position:absolute;left:8.3px;top:433.5px;width:1003.7px;height:10.64px;background:#e9e9e9;"></div>
<div style="position:absolute;left:401.2px;top:434.5px;width:51.90000000000001px;height:8.84px;background:#ffa0a0;"></div>
<div style="position:absolute;right:829.2px;top:436.1px;font-size:7.0px;line-height:7.0px;color:#111;white-space:nowrap;text-align:right;transform:scaleX(0.8125);transform-origin:100% 50%;">2025.04.20 23:06:27</div>
<div style="position:absolute;right:775.6px;top:436.1px;font-size:7.0px;line-height:7.0px;color:#111;white-space:nowrap;text-align:right;transform:scaleX(0.93);transform-origin:100% 50%;">sell</div>
<div style="position:absolute;right:733.5px;top:436.1px;font-size:7.0px;line-height:7.0px;color:#111;white-space:nowrap;text-align:right;transform:scaleX(0.8125);transform-origin:100% 50%;">79.55</div>
<div style="position:absolute;right:679.5px;top:436.1px;font-size:7.0px;line-height:7.0px;color:#111;white-space:nowrap;text-align:right;transform:scaleX(0.93);transform-origin:100% 50%;">btcusdp</div>
<div style="position:absolute;right:625.1px;top:436.1px;font-size:7.0px;line-height:7.0px;color:#111;white-space:nowrap;text-align:right;transform:scaleX(0.8125);transform-origin:100% 50%;">84886.40</div>
<div style="position:absolute;right:571.3px;top:436.1px;font-size:7.0px;line-height:7.0px;color:#111;white-space:nowrap;text-align:right;transform:scaleX(0.8125);transform-origin:100% 50%;">84828.20</div>
<div style="position:absolute;right:517.2px;top:436.1px;font-size:7.0px;line-height:7.0px;color:#111;white-space:nowrap;text-align:right;transform:scaleX(0.8125);transform-origin:100% 50%;">84224.39</div>
<div style="position:absolute;right:398.5999999999999px;top:436.1px;font-size:7.0px;line-height:7.0px;color:#111;white-space:nowrap;text-align:right;transform:scaleX(0.8125);transform-origin:100% 50%;">2025.04.20 23:06:52</div>
<div style="position:absolute;right:345.0px;top:436.1px;font-size:7.0px;line-height:7.0px;color:#111;white-space:nowrap;text-align:right;transform:scaleX(0.8125);transform-origin:100% 50%;">84828.20</div>
<div style="position:absolute;right:291.19999999999993px;top:436.1px;font-size:7.0px;line-height:7.0px;color:#111;white-space:nowrap;text-align:right;transform:scaleX(0.8125);transform-origin:100% 50%;">-318.20</div>
<div style="position:absolute;right:237.39999999999998px;top:436.1px;font-size:7.0px;line-height:7.0px;color:#111;white-space:nowrap;text-align:right;transform:scaleX(0.8125);transform-origin:100% 50%;">0.00</div>
<div style="position:absolute;right:178.19999999999993px;top:436.1px;font-size:7.0px;line-height:7.0px;color:#111;white-space:nowrap;text-align:right;transform:scaleX(0.8125);transform-origin:100% 50%;">4 629.81</div>
<div style="position:absolute;right:13.799999999999955px;top:436.1px;font-size:7.0px;line-height:7.0px;color:#111;white-space:nowrap;text-align:right;transform:scaleX(0.93);transform-origin:100% 50%;">memberforex.com[sl]</div>
<div style="position:absolute;left:77.6px;top:433.5px;width:0.8px;height:10.64px;background:#dcdcdc;"></div>
<div style="position:absolute;left:196.2px;top:433.5px;width:0.8px;height:10.64px;background:#dcdcdc;"></div>
<div style="position:absolute;left:249.79999999999998px;top:433.5px;width:0.8px;height:10.64px;background:#dcdcdc;"></div>
<div style="position:absolute;left:291.90000000000003px;top:433.5px;width:0.8px;height:10.64px;background:#dcdcdc;"></div>
<div style="position:absolute;left:345.90000000000003px;top:433.5px;width:0.8px;height:10.64px;background:#dcdcdc;"></div>
<div style="position:absolute;left:400.3px;top:433.5px;width:0.8px;height:10.64px;background:#dcdcdc;"></div>
<div style="position:absolute;left:454.1px;top:433.5px;width:0.8px;height:10.64px;background:#dcdcdc;"></div>
<div style="position:absolute;left:508.20000000000005px;top:433.5px;width:0.8px;height:10.64px;background:#dcdcdc;"></div>
<div style="position:absolute;left:626.8000000000001px;top:433.5px;width:0.8px;height:10.64px;background:#dcdcdc;"></div>
<div style="position:absolute;left:680.4px;top:433.5px;width:0.8px;height:10.64px;background:#dcdcdc;"></div>
<div style="position:absolute;left:734.2px;top:433.5px;width:0.8px;height:10.64px;background:#dcdcdc;"></div>
<div style="position:absolute;left:788.0px;top:433.5px;width:0.8px;height:10.64px;background:#dcdcdc;"></div>
<div style="position:absolute;left:847.2px;top:433.5px;width:0.8px;height:10.64px;background:#dcdcdc;"></div>
<div style="position:absolute;left:8.3px;top:444.14px;width:1003.7px;height:10.64px;background:#ffffff;"></div>
<div style="position:absolute;left:401.2px;top:445.14px;width:51.90000000000001px;height:8.84px;background:#ffa0a0;"></div>
<div style="position:absolute;right:829.2px;top:446.74px;font-size:7.0px;line-height:7.0px;color:#111;white-space:nowrap;text-align:right;transform:scaleX(0.8125);transform-origin:100% 50%;">2025.04.20 23:06:15</div>
<div style="position:absolute;right:775.6px;top:446.74px;font-size:7.0px;line-height:7.0px;color:#111;white-space:nowrap;text-align:right;transform:scaleX(0.93);transform-origin:100% 50%;">sell</div>
<div style="position:absolute;right:733.5px;top:446.74px;font-size:7.0px;line-height:7.0px;color:#111;white-space:nowrap;text-align:right;transform:scaleX(0.8125);transform-origin:100% 50%;">79.61</div>
<div style="position:absolute;right:679.5px;top:446.74px;font-size:7.0px;line-height:7.0px;color:#111;white-space:nowrap;text-align:right;transform:scaleX(0.93);transform-origin:100% 50%;">btcusdp</div>
<div style="position:absolute;right:625.1px;top:446.74px;font-size:7.0px;line-height:7.0px;color:#111;white-space:nowrap;text-align:right;transform:scaleX(0.8125);transform-origin:100% 50%;">84874.00</div>
<div style="position:absolute;right:571.3px;top:446.74px;font-size:7.0px;line-height:7.0px;color:#111;white-space:nowrap;text-align:right;transform:scaleX(0.8125);transform-origin:100% 50%;">84877.80</div>
<div style="position:absolute;right:517.2px;top:446.74px;font-size:7.0px;line-height:7.0px;color:#111;white-space:nowrap;text-align:right;transform:scaleX(0.8125);transform-origin:100% 50%;">84274.00</div>
<div style="position:absolute;right:398.5999999999999px;top:446.74px;font-size:7.0px;line-height:7.0px;color:#111;white-space:nowrap;text-align:right;transform:scaleX(0.8125);transform-origin:100% 50%;">2025.04.20 23:06:16</div>
<div style="position:absolute;right:345.0px;top:446.74px;font-size:7.0px;line-height:7.0px;color:#111;white-space:nowrap;text-align:right;transform:scaleX(0.8125);transform-origin:100% 50%;">84877.80</div>
<div style="position:absolute;right:291.19999999999993px;top:446.74px;font-size:7.0px;line-height:7.0px;color:#111;white-space:nowrap;text-align:right;transform:scaleX(0.8125);transform-origin:100% 50%;">-318.44</div>
<div style="position:absolute;right:237.39999999999998px;top:446.74px;font-size:7.0px;line-height:7.0px;color:#111;white-space:nowrap;text-align:right;transform:scaleX(0.8125);transform-origin:100% 50%;">0.00</div>
<div style="position:absolute;right:178.19999999999993px;top:446.74px;font-size:7.0px;line-height:7.0px;color:#111;white-space:nowrap;text-align:right;transform:scaleX(0.8125);transform-origin:100% 50%;">-302.52</div>
<div style="position:absolute;right:13.799999999999955px;top:446.74px;font-size:7.0px;line-height:7.0px;color:#111;white-space:nowrap;text-align:right;transform:scaleX(0.93);transform-origin:100% 50%;">memberforex.com[sl]</div>
<div style="position:absolute;left:77.6px;top:444.14px;width:0.8px;height:10.64px;background:#dcdcdc;"></div>
<div style="position:absolute;left:196.2px;top:444.14px;width:0.8px;height:10.64px;background:#dcdcdc;"></div>
<div style="position:absolute;left:249.79999999999998px;top:444.14px;width:0.8px;height:10.64px;background:#dcdcdc;"></div>
<div style="position:absolute;left:291.90000000000003px;top:444.14px;width:0.8px;height:10.64px;background:#dcdcdc;"></div>
<div style="position:absolute;left:345.90000000000003px;top:444.14px;width:0.8px;height:10.64px;background:#dcdcdc;"></div>
<div style="position:absolute;left:400.3px;top:444.14px;width:0.8px;height:10.64px;background:#dcdcdc;"></div>
<div style="position:absolute;left:454.1px;top:444.14px;width:0.8px;height:10.64px;background:#dcdcdc;"></div>
<div style="position:absolute;left:508.20000000000005px;top:444.14px;width:0.8px;height:10.64px;background:#dcdcdc;"></div>
<div style="position:absolute;left:626.8000000000001px;top:444.14px;width:0.8px;height:10.64px;background:#dcdcdc;"></div>
<div style="position:absolute;left:680.4px;top:444.14px;width:0.8px;height:10.64px;background:#dcdcdc;"></div>
<div style="position:absolute;left:734.2px;top:444.14px;width:0.8px;height:10.64px;background:#dcdcdc;"></div>
<div style="position:absolute;left:788.0px;top:444.14px;width:0.8px;height:10.64px;background:#dcdcdc;"></div>
<div style="position:absolute;left:847.2px;top:444.14px;width:0.8px;height:10.64px;background:#dcdcdc;"></div>
<div style="position:absolute;left:8.3px;top:454.78px;width:1003.7px;height:10.64px;background:#e9e9e9;"></div>
<div style="position:absolute;left:401.2px;top:455.78px;width:51.90000000000001px;height:8.84px;background:#ffa0a0;"></div>
<div style="position:absolute;right:829.2px;top:457.38px;font-size:7.0px;line-height:7.0px;color:#111;white-space:nowrap;text-align:right;transform:scaleX(0.8125);transform-origin:100% 50%;">2025.04.20 23:06:55</div>
<div style="position:absolute;right:775.6px;top:457.38px;font-size:7.0px;line-height:7.0px;color:#111;white-space:nowrap;text-align:right;transform:scaleX(0.93);transform-origin:100% 50%;">sell</div>
<div style="position:absolute;right:733.5px;top:457.38px;font-size:7.0px;line-height:7.0px;color:#111;white-space:nowrap;text-align:right;transform:scaleX(0.8125);transform-origin:100% 50%;">79.98</div>
<div style="position:absolute;right:679.5px;top:457.38px;font-size:7.0px;line-height:7.0px;color:#111;white-space:nowrap;text-align:right;transform:scaleX(0.93);transform-origin:100% 50%;">btcusdp</div>
<div style="position:absolute;right:625.1px;top:457.38px;font-size:7.0px;line-height:7.0px;color:#111;white-space:nowrap;text-align:right;transform:scaleX(0.8125);transform-origin:100% 50%;">84866.30</div>
<div style="position:absolute;right:571.3px;top:457.38px;font-size:7.0px;line-height:7.0px;color:#111;white-space:nowrap;text-align:right;transform:scaleX(0.8125);transform-origin:100% 50%;">84855.50</div>
<div style="position:absolute;right:517.2px;top:457.38px;font-size:7.0px;line-height:7.0px;color:#111;white-space:nowrap;text-align:right;transform:scaleX(0.8125);transform-origin:100% 50%;">84251.69</div>
<div style="position:absolute;right:398.5999999999999px;top:457.38px;font-size:7.0px;line-height:7.0px;color:#111;white-space:nowrap;text-align:right;transform:scaleX(0.8125);transform-origin:100% 50%;">2025.04.20 23:07:04</div>
<div style="position:absolute;right:345.0px;top:457.38px;font-size:7.0px;line-height:7.0px;color:#111;white-space:nowrap;text-align:right;transform:scaleX(0.8125);transform-origin:100% 50%;">84855.50</div>
<div style="position:absolute;right:291.19999999999993px;top:457.38px;font-size:7.0px;line-height:7.0px;color:#111;white-space:nowrap;text-align:right;transform:scaleX(0.8125);transform-origin:100% 50%;">-319.92</div>
<div style="position:absolute;right:237.39999999999998px;top:457.38px;font-size:7.0px;line-height:7.0px;color:#111;white-space:nowrap;text-align:right;transform:scaleX(0.8125);transform-origin:100% 50%;">0.00</div>
<div style="position:absolute;right:178.19999999999993px;top:457.38px;font-size:7.0px;line-height:7.0px;color:#111;white-space:nowrap;text-align:right;transform:scaleX(0.8125);transform-origin:100% 50%;">863.78</div>
<div style="position:absolute;right:13.799999999999955px;top:457.38px;font-size:7.0px;line-height:7.0px;color:#111;white-space:nowrap;text-align:right;transform:scaleX(0.93);transform-origin:100% 50%;">memberforex.com[sl]</div>
<div style="position:absolute;left:77.6px;top:454.78px;width:0.8px;height:10.64px;background:#dcdcdc;"></div>
<div style="position:absolute;left:196.2px;top:454.78px;width:0.8px;height:10.64px;background:#dcdcdc;"></div>
<div style="position:absolute;left:249.79999999999998px;top:454.78px;width:0.8px;height:10.64px;background:#dcdcdc;"></div>
<div style="position:absolute;left:291.90000000000003px;top:454.78px;width:0.8px;height:10.64px;background:#dcdcdc;"></div>
<div style="position:absolute;left:345.90000000000003px;top:454.78px;width:0.8px;height:10.64px;background:#dcdcdc;"></div>
<div style="position:absolute;left:400.3px;top:454.78px;width:0.8px;height:10.64px;background:#dcdcdc;"></div>
<div style="position:absolute;left:454.1px;top:454.78px;width:0.8px;height:10.64px;background:#dcdcdc;"></div>
<div style="position:absolute;left:508.20000000000005px;top:454.78px;width:0.8px;height:10.64px;background:#dcdcdc;"></div>
<div style="position:absolute;left:626.8000000000001px;top:454.78px;width:0.8px;height:10.64px;background:#dcdcdc;"></div>
<div style="position:absolute;left:680.4px;top:454.78px;width:0.8px;height:10.64px;background:#dcdcdc;"></div>
<div style="position:absolute;left:734.2px;top:454.78px;width:0.8px;height:10.64px;background:#dcdcdc;"></div>
<div style="position:absolute;left:788.0px;top:454.78px;width:0.8px;height:10.64px;background:#dcdcdc;"></div>
<div style="position:absolute;left:847.2px;top:454.78px;width:0.8px;height:10.64px;background:#dcdcdc;"></div>
<div style="position:absolute;left:8.3px;top:465.41999999999996px;width:1003.7px;height:10.64px;background:#ffffff;"></div>
<div style="position:absolute;left:401.2px;top:466.41999999999996px;width:51.90000000000001px;height:8.84px;background:#ffa0a0;"></div>
<div style="position:absolute;right:829.2px;top:468.02px;font-size:7.0px;line-height:7.0px;color:#111;white-space:nowrap;text-align:right;transform:scaleX(0.8125);transform-origin:100% 50%;">2025.04.20 23:07:13</div>
<div style="position:absolute;right:775.6px;top:468.02px;font-size:7.0px;line-height:7.0px;color:#111;white-space:nowrap;text-align:right;transform:scaleX(0.93);transform-origin:100% 50%;">sell</div>
<div style="position:absolute;right:733.5px;top:468.02px;font-size:7.0px;line-height:7.0px;color:#111;white-space:nowrap;text-align:right;transform:scaleX(0.8125);transform-origin:100% 50%;">80.03</div>
<div style="position:absolute;right:679.5px;top:468.02px;font-size:7.0px;line-height:7.0px;color:#111;white-space:nowrap;text-align:right;transform:scaleX(0.93);transform-origin:100% 50%;">btcusdp</div>
<div style="position:absolute;right:625.1px;top:468.02px;font-size:7.0px;line-height:7.0px;color:#111;white-space:nowrap;text-align:right;transform:scaleX(0.8125);transform-origin:100% 50%;">84879.30</div>
<div style="position:absolute;right:571.3px;top:468.02px;font-size:7.0px;line-height:7.0px;color:#111;white-space:nowrap;text-align:right;transform:scaleX(0.8125);transform-origin:100% 50%;">84851.60</div>
<div style="position:absolute;right:517.2px;top:468.02px;font-size:7.0px;line-height:7.0px;color:#111;white-space:nowrap;text-align:right;transform:scaleX(0.8125);transform-origin:100% 50%;">84247.79</div>
<div style="position:absolute;right:398.5999999999999px;top:468.02px;font-size:7.0px;line-height:7.0px;color:#111;white-space:nowrap;text-align:right;transform:scaleX(0.8125);transform-origin:100% 50%;">2025.04.20 23:07:30</div>
<div style="position:absolute;right:345.0px;top:468.02px;font-size:7.0px;line-height:7.0px;color:#111;white-space:nowrap;text-align:right;transform:scaleX(0.8125);transform-origin:100% 50%;">84851.60</div>
<div style="position:absolute;right:291.19999999999993px;top:468.02px;font-size:7.0px;line-height:7.0px;color:#111;white-space:nowrap;text-align:right;transform:scaleX(0.8125);transform-origin:100% 50%;">-320.12</div>
<div style="position:absolute;right:237.39999999999998px;top:468.02px;font-size:7.0px;line-height:7.0px;color:#111;white-space:nowrap;text-align:right;transform:scaleX(0.8125);transform-origin:100% 50%;">0.00</div>
<div style="position:absolute;right:178.19999999999993px;top:468.02px;font-size:7.0px;line-height:7.0px;color:#111;white-space:nowrap;text-align:right;transform:scaleX(0.8125);transform-origin:100% 50%;">2 216.83</div>
<div style="position:absolute;right:13.799999999999955px;top:468.02px;font-size:7.0px;line-height:7.0px;color:#111;white-space:nowrap;text-align:right;transform:scaleX(0.93);transform-origin:100% 50%;">memberforex.com[sl]</div>
<div style="position:absolute;left:77.6px;top:465.41999999999996px;width:0.8px;height:10.64px;background:#dcdcdc;"></div>
<div style="position:absolute;left:196.2px;top:465.41999999999996px;width:0.8px;height:10.64px;background:#dcdcdc;"></div>
<div style="position:absolute;left:249.79999999999998px;top:465.41999999999996px;width:0.8px;height:10.64px;background:#dcdcdc;"></div>
<div style="position:absolute;left:291.90000000000003px;top:465.41999999999996px;width:0.8px;height:10.64px;background:#dcdcdc;"></div>
<div style="position:absolute;left:345.90000000000003px;top:465.41999999999996px;width:0.8px;height:10.64px;background:#dcdcdc;"></div>
<div style="position:absolute;left:400.3px;top:465.41999999999996px;width:0.8px;height:10.64px;background:#dcdcdc;"></div>
<div style="position:absolute;left:454.1px;top:465.41999999999996px;width:0.8px;height:10.64px;background:#dcdcdc;"></div>
<div style="position:absolute;left:508.20000000000005px;top:465.41999999999996px;width:0.8px;height:10.64px;background:#dcdcdc;"></div>
<div style="position:absolute;left:626.8000000000001px;top:465.41999999999996px;width:0.8px;height:10.64px;background:#dcdcdc;"></div>
<div style="position:absolute;left:680.4px;top:465.41999999999996px;width:0.8px;height:10.64px;background:#dcdcdc;"></div>
<div style="position:absolute;left:734.2px;top:465.41999999999996px;width:0.8px;height:10.64px;background:#dcdcdc;"></div>
<div style="position:absolute;left:788.0px;top:465.41999999999996px;width:0.8px;height:10.64px;background:#dcdcdc;"></div>
<div style="position:absolute;left:847.2px;top:465.41999999999996px;width:0.8px;height:10.64px;background:#dcdcdc;"></div>
<div style="position:absolute;left:8.3px;top:476.06px;width:1003.7px;height:10.64px;background:#e9e9e9;"></div>
<div style="position:absolute;left:401.2px;top:477.06px;width:51.90000000000001px;height:8.84px;background:#ffa0a0;"></div>
<div style="position:absolute;right:829.2px;top:478.66px;font-size:7.0px;line-height:7.0px;color:#111;white-space:nowrap;text-align:right;transform:scaleX(0.8125);transform-origin:100% 50%;">2025.04.20 23:07:35</div>
<div style="position:absolute;right:775.6px;top:478.66px;font-size:7.0px;line-height:7.0px;color:#111;white-space:nowrap;text-align:right;transform:scaleX(0.93);transform-origin:100% 50%;">sell</div>
<div style="position:absolute;right:733.5px;top:478.66px;font-size:7.0px;line-height:7.0px;color:#111;white-space:nowrap;text-align:right;transform:scaleX(0.8125);transform-origin:100% 50%;">80.22</div>
<div style="position:absolute;right:679.5px;top:478.66px;font-size:7.0px;line-height:7.0px;color:#111;white-space:nowrap;text-align:right;transform:scaleX(0.93);transform-origin:100% 50%;">btcusdp</div>
<div style="position:absolute;right:625.1px;top:478.66px;font-size:7.0px;line-height:7.0px;color:#111;white-space:nowrap;text-align:right;transform:scaleX(0.8125);transform-origin:100% 50%;">84884.50</div>
<div style="position:absolute;right:571.3px;top:478.66px;font-size:7.0px;line-height:7.0px;color:#111;white-space:nowrap;text-align:right;transform:scaleX(0.8125);transform-origin:100% 50%;">84870.70</div>
<div style="position:absolute;right:517.2px;top:478.66px;font-size:7.0px;line-height:7.0px;color:#111;white-space:nowrap;text-align:right;transform:scaleX(0.8125);transform-origin:100% 50%;">84266.89</div>
<div style="position:absolute;right:398.5999999999999px;top:478.66px;font-size:7.0px;line-height:7.0px;color:#111;white-space:nowrap;text-align:right;transform:scaleX(0.8125);transform-origin:100% 50%;">2025.04.20 23:07:46</div>
<div style="position:absolute;right:345.0px;top:478.66px;font-size:7.0px;line-height:7.0px;color:#111;white-space:nowrap;text-align:right;transform:scaleX(0.8125);transform-origin:100% 50%;">84870.70</div>
<div style="position:absolute;right:291.19999999999993px;top:478.66px;font-size:7.0px;line-height:7.0px;color:#111;white-space:nowrap;text-align:right;transform:scaleX(0.8125);transform-origin:100% 50%;">-320.88</div>
<div style="position:absolute;right:237.39999999999998px;top:478.66px;font-size:7.0px;line-height:7.0px;color:#111;white-space:nowrap;text-align:right;transform:scaleX(0.8125);transform-origin:100% 50%;">0.00</div>
<div style="position:absolute;right:178.19999999999993px;top:478.66px;font-size:7.0px;line-height:7.0px;color:#111;white-space:nowrap;text-align:right;transform:scaleX(0.8125);transform-origin:100% 50%;">1 107.04</div>
<div style="position:absolute;right:13.799999999999955px;top:478.66px;font-size:7.0px;line-height:7.0px;color:#111;white-space:nowrap;text-align:right;transform:scaleX(0.93);transform-origin:100% 50%;">memberforex.com[sl]</div>
<div style="position:absolute;left:77.6px;top:476.06px;width:0.8px;height:10.64px;background:#dcdcdc;"></div>
<div style="position:absolute;left:196.2px;top:476.06px;width:0.8px;height:10.64px;background:#dcdcdc;"></div>
<div style="position:absolute;left:249.79999999999998px;top:476.06px;width:0.8px;height:10.64px;background:#dcdcdc;"></div>
<div style="position:absolute;left:291.90000000000003px;top:476.06px;width:0.8px;height:10.64px;background:#dcdcdc;"></div>
<div style="position:absolute;left:345.90000000000003px;top:476.06px;width:0.8px;height:10.64px;background:#dcdcdc;"></div>
<div style="position:absolute;left:400.3px;top:476.06px;width:0.8px;height:10.64px;background:#dcdcdc;"></div>
<div style="position:absolute;left:454.1px;top:476.06px;width:0.8px;height:10.64px;background:#dcdcdc;"></div>
<div style="position:absolute;left:508.20000000000005px;top:476.06px;width:0.8px;height:10.64px;background:#dcdcdc;"></div>
<div style="position:absolute;left:626.8000000000001px;top:476.06px;width:0.8px;height:10.64px;background:#dcdcdc;"></div>
<div style="position:absolute;left:680.4px;top:476.06px;width:0.8px;height:10.64px;background:#dcdcdc;"></div>
<div style="position:absolute;left:734.2px;top:476.06px;width:0.8px;height:10.64px;background:#dcdcdc;"></div>
<div style="position:absolute;left:788.0px;top:476.06px;width:0.8px;height:10.64px;background:#dcdcdc;"></div>
<div style="position:absolute;left:847.2px;top:476.06px;width:0.8px;height:10.64px;background:#dcdcdc;"></div>
<div style="position:absolute;left:8.3px;top:486.7px;width:1003.7px;height:10.64px;background:#ffffff;"></div>
<div style="position:absolute;left:401.2px;top:487.7px;width:51.90000000000001px;height:8.84px;background:#ffa0a0;"></div>
<div style="position:absolute;right:829.2px;top:489.3px;font-size:7.0px;line-height:7.0px;color:#111;white-space:nowrap;text-align:right;transform:scaleX(0.8125);transform-origin:100% 50%;">2025.04.20 23:07:52</div>
<div style="position:absolute;right:775.6px;top:489.3px;font-size:7.0px;line-height:7.0px;color:#111;white-space:nowrap;text-align:right;transform:scaleX(0.93);transform-origin:100% 50%;">sell</div>
<div style="position:absolute;right:733.5px;top:489.3px;font-size:7.0px;line-height:7.0px;color:#111;white-space:nowrap;text-align:right;transform:scaleX(0.8125);transform-origin:100% 50%;">80.29</div>
<div style="position:absolute;right:679.5px;top:489.3px;font-size:7.0px;line-height:7.0px;color:#111;white-space:nowrap;text-align:right;transform:scaleX(0.93);transform-origin:100% 50%;">btcusdp</div>
<div style="position:absolute;right:625.1px;top:489.3px;font-size:7.0px;line-height:7.0px;color:#111;white-space:nowrap;text-align:right;transform:scaleX(0.8125);transform-origin:100% 50%;">84890.20</div>
<div style="position:absolute;right:571.3px;top:489.3px;font-size:7.0px;line-height:7.0px;color:#111;white-space:nowrap;text-align:right;transform:scaleX(0.8125);transform-origin:100% 50%;">84882.70</div>
<div style="position:absolute;right:517.2px;top:489.3px;font-size:7.0px;line-height:7.0px;color:#111;white-space:nowrap;text-align:right;transform:scaleX(0.8125);transform-origin:100% 50%;">84278.89</div>
<div style="position:absolute;right:398.5999999999999px;top:489.3px;font-size:7.0px;line-height:7.0px;color:#111;white-space:nowrap;text-align:right;transform:scaleX(0.8125);transform-origin:100% 50%;">2025.04.20 23:07:58</div>
<div style="position:absolute;right:345.0px;top:489.3px;font-size:7.0px;line-height:7.0px;color:#111;white-space:nowrap;text-align:right;transform:scaleX(0.8125);transform-origin:100% 50%;">84882.70</div>
<div style="position:absolute;right:291.19999999999993px;top:489.3px;font-size:7.0px;line-height:7.0px;color:#111;white-space:nowrap;text-align:right;transform:scaleX(0.8125);transform-origin:100% 50%;">-321.16</div>
<div style="position:absolute;right:237.39999999999998px;top:489.3px;font-size:7.0px;line-height:7.0px;color:#111;white-space:nowrap;text-align:right;transform:scaleX(0.8125);transform-origin:100% 50%;">0.00</div>
<div style="position:absolute;right:178.19999999999993px;top:489.3px;font-size:7.0px;line-height:7.0px;color:#111;white-space:nowrap;text-align:right;transform:scaleX(0.8125);transform-origin:100% 50%;">602.18</div>
<div style="position:absolute;right:13.799999999999955px;top:489.3px;font-size:7.0px;line-height:7.0px;color:#111;white-space:nowrap;text-align:right;transform:scaleX(0.93);transform-origin:100% 50%;">memberforex.com[sl]</div>
<div style="position:absolute;left:77.6px;top:486.7px;width:0.8px;height:10.64px;background:#dcdcdc;"></div>
<div style="position:absolute;left:196.2px;top:486.7px;width:0.8px;height:10.64px;background:#dcdcdc;"></div>
<div style="position:absolute;left:249.79999999999998px;top:486.7px;width:0.8px;height:10.64px;background:#dcdcdc;"></div>
<div style="position:absolute;left:291.90000000000003px;top:486.7px;width:0.8px;height:10.64px;background:#dcdcdc;"></div>
<div style="position:absolute;left:345.90000000000003px;top:486.7px;width:0.8px;height:10.64px;background:#dcdcdc;"></div>
<div style="position:absolute;left:400.3px;top:486.7px;width:0.8px;height:10.64px;background:#dcdcdc;"></div>
<div style="position:absolute;left:454.1px;top:486.7px;width:0.8px;height:10.64px;background:#dcdcdc;"></div>
<div style="position:absolute;left:508.20000000000005px;top:486.7px;width:0.8px;height:10.64px;background:#dcdcdc;"></div>
<div style="position:absolute;left:626.8000000000001px;top:486.7px;width:0.8px;height:10.64px;background:#dcdcdc;"></div>
<div style="position:absolute;left:680.4px;top:486.7px;width:0.8px;height:10.64px;background:#dcdcdc;"></div>
<div style="position:absolute;left:734.2px;top:486.7px;width:0.8px;height:10.64px;background:#dcdcdc;"></div>
<div style="position:absolute;left:788.0px;top:486.7px;width:0.8px;height:10.64px;background:#dcdcdc;"></div>
<div style="position:absolute;left:847.2px;top:486.7px;width:0.8px;height:10.64px;background:#dcdcdc;"></div>
<div style="position:absolute;left:8.3px;top:497.34px;width:1003.7px;height:10.64px;background:#e9e9e9;"></div>
<div style="position:absolute;left:401.2px;top:498.34px;width:51.90000000000001px;height:8.84px;background:#ffa0a0;"></div>
<div style="position:absolute;right:829.2px;top:499.94px;font-size:7.0px;line-height:7.0px;color:#111;white-space:nowrap;text-align:right;transform:scaleX(0.8125);transform-origin:100% 50%;">2025.04.20 23:09:00</div>
<div style="position:absolute;right:775.6px;top:499.94px;font-size:7.0px;line-height:7.0px;color:#111;white-space:nowrap;text-align:right;transform:scaleX(0.93);transform-origin:100% 50%;">sell</div>
<div style="position:absolute;right:733.5px;top:499.94px;font-size:7.0px;line-height:7.0px;color:#111;white-space:nowrap;text-align:right;transform:scaleX(0.8125);transform-origin:100% 50%;">80.32</div>
<div style="position:absolute;right:679.5px;top:499.94px;font-size:7.0px;line-height:7.0px;color:#111;white-space:nowrap;text-align:right;transform:scaleX(0.93);transform-origin:100% 50%;">btcusdp</div>
<div style="position:absolute;right:625.1px;top:499.94px;font-size:7.0px;line-height:7.0px;color:#111;white-space:nowrap;text-align:right;transform:scaleX(0.8125);transform-origin:100% 50%;">84870.80</div>
<div style="position:absolute;right:571.3px;top:499.94px;font-size:7.0px;line-height:7.0px;color:#111;white-space:nowrap;text-align:right;transform:scaleX(0.8125);transform-origin:100% 50%;">84845.60</div>
<div style="position:absolute;right:517.2px;top:499.94px;font-size:7.0px;line-height:7.0px;color:#111;white-space:nowrap;text-align:right;transform:scaleX(0.8125);transform-origin:100% 50%;">84241.79</div>
<div style="position:absolute;right:398.5999999999999px;top:499.94px;font-size:7.0px;line-height:7.0px;color:#111;white-space:nowrap;text-align:right;transform:scaleX(0.8125);transform-origin:100% 50%;">2025.04.20 23:09:08</div>
<div style="position:absolute;right:345.0px;top:499.94px;font-size:7.0px;line-height:7.0px;color:#111;white-space:nowrap;text-align:right;transform:scaleX(0.8125);transform-origin:100% 50%;">84845.60</div>
<div style="position:absolute;right:291.19999999999993px;top:499.94px;font-size:7.0px;line-height:7.0px;color:#111;white-space:nowrap;text-align:right;transform:scaleX(0.8125);transform-origin:100% 50%;">-321.28</div>
<div style="position:absolute;right:237.39999999999998px;top:499.94px;font-size:7.0px;line-height:7.0px;color:#111;white-space:nowrap;text-align:right;transform:scaleX(0.8125);transform-origin:100% 50%;">0.00</div>
<div style="position:absolute;right:178.19999999999993px;top:499.94px;font-size:7.0px;line-height:7.0px;color:#111;white-space:nowrap;text-align:right;transform:scaleX(0.8125);transform-origin:100% 50%;">2 024.06</div>
<div style="position:absolute;right:13.799999999999955px;top:499.94px;font-size:7.0px;line-height:7.0px;color:#111;white-space:nowrap;text-align:right;transform:scaleX(0.93);transform-origin:100% 50%;">memberforex.com[sl]</div>
<div style="position:absolute;left:77.6px;top:497.34px;width:0.8px;height:10.64px;background:#dcdcdc;"></div>
<div style="position:absolute;left:196.2px;top:497.34px;width:0.8px;height:10.64px;background:#dcdcdc;"></div>
<div style="position:absolute;left:249.79999999999998px;top:497.34px;width:0.8px;height:10.64px;background:#dcdcdc;"></div>
<div style="position:absolute;left:291.90000000000003px;top:497.34px;width:0.8px;height:10.64px;background:#dcdcdc;"></div>
<div style="position:absolute;left:345.90000000000003px;top:497.34px;width:0.8px;height:10.64px;background:#dcdcdc;"></div>
<div style="position:absolute;left:400.3px;top:497.34px;width:0.8px;height:10.64px;background:#dcdcdc;"></div>
<div style="position:absolute;left:454.1px;top:497.34px;width:0.8px;height:10.64px;background:#dcdcdc;"></div>
<div style="position:absolute;left:508.20000000000005px;top:497.34px;width:0.8px;height:10.64px;background:#dcdcdc;"></div>
<div style="position:absolute;left:626.8000000000001px;top:497.34px;width:0.8px;height:10.64px;background:#dcdcdc;"></div>
<div style="position:absolute;left:680.4px;top:497.34px;width:0.8px;height:10.64px;background:#dcdcdc;"></div>
<div style="position:absolute;left:734.2px;top:497.34px;width:0.8px;height:10.64px;background:#dcdcdc;"></div>
<div style="position:absolute;left:788.0px;top:497.34px;width:0.8px;height:10.64px;background:#dcdcdc;"></div>
<div style="position:absolute;left:847.2px;top:497.34px;width:0.8px;height:10.64px;background:#dcdcdc;"></div>
<div style="position:absolute;left:8.3px;top:507.98px;width:1003.7px;height:10.64px;background:#ffffff;"></div>
<div style="position:absolute;left:401.2px;top:508.98px;width:51.90000000000001px;height:8.84px;background:#ffa0a0;"></div>
<div style="position:absolute;right:829.2px;top:510.58000000000004px;font-size:7.0px;line-height:7.0px;color:#111;white-space:nowrap;text-align:right;transform:scaleX(0.8125);transform-origin:100% 50%;">2025.04.20 23:08:23</div>
<div style="position:absolute;right:775.6px;top:510.58000000000004px;font-size:7.0px;line-height:7.0px;color:#111;white-space:nowrap;text-align:right;transform:scaleX(0.93);transform-origin:100% 50%;">sell</div>
<div style="position:absolute;right:733.5px;top:510.58000000000004px;font-size:7.0px;line-height:7.0px;color:#111;white-space:nowrap;text-align:right;transform:scaleX(0.8125);transform-origin:100% 50%;">80.32</div>
<div style="position:absolute;right:679.5px;top:510.58000000000004px;font-size:7.0px;line-height:7.0px;color:#111;white-space:nowrap;text-align:right;transform:scaleX(0.93);transform-origin:100% 50%;">btcusdp</div>
<div style="position:absolute;right:625.1px;top:510.58000000000004px;font-size:7.0px;line-height:7.0px;color:#111;white-space:nowrap;text-align:right;transform:scaleX(0.8125);transform-origin:100% 50%;">84880.40</div>
<div style="position:absolute;right:571.3px;top:510.58000000000004px;font-size:7.0px;line-height:7.0px;color:#111;white-space:nowrap;text-align:right;transform:scaleX(0.8125);transform-origin:100% 50%;">84871.60</div>
<div style="position:absolute;right:517.2px;top:510.58000000000004px;font-size:7.0px;line-height:7.0px;color:#111;white-space:nowrap;text-align:right;transform:scaleX(0.8125);transform-origin:100% 50%;">84267.79</div>
<div style="position:absolute;right:398.5999999999999px;top:510.58000000000004px;font-size:7.0px;line-height:7.0px;color:#111;white-space:nowrap;text-align:right;transform:scaleX(0.8125);transform-origin:100% 50%;">2025.04.20 23:08:25</div>
<div style="position:absolute;right:345.0px;top:510.58000000000004px;font-size:7.0px;line-height:7.0px;color:#111;white-space:nowrap;text-align:right;transform:scaleX(0.8125);transform-origin:100% 50%;">84871.60</div>
<div style="position:absolute;right:291.19999999999993px;top:510.58000000000004px;font-size:7.0px;line-height:7.0px;color:#111;white-space:nowrap;text-align:right;transform:scaleX(0.8125);transform-origin:100% 50%;">-321.28</div>
<div style="position:absolute;right:237.39999999999998px;top:510.58000000000004px;font-size:7.0px;line-height:7.0px;color:#111;white-space:nowrap;text-align:right;transform:scaleX(0.8125);transform-origin:100% 50%;">0.00</div>
<div style="position:absolute;right:178.19999999999993px;top:510.58000000000004px;font-size:7.0px;line-height:7.0px;color:#111;white-space:nowrap;text-align:right;transform:scaleX(0.8125);transform-origin:100% 50%;">706.82</div>
<div style="position:absolute;right:13.799999999999955px;top:510.58000000000004px;font-size:7.0px;line-height:7.0px;color:#111;white-space:nowrap;text-align:right;transform:scaleX(0.93);transform-origin:100% 50%;">memberforex.com[sl]</div>
<div style="position:absolute;left:77.6px;top:507.98px;width:0.8px;height:10.64px;background:#dcdcdc;"></div>
<div style="position:absolute;left:196.2px;top:507.98px;width:0.8px;height:10.64px;background:#dcdcdc;"></div>
<div style="position:absolute;left:249.79999999999998px;top:507.98px;width:0.8px;height:10.64px;background:#dcdcdc;"></div>
<div style="position:absolute;left:291.90000000000003px;top:507.98px;width:0.8px;height:10.64px;background:#dcdcdc;"></div>
<div style="position:absolute;left:345.90000000000003px;top:507.98px;width:0.8px;height:10.64px;background:#dcdcdc;"></div>
<div style="position:absolute;left:400.3px;top:507.98px;width:0.8px;height:10.64px;background:#dcdcdc;"></div>
<div style="position:absolute;left:454.1px;top:507.98px;width:0.8px;height:10.64px;background:#dcdcdc;"></div>
<div style="position:absolute;left:508.20000000000005px;top:507.98px;width:0.8px;height:10.64px;background:#dcdcdc;"></div>
<div style="position:absolute;left:626.8000000000001px;top:507.98px;width:0.8px;height:10.64px;background:#dcdcdc;"></div>
<div style="position:absolute;left:680.4px;top:507.98px;width:0.8px;height:10.64px;background:#dcdcdc;"></div>
<div style="position:absolute;left:734.2px;top:507.98px;width:0.8px;height:10.64px;background:#dcdcdc;"></div>
<div style="position:absolute;left:788.0px;top:507.98px;width:0.8px;height:10.64px;background:#dcdcdc;"></div>
<div style="position:absolute;left:847.2px;top:507.98px;width:0.8px;height:10.64px;background:#dcdcdc;"></div>
<div style="position:absolute;left:8.3px;top:518.62px;width:1003.7px;height:10.64px;background:#e9e9e9;"></div>
<div style="position:absolute;left:401.2px;top:519.62px;width:51.90000000000001px;height:8.84px;background:#ffa0a0;"></div>
<div style="position:absolute;right:829.2px;top:521.22px;font-size:7.0px;line-height:7.0px;color:#111;white-space:nowrap;text-align:right;transform:scaleX(0.8125);transform-origin:100% 50%;">2025.04.20 23:08:43</div>
<div style="position:absolute;right:775.6px;top:521.22px;font-size:7.0px;line-height:7.0px;color:#111;white-space:nowrap;text-align:right;transform:scaleX(0.93);transform-origin:100% 50%;">sell</div>
<div style="position:absolute;right:733.5px;top:521.22px;font-size:7.0px;line-height:7.0px;color:#111;white-space:nowrap;text-align:right;transform:scaleX(0.8125);transform-origin:100% 50%;">80.36</div>
<div style="position:absolute;right:679.5px;top:521.22px;font-size:7.0px;line-height:7.0px;color:#111;white-space:nowrap;text-align:right;transform:scaleX(0.93);transform-origin:100% 50%;">btcusdp</div>
<div style="position:absolute;right:625.1px;top:521.22px;font-size:7.0px;line-height:7.0px;color:#111;white-space:nowrap;text-align:right;transform:scaleX(0.8125);transform-origin:100% 50%;">84875.80</div>
<div style="position:absolute;right:571.3px;top:521.22px;font-size:7.0px;line-height:7.0px;color:#111;white-space:nowrap;text-align:right;transform:scaleX(0.8125);transform-origin:100% 50%;">84877.00</div>
<div style="position:absolute;right:517.2px;top:521.22px;font-size:7.0px;line-height:7.0px;color:#111;white-space:nowrap;text-align:right;transform:scaleX(0.8125);transform-origin:100% 50%;">84273.19</div>
<div style="position:absolute;right:398.5999999999999px;top:521.22px;font-size:7.0px;line-height:7.0px;color:#111;white-space:nowrap;text-align:right;transform:scaleX(0.8125);transform-origin:100% 50%;">2025.04.20 23:08:57</div>
<div style="position:absolute;right:345.0px;top:521.22px;font-size:7.0px;line-height:7.0px;color:#111;white-space:nowrap;text-align:right;transform:scaleX(0.8125);transform-origin:100% 50%;">84877.00</div>
<div style="position:absolute;right:291.19999999999993px;top:521.22px;font-size:7.0px;line-height:7.0px;color:#111;white-space:nowrap;text-align:right;transform:scaleX(0.8125);transform-origin:100% 50%;">-321.44</div>
<div style="position:absolute;right:237.39999999999998px;top:521.22px;font-size:7.0px;line-height:7.0px;color:#111;white-space:nowrap;text-align:right;transform:scaleX(0.8125);transform-origin:100% 50%;">0.00</div>
<div style="position:absolute;right:178.19999999999993px;top:521.22px;font-size:7.0px;line-height:7.0px;color:#111;white-space:nowrap;text-align:right;transform:scaleX(0.8125);transform-origin:100% 50%;">-96.43</div>
<div style="position:absolute;right:13.799999999999955px;top:521.22px;font-size:7.0px;line-height:7.0px;color:#111;white-space:nowrap;text-align:right;transform:scaleX(0.93);transform-origin:100% 50%;">memberforex.com[sl]</div>
<div style="position:absolute;left:77.6px;top:518.62px;width:0.8px;height:10.64px;background:#dcdcdc;"></div>
<div style="position:absolute;left:196.2px;top:518.62px;width:0.8px;height:10.64px;background:#dcdcdc;"></div>
<div style="position:absolute;left:249.79999999999998px;top:518.62px;width:0.8px;height:10.64px;background:#dcdcdc;"></div>
<div style="position:absolute;left:291.90000000000003px;top:518.62px;width:0.8px;height:10.64px;background:#dcdcdc;"></div>
<div style="position:absolute;left:345.90000000000003px;top:518.62px;width:0.8px;height:10.64px;background:#dcdcdc;"></div>
<div style="position:absolute;left:400.3px;top:518.62px;width:0.8px;height:10.64px;background:#dcdcdc;"></div>
<div style="position:absolute;left:454.1px;top:518.62px;width:0.8px;height:10.64px;background:#dcdcdc;"></div>
<div style="position:absolute;left:508.20000000000005px;top:518.62px;width:0.8px;height:10.64px;background:#dcdcdc;"></div>
<div style="position:absolute;left:626.8000000000001px;top:518.62px;width:0.8px;height:10.64px;background:#dcdcdc;"></div>
<div style="position:absolute;left:680.4px;top:518.62px;width:0.8px;height:10.64px;background:#dcdcdc;"></div>
<div style="position:absolute;left:734.2px;top:518.62px;width:0.8px;height:10.64px;background:#dcdcdc;"></div>
<div style="position:absolute;left:788.0px;top:518.62px;width:0.8px;height:10.64px;background:#dcdcdc;"></div>
<div style="position:absolute;left:847.2px;top:518.62px;width:0.8px;height:10.64px;background:#dcdcdc;"></div>
<div style="position:absolute;left:8.3px;top:529.26px;width:1003.7px;height:10.64px;background:#ffffff;"></div>
<div style="position:absolute;left:401.2px;top:530.26px;width:51.90000000000001px;height:8.84px;background:#ffa0a0;"></div>
<div style="position:absolute;right:829.2px;top:531.86px;font-size:7.0px;line-height:7.0px;color:#111;white-space:nowrap;text-align:right;transform:scaleX(0.8125);transform-origin:100% 50%;">2025.04.20 23:09:44</div>
<div style="position:absolute;right:775.6px;top:531.86px;font-size:7.0px;line-height:7.0px;color:#111;white-space:nowrap;text-align:right;transform:scaleX(0.93);transform-origin:100% 50%;">sell</div>
<div style="position:absolute;right:733.5px;top:531.86px;font-size:7.0px;line-height:7.0px;color:#111;white-space:nowrap;text-align:right;transform:scaleX(0.8125);transform-origin:100% 50%;">80.48</div>
<div style="position:absolute;right:679.5px;top:531.86px;font-size:7.0px;line-height:7.0px;color:#111;white-space:nowrap;text-align:right;transform:scaleX(0.93);transform-origin:100% 50%;">btcusdp</div>
<div style="position:absolute;right:625.1px;top:531.86px;font-size:7.0px;line-height:7.0px;color:#111;white-space:nowrap;text-align:right;transform:scaleX(0.8125);transform-origin:100% 50%;">84886.00</div>
<div style="position:absolute;right:571.3px;top:531.86px;font-size:7.0px;line-height:7.0px;color:#111;white-space:nowrap;text-align:right;transform:scaleX(0.8125);transform-origin:100% 50%;">84873.00</div>
<div style="position:absolute;right:517.2px;top:531.86px;font-size:7.0px;line-height:7.0px;color:#111;white-space:nowrap;text-align:right;transform:scaleX(0.8125);transform-origin:100% 50%;">84269.19</div>
<div style="position:absolute;right:398.5999999999999px;top:531.86px;font-size:7.0px;line-height:7.0px;color:#111;white-space:nowrap;text-align:right;transform:scaleX(0.8125);transform-origin:100% 50%;">2025.04.20 23:09:50</div>
<div style="position:absolute;right:345.0px;top:531.86px;font-size:7.0px;line-height:7.0px;color:#111;white-space:nowrap;text-align:right;transform:scaleX(0.8125);transform-origin:100% 50%;">84873.00</div>
<div style="position:absolute;right:291.19999999999993px;top:531.86px;font-size:7.0px;line-height:7.0px;color:#111;white-space:nowrap;text-align:right;transform:scaleX(0.8125);transform-origin:100% 50%;">-321.92</div>
<div style="position:absolute;right:237.39999999999998px;top:531.86px;font-size:7.0px;line-height:7.0px;color:#111;white-space:nowrap;text-align:right;transform:scaleX(0.8125);transform-origin:100% 50%;">0.00</div>
<div style="position:absolute;right:178.19999999999993px;top:531.86px;font-size:7.0px;line-height:7.0px;color:#111;white-space:nowrap;text-align:right;transform:scaleX(0.8125);transform-origin:100% 50%;">1 046.24</div>
<div style="position:absolute;right:13.799999999999955px;top:531.86px;font-size:7.0px;line-height:7.0px;color:#111;white-space:nowrap;text-align:right;transform:scaleX(0.93);transform-origin:100% 50%;">memberforex.com[sl]</div>
<div style="position:absolute;left:77.6px;top:529.26px;width:0.8px;height:10.64px;background:#dcdcdc;"></div>
<div style="position:absolute;left:196.2px;top:529.26px;width:0.8px;height:10.64px;background:#dcdcdc;"></div>
<div style="position:absolute;left:249.79999999999998px;top:529.26px;width:0.8px;height:10.64px;background:#dcdcdc;"></div>
<div style="position:absolute;left:291.90000000000003px;top:529.26px;width:0.8px;height:10.64px;background:#dcdcdc;"></div>
<div style="position:absolute;left:345.90000000000003px;top:529.26px;width:0.8px;height:10.64px;background:#dcdcdc;"></div>
<div style="position:absolute;left:400.3px;top:529.26px;width:0.8px;height:10.64px;background:#dcdcdc;"></div>
<div style="position:absolute;left:454.1px;top:529.26px;width:0.8px;height:10.64px;background:#dcdcdc;"></div>
<div style="position:absolute;left:508.20000000000005px;top:529.26px;width:0.8px;height:10.64px;background:#dcdcdc;"></div>
<div style="position:absolute;left:626.8000000000001px;top:529.26px;width:0.8px;height:10.64px;background:#dcdcdc;"></div>
<div style="position:absolute;left:680.4px;top:529.26px;width:0.8px;height:10.64px;background:#dcdcdc;"></div>
<div style="position:absolute;left:734.2px;top:529.26px;width:0.8px;height:10.64px;background:#dcdcdc;"></div>
<div style="position:absolute;left:788.0px;top:529.26px;width:0.8px;height:10.64px;background:#dcdcdc;"></div>
<div style="position:absolute;left:847.2px;top:529.26px;width:0.8px;height:10.64px;background:#dcdcdc;"></div>
<div style="position:absolute;left:0px;top:258.8px;width:8.3px;height:281px;background:#f0f0f0;"></div>
<div style="position:absolute;left:1.0px;top:268.6px;width:6.6px;height:282.8px;background:#b4cce6;"></div>
<svg width="8" height="8" style="position:absolute;left:0;top:260px"><path d="M2.2 2.4 L5 5.2 M5 2.4 L2.2 5.2" stroke="#222" stroke-width="0.9"/></svg>
<div style="position:absolute;left:0.8px;top:551px;font-size:7px;line-height:7px;color:#1e3c70;white-space:nowrap;transform:rotate(-90deg) scaleX(0.85);transform-origin:0 0;">Terminal</div>
<svg width="11" height="11" style="position:absolute;left:9.4px;top:274.90px"><path d="M1.3 1.2 L5.6 1.2 L7.6 3.2 L7.6 8.6 L1.3 8.6 Z" fill="#fbfbfb" stroke="#6a6a6a" stroke-width="0.8" stroke-linejoin="miter"/><path d="M5.4 1.2 L7.6 3.4 L5.4 3.4 Z" fill="#999"/><circle cx="6.7" cy="7.7" r="2.0" fill="#2a8ee0"/></svg>
<div style="position:absolute;left:20.4px;top:276.79999999999995px;font-size:6.5px;line-height:6.5px;color:#e8e0a0;white-space:nowrap;">1</div>
<div style="position:absolute;left:25.8px;top:276.4px;font-size:7.0px;line-height:7.0px;color:#111;white-space:nowrap;transform:scaleX(0.77);transform-origin:0 50%;">651166</div>
<div style="position:absolute;left:48.4px;top:276.79999999999995px;font-size:6.5px;line-height:6.5px;color:#b8d0f0;white-space:nowrap;transform:scaleX(0.5);transform-origin:0 50%;">4</div>
<svg width="11" height="11" style="position:absolute;left:9.4px;top:285.54px"><path d="M1.3 1.2 L5.6 1.2 L7.6 3.2 L7.6 8.6 L1.3 8.6 Z" fill="#fbfbfb" stroke="#6a6a6a" stroke-width="0.8" stroke-linejoin="miter"/><path d="M5.4 1.2 L7.6 3.4 L5.4 3.4 Z" fill="#999"/><circle cx="6.7" cy="7.7" r="2.0" fill="#e4421a"/></svg>
<div style="position:absolute;left:20.4px;top:287.43999999999994px;font-size:6.5px;line-height:6.5px;color:#cfe0f5;white-space:nowrap;">1</div>
<div style="position:absolute;left:25.8px;top:287.03999999999996px;font-size:7.0px;line-height:7.0px;color:#fff;white-space:nowrap;transform:scaleX(0.77);transform-origin:0 50%;">651168</div>
<div style="position:absolute;left:48.4px;top:287.43999999999994px;font-size:6.5px;line-height:6.5px;color:#cfe0f5;white-space:nowrap;transform:scaleX(0.5);transform-origin:0 50%;">4</div>
<svg width="11" height="11" style="position:absolute;left:9.4px;top:296.18px"><path d="M1.3 1.2 L5.6 1.2 L7.6 3.2 L7.6 8.6 L1.3 8.6 Z" fill="#fbfbfb" stroke="#6a6a6a" stroke-width="0.8" stroke-linejoin="miter"/><path d="M5.4 1.2 L7.6 3.4 L5.4 3.4 Z" fill="#999"/><circle cx="6.7" cy="7.7" r="2.0" fill="#e4421a"/></svg>
<div style="position:absolute;left:20.4px;top:298.0799999999999px;font-size:6.5px;line-height:6.5px;color:#e8e0a0;white-space:nowrap;">1</div>
<div style="position:absolute;left:25.8px;top:297.67999999999995px;font-size:7.0px;line-height:7.0px;color:#111;white-space:nowrap;transform:scaleX(0.77);transform-origin:0 50%;">651169</div>
<div style="position:absolute;left:48.4px;top:298.0799999999999px;font-size:6.5px;line-height:6.5px;color:#b8d0f0;white-space:nowrap;transform:scaleX(0.5);transform-origin:0 50%;">4</div>
<svg width="11" height="11" style="position:absolute;left:9.4px;top:306.82px"><path d="M1.3 1.2 L5.6 1.2 L7.6 3.2 L7.6 8.6 L1.3 8.6 Z" fill="#fbfbfb" stroke="#6a6a6a" stroke-width="0.8" stroke-linejoin="miter"/><path d="M5.4 1.2 L7.6 3.4 L5.4 3.4 Z" fill="#999"/><circle cx="6.7" cy="7.7" r="2.0" fill="#e4421a"/></svg>
<div style="position:absolute;left:20.4px;top:308.71999999999997px;font-size:6.5px;line-height:6.5px;color:#e8e0a0;white-space:nowrap;">1</div>
<div style="position:absolute;left:25.8px;top:308.32px;font-size:7.0px;line-height:7.0px;color:#111;white-space:nowrap;transform:scaleX(0.77);transform-origin:0 50%;">651170</div>
<div style="position:absolute;left:48.4px;top:308.71999999999997px;font-size:6.5px;line-height:6.5px;color:#b8d0f0;white-space:nowrap;transform:scaleX(0.5);transform-origin:0 50%;">4</div>
<svg width="11" height="11" style="position:absolute;left:9.4px;top:317.46px"><path d="M1.3 1.2 L5.6 1.2 L7.6 3.2 L7.6 8.6 L1.3 8.6 Z" fill="#fbfbfb" stroke="#6a6a6a" stroke-width="0.8" stroke-linejoin="miter"/><path d="M5.4 1.2 L7.6 3.4 L5.4 3.4 Z" fill="#999"/><circle cx="6.7" cy="7.7" r="2.0" fill="#e4421a"/></svg>
<div style="position:absolute;left:20.4px;top:319.35999999999996px;font-size:6.5px;line-height:6.5px;color:#e8e0a0;white-space:nowrap;">1</div>
<div style="position:absolute;left:25.8px;top:318.96px;font-size:7.0px;line-height:7.0px;color:#111;white-space:nowrap;transform:scaleX(0.77);transform-origin:0 50%;">651169</div>
<div style="position:absolute;left:48.4px;top:319.35999999999996px;font-size:6.5px;line-height:6.5px;color:#b8d0f0;white-space:nowrap;transform:scaleX(0.5);transform-origin:0 50%;">4</div>
<svg width="11" height="11" style="position:absolute;left:9.4px;top:328.10px"><path d="M1.3 1.2 L5.6 1.2 L7.6 3.2 L7.6 8.6 L1.3 8.6 Z" fill="#fbfbfb" stroke="#6a6a6a" stroke-width="0.8" stroke-linejoin="miter"/><path d="M5.4 1.2 L7.6 3.4 L5.4 3.4 Z" fill="#999"/><circle cx="6.7" cy="7.7" r="2.0" fill="#e4421a"/></svg>
<div style="position:absolute;left:20.4px;top:329.99999999999994px;font-size:6.5px;line-height:6.5px;color:#e8e0a0;white-space:nowrap;">1</div>
<div style="position:absolute;left:25.8px;top:329.59999999999997px;font-size:7.0px;line-height:7.0px;color:#111;white-space:nowrap;transform:scaleX(0.77);transform-origin:0 50%;">651170</div>
<div style="position:absolute;left:48.4px;top:329.99999999999994px;font-size:6.5px;line-height:6.5px;color:#b8d0f0;white-space:nowrap;transform:scaleX(0.5);transform-origin:0 50%;">4</div>
<svg width="11" height="11" style="position:absolute;left:9.4px;top:338.74px"><path d="M1.3 1.2 L5.6 1.2 L7.6 3.2 L7.6 8.6 L1.3 8.6 Z" fill="#fbfbfb" stroke="#6a6a6a" stroke-width="0.8" stroke-linejoin="miter"/><path d="M5.4 1.2 L7.6 3.4 L5.4 3.4 Z" fill="#999"/><circle cx="6.7" cy="7.7" r="2.0" fill="#e4421a"/></svg>
<div style="position:absolute;left:20.4px;top:340.64px;font-size:6.5px;line-height:6.5px;color:#e8e0a0;white-space:nowrap;">1</div>
<div style="position:absolute;left:25.8px;top:340.24px;font-size:7.0px;line-height:7.0px;color:#111;white-space:nowrap;transform:scaleX(0.77);transform-origin:0 50%;">651170</div>
<div style="position:absolute;left:48.4px;top:340.64px;font-size:6.5px;line-height:6.5px;color:#b8d0f0;white-space:nowrap;transform:scaleX(0.5);transform-origin:0 50%;">4</div>
<svg width="11" height="11" style="position:absolute;left:9.4px;top:349.38px"><path d="M1.3 1.2 L5.6 1.2 L7.6 3.2 L7.6 8.6 L1.3 8.6 Z" fill="#fbfbfb" stroke="#6a6a6a" stroke-width="0.8" stroke-linejoin="miter"/><path d="M5.4 1.2 L7.6 3.4 L5.4 3.4 Z" fill="#999"/><circle cx="6.7" cy="7.7" r="2.0" fill="#e4421a"/></svg>
<div style="position:absolute;left:20.4px;top:351.28px;font-size:6.5px;line-height:6.5px;color:#e8e0a0;white-space:nowrap;">1</div>
<div style="position:absolute;left:25.8px;top:350.88px;font-size:7.0px;line-height:7.0px;color:#111;white-space:nowrap;transform:scaleX(0.77);transform-origin:0 50%;">651170</div>
<div style="position:absolute;left:48.4px;top:351.28px;font-size:6.5px;line-height:6.5px;color:#b8d0f0;white-space:nowrap;transform:scaleX(0.5);transform-origin:0 50%;">4</div>
<svg width="11" height="11" style="position:absolute;left:9.4px;top:360.02px"><path d="M1.3 1.2 L5.6 1.2 L7.6 3.2 L7.6 8.6 L1.3 8.6 Z" fill="#fbfbfb" stroke="#6a6a6a" stroke-width="0.8" stroke-linejoin="miter"/><path d="M5.4 1.2 L7.6 3.4 L5.4 3.4 Z" fill="#999"/><circle cx="6.7" cy="7.7" r="2.0" fill="#e4421a"/></svg>
<div style="position:absolute;left:20.4px;top:361.91999999999996px;font-size:6.5px;line-height:6.5px;color:#e8e0a0;white-space:nowrap;">1</div>
<div style="position:absolute;left:25.8px;top:361.52px;font-size:7.0px;line-height:7.0px;color:#111;white-space:nowrap;transform:scaleX(0.77);transform-origin:0 50%;">651170</div>
<div style="position:absolute;left:48.4px;top:361.91999999999996px;font-size:6.5px;line-height:6.5px;color:#b8d0f0;white-space:nowrap;transform:scaleX(0.5);transform-origin:0 50%;">4</div>
<svg width="11" height="11" style="position:absolute;left:9.4px;top:370.66px"><path d="M1.3 1.2 L5.6 1.2 L7.6 3.2 L7.6 8.6 L1.3 8.6 Z" fill="#fbfbfb" stroke="#6a6a6a" stroke-width="0.8" stroke-linejoin="miter"/><path d="M5.4 1.2 L7.6 3.4 L5.4 3.4 Z" fill="#999"/><circle cx="6.7" cy="7.7" r="2.0" fill="#e4421a"/></svg>
<div style="position:absolute;left:20.4px;top:372.55999999999995px;font-size:6.5px;line-height:6.5px;color:#e8e0a0;white-space:nowrap;">1</div>
<div style="position:absolute;left:25.8px;top:372.15999999999997px;font-size:7.0px;line-height:7.0px;color:#111;white-space:nowrap;transform:scaleX(0.77);transform-origin:0 50%;">651172</div>
<div style="position:absolute;left:48.4px;top:372.55999999999995px;font-size:6.5px;line-height:6.5px;color:#b8d0f0;white-space:nowrap;transform:scaleX(0.5);transform-origin:0 50%;">4</div>
<svg width="11" height="11" style="position:absolute;left:9.4px;top:381.30px"><path d="M1.3 1.2 L5.6 1.2 L7.6 3.2 L7.6 8.6 L1.3 8.6 Z" fill="#fbfbfb" stroke="#6a6a6a" stroke-width="0.8" stroke-linejoin="miter"/><path d="M5.4 1.2 L7.6 3.4 L5.4 3.4 Z" fill="#999"/><circle cx="6.7" cy="7.7" r="2.0" fill="#e4421a"/></svg>
<div style="position:absolute;left:20.4px;top:383.19999999999993px;font-size:6.5px;line-height:6.5px;color:#e8e0a0;white-space:nowrap;">1</div>
<div style="position:absolute;left:25.8px;top:382.79999999999995px;font-size:7.0px;line-height:7.0px;color:#111;white-space:nowrap;transform:scaleX(0.77);transform-origin:0 50%;">651173</div>
<div style="position:absolute;left:48.4px;top:383.19999999999993px;font-size:6.5px;line-height:6.5px;color:#b8d0f0;white-space:nowrap;transform:scaleX(0.5);transform-origin:0 50%;">4</div>
<svg width="11" height="11" style="position:absolute;left:9.4px;top:391.94px"><path d="M1.3 1.2 L5.6 1.2 L7.6 3.2 L7.6 8.6 L1.3 8.6 Z" fill="#fbfbfb" stroke="#6a6a6a" stroke-width="0.8" stroke-linejoin="miter"/><path d="M5.4 1.2 L7.6 3.4 L5.4 3.4 Z" fill="#999"/><circle cx="6.7" cy="7.7" r="2.0" fill="#e4421a"/></svg>
<div style="position:absolute;left:20.4px;top:393.84px;font-size:6.5px;line-height:6.5px;color:#e8e0a0;white-space:nowrap;">1</div>
<div style="position:absolute;left:25.8px;top:393.44px;font-size:7.0px;line-height:7.0px;color:#111;white-space:nowrap;transform:scaleX(0.77);transform-origin:0 50%;">651173</div>
<div style="position:absolute;left:48.4px;top:393.84px;font-size:6.5px;line-height:6.5px;color:#b8d0f0;white-space:nowrap;transform:scaleX(0.5);transform-origin:0 50%;">4</div>
<svg width="11" height="11" style="position:absolute;left:9.4px;top:402.58px"><path d="M1.3 1.2 L5.6 1.2 L7.6 3.2 L7.6 8.6 L1.3 8.6 Z" fill="#fbfbfb" stroke="#6a6a6a" stroke-width="0.8" stroke-linejoin="miter"/><path d="M5.4 1.2 L7.6 3.4 L5.4 3.4 Z" fill="#999"/><circle cx="6.7" cy="7.7" r="2.0" fill="#e4421a"/></svg>
<div style="position:absolute;left:20.4px;top:404.47999999999996px;font-size:6.5px;line-height:6.5px;color:#e8e0a0;white-space:nowrap;">1</div>
<div style="position:absolute;left:25.8px;top:404.08px;font-size:7.0px;line-height:7.0px;color:#111;white-space:nowrap;transform:scaleX(0.77);transform-origin:0 50%;">651173</div>
<div style="position:absolute;left:48.4px;top:404.47999999999996px;font-size:6.5px;line-height:6.5px;color:#b8d0f0;white-space:nowrap;transform:scaleX(0.5);transform-origin:0 50%;">4</div>
<svg width="11" height="11" style="position:absolute;left:9.4px;top:413.22px"><path d="M1.3 1.2 L5.6 1.2 L7.6 3.2 L7.6 8.6 L1.3 8.6 Z" fill="#fbfbfb" stroke="#6a6a6a" stroke-width="0.8" stroke-linejoin="miter"/><path d="M5.4 1.2 L7.6 3.4 L5.4 3.4 Z" fill="#999"/><circle cx="6.7" cy="7.7" r="2.0" fill="#e4421a"/></svg>
<div style="position:absolute;left:20.4px;top:415.11999999999995px;font-size:6.5px;line-height:6.5px;color:#e8e0a0;white-space:nowrap;">1</div>
<div style="position:absolute;left:25.8px;top:414.71999999999997px;font-size:7.0px;line-height:7.0px;color:#111;white-space:nowrap;transform:scaleX(0.77);transform-origin:0 50%;">651174</div>
<div style="position:absolute;left:48.4px;top:415.11999999999995px;font-size:6.5px;line-height:6.5px;color:#b8d0f0;white-space:nowrap;transform:scaleX(0.5);transform-origin:0 50%;">4</div>
<svg width="11" height="11" style="position:absolute;left:9.4px;top:423.86px"><path d="M1.3 1.2 L5.6 1.2 L7.6 3.2 L7.6 8.6 L1.3 8.6 Z" fill="#fbfbfb" stroke="#6a6a6a" stroke-width="0.8" stroke-linejoin="miter"/><path d="M5.4 1.2 L7.6 3.4 L5.4 3.4 Z" fill="#999"/><circle cx="6.7" cy="7.7" r="2.0" fill="#e4421a"/></svg>
<div style="position:absolute;left:20.4px;top:425.76px;font-size:6.5px;line-height:6.5px;color:#e8e0a0;white-space:nowrap;">1</div>
<div style="position:absolute;left:25.8px;top:425.36px;font-size:7.0px;line-height:7.0px;color:#111;white-space:nowrap;transform:scaleX(0.77);transform-origin:0 50%;">651174</div>
<div style="position:absolute;left:48.4px;top:425.76px;font-size:6.5px;line-height:6.5px;color:#b8d0f0;white-space:nowrap;transform:scaleX(0.5);transform-origin:0 50%;">4</div>
<svg width="11" height="11" style="position:absolute;left:9.4px;top:434.50px"><path d="M1.3 1.2 L5.6 1.2 L7.6 3.2 L7.6 8.6 L1.3 8.6 Z" fill="#fbfbfb" stroke="#6a6a6a" stroke-width="0.8" stroke-linejoin="miter"/><path d="M5.4 1.2 L7.6 3.4 L5.4 3.4 Z" fill="#999"/><circle cx="6.7" cy="7.7" r="2.0" fill="#e4421a"/></svg>
<div style="position:absolute;left:20.4px;top:436.4px;font-size:6.5px;line-height:6.5px;color:#e8e0a0;white-space:nowrap;">1</div>
<div style="position:absolute;left:25.8px;top:436.0px;font-size:7.0px;line-height:7.0px;color:#111;white-space:nowrap;transform:scaleX(0.77);transform-origin:0 50%;">651175</div>
<div style="position:absolute;left:48.4px;top:436.4px;font-size:6.5px;line-height:6.5px;color:#b8d0f0;white-space:nowrap;transform:scaleX(0.5);transform-origin:0 50%;">4</div>
<svg width="11" height="11" style="position:absolute;left:9.4px;top:445.14px"><path d="M1.3 1.2 L5.6 1.2 L7.6 3.2 L7.6 8.6 L1.3 8.6 Z" fill="#fbfbfb" stroke="#6a6a6a" stroke-width="0.8" stroke-linejoin="miter"/><path d="M5.4 1.2 L7.6 3.4 L5.4 3.4 Z" fill="#999"/><circle cx="6.7" cy="7.7" r="2.0" fill="#e4421a"/></svg>
<div style="position:absolute;left:20.4px;top:447.03999999999996px;font-size:6.5px;line-height:6.5px;color:#e8e0a0;white-space:nowrap;">1</div>
<div style="position:absolute;left:25.8px;top:446.64px;font-size:7.0px;line-height:7.0px;color:#111;white-space:nowrap;transform:scaleX(0.77);transform-origin:0 50%;">651174</div>
<div style="position:absolute;left:48.4px;top:447.03999999999996px;font-size:6.5px;line-height:6.5px;color:#b8d0f0;white-space:nowrap;transform:scaleX(0.5);transform-origin:0 50%;">4</div>
<svg width="11" height="11" style="position:absolute;left:9.4px;top:455.78px"><path d="M1.3 1.2 L5.6 1.2 L7.6 3.2 L7.6 8.6 L1.3 8.6 Z" fill="#fbfbfb" stroke="#6a6a6a" stroke-width="0.8" stroke-linejoin="miter"/><path d="M5.4 1.2 L7.6 3.4 L5.4 3.4 Z" fill="#999"/><circle cx="6.7" cy="7.7" r="2.0" fill="#e4421a"/></svg>
<div style="position:absolute;left:20.4px;top:457.67999999999995px;font-size:6.5px;line-height:6.5px;color:#e8e0a0;white-space:nowrap;">1</div>
<div style="position:absolute;left:25.8px;top:457.28px;font-size:7.0px;line-height:7.0px;color:#111;white-space:nowrap;transform:scaleX(0.77);transform-origin:0 50%;">651175</div>
<div style="position:absolute;left:48.4px;top:457.67999999999995px;font-size:6.5px;line-height:6.5px;color:#b8d0f0;white-space:nowrap;transform:scaleX(0.5);transform-origin:0 50%;">4</div>
<svg width="11" height="11" style="position:absolute;left:9.4px;top:466.42px"><path d="M1.3 1.2 L5.6 1.2 L7.6 3.2 L7.6 8.6 L1.3 8.6 Z" fill="#fbfbfb" stroke="#6a6a6a" stroke-width="0.8" stroke-linejoin="miter"/><path d="M5.4 1.2 L7.6 3.4 L5.4 3.4 Z" fill="#999"/><circle cx="6.7" cy="7.7" r="2.0" fill="#e4421a"/></svg>
<div style="position:absolute;left:20.4px;top:468.31999999999994px;font-size:6.5px;line-height:6.5px;color:#e8e0a0;white-space:nowrap;">1</div>
<div style="position:absolute;left:25.8px;top:467.91999999999996px;font-size:7.0px;line-height:7.0px;color:#111;white-space:nowrap;transform:scaleX(0.77);transform-origin:0 50%;">651175</div>
<div style="position:absolute;left:48.4px;top:468.31999999999994px;font-size:6.5px;line-height:6.5px;color:#b8d0f0;white-space:nowrap;transform:scaleX(0.5);transform-origin:0 50%;">4</div>
<svg width="11" height="11" style="position:absolute;left:9.4px;top:477.06px"><path d="M1.3 1.2 L5.6 1.2 L7.6 3.2 L7.6 8.6 L1.3 8.6 Z" fill="#fbfbfb" stroke="#6a6a6a" stroke-width="0.8" stroke-linejoin="miter"/><path d="M5.4 1.2 L7.6 3.4 L5.4 3.4 Z" fill="#999"/><circle cx="6.7" cy="7.7" r="2.0" fill="#e4421a"/></svg>
<div style="position:absolute;left:20.4px;top:478.96px;font-size:6.5px;line-height:6.5px;color:#e8e0a0;white-space:nowrap;">1</div>
<div style="position:absolute;left:25.8px;top:478.56px;font-size:7.0px;line-height:7.0px;color:#111;white-space:nowrap;transform:scaleX(0.77);transform-origin:0 50%;">651175</div>
<div style="position:absolute;left:48.4px;top:478.96px;font-size:6.5px;line-height:6.5px;color:#b8d0f0;white-space:nowrap;transform:scaleX(0.5);transform-origin:0 50%;">4</div>
<svg width="11" height="11" style="position:absolute;left:9.4px;top:487.70px"><path d="M1.3 1.2 L5.6 1.2 L7.6 3.2 L7.6 8.6 L1.3 8.6 Z" fill="#fbfbfb" stroke="#6a6a6a" stroke-width="0.8" stroke-linejoin="miter"/><path d="M5.4 1.2 L7.6 3.4 L5.4 3.4 Z" fill="#999"/><circle cx="6.7" cy="7.7" r="2.0" fill="#e4421a"/></svg>
<div style="position:absolute;left:20.4px;top:489.59999999999997px;font-size:6.5px;line-height:6.5px;color:#e8e0a0;white-space:nowrap;">1</div>
<div style="position:absolute;left:25.8px;top:489.2px;font-size:7.0px;line-height:7.0px;color:#111;white-space:nowrap;transform:scaleX(0.77);transform-origin:0 50%;">651176</div>
<div style="position:absolute;left:48.4px;top:489.59999999999997px;font-size:6.5px;line-height:6.5px;color:#b8d0f0;white-space:nowrap;transform:scaleX(0.5);transform-origin:0 50%;">4</div>
<svg width="11" height="11" style="position:absolute;left:9.4px;top:498.34px"><path d="M1.3 1.2 L5.6 1.2 L7.6 3.2 L7.6 8.6 L1.3 8.6 Z" fill="#fbfbfb" stroke="#6a6a6a" stroke-width="0.8" stroke-linejoin="miter"/><path d="M5.4 1.2 L7.6 3.4 L5.4 3.4 Z" fill="#999"/><circle cx="6.7" cy="7.7" r="2.0" fill="#e4421a"/></svg>
<div style="position:absolute;left:20.4px;top:500.23999999999995px;font-size:6.5px;line-height:6.5px;color:#e8e0a0;white-space:nowrap;">1</div>
<div style="position:absolute;left:25.8px;top:499.84px;font-size:7.0px;line-height:7.0px;color:#111;white-space:nowrap;transform:scaleX(0.77);transform-origin:0 50%;">651176</div>
<div style="position:absolute;left:48.4px;top:500.23999999999995px;font-size:6.5px;line-height:6.5px;color:#b8d0f0;white-space:nowrap;transform:scaleX(0.5);transform-origin:0 50%;">4</div>
<svg width="11" height="11" style="position:absolute;left:9.4px;top:508.98px"><path d="M1.3 1.2 L5.6 1.2 L7.6 3.2 L7.6 8.6 L1.3 8.6 Z" fill="#fbfbfb" stroke="#6a6a6a" stroke-width="0.8" stroke-linejoin="miter"/><path d="M5.4 1.2 L7.6 3.4 L5.4 3.4 Z" fill="#999"/><circle cx="6.7" cy="7.7" r="2.0" fill="#e4421a"/></svg>
<div style="position:absolute;left:20.4px;top:510.88px;font-size:6.5px;line-height:6.5px;color:#e8e0a0;white-space:nowrap;">1</div>
<div style="position:absolute;left:25.8px;top:510.48px;font-size:7.0px;line-height:7.0px;color:#111;white-space:nowrap;transform:scaleX(0.77);transform-origin:0 50%;">651176</div>
<div style="position:absolute;left:48.4px;top:510.88px;font-size:6.5px;line-height:6.5px;color:#b8d0f0;white-space:nowrap;transform:scaleX(0.5);transform-origin:0 50%;">4</div>
<svg width="11" height="11" style="position:absolute;left:9.4px;top:519.62px"><path d="M1.3 1.2 L5.6 1.2 L7.6 3.2 L7.6 8.6 L1.3 8.6 Z" fill="#fbfbfb" stroke="#6a6a6a" stroke-width="0.8" stroke-linejoin="miter"/><path d="M5.4 1.2 L7.6 3.4 L5.4 3.4 Z" fill="#999"/><circle cx="6.7" cy="7.7" r="2.0" fill="#e4421a"/></svg>
<div style="position:absolute;left:20.4px;top:521.52px;font-size:6.5px;line-height:6.5px;color:#e8e0a0;white-space:nowrap;">1</div>
<div style="position:absolute;left:25.8px;top:521.12px;font-size:7.0px;line-height:7.0px;color:#111;white-space:nowrap;transform:scaleX(0.77);transform-origin:0 50%;">651176</div>
<div style="position:absolute;left:48.4px;top:521.52px;font-size:6.5px;line-height:6.5px;color:#b8d0f0;white-space:nowrap;transform:scaleX(0.5);transform-origin:0 50%;">4</div>
<svg width="11" height="11" style="position:absolute;left:9.4px;top:530.26px"><path d="M1.3 1.2 L5.6 1.2 L7.6 3.2 L7.6 8.6 L1.3 8.6 Z" fill="#fbfbfb" stroke="#6a6a6a" stroke-width="0.8" stroke-linejoin="miter"/><path d="M5.4 1.2 L7.6 3.4 L5.4 3.4 Z" fill="#999"/><circle cx="6.7" cy="7.7" r="2.0" fill="#e4421a"/></svg>
<div style="position:absolute;left:20.4px;top:532.16px;font-size:6.5px;line-height:6.5px;color:#e8e0a0;white-space:nowrap;">1</div>
<div style="position:absolute;left:25.8px;top:531.76px;font-size:7.0px;line-height:7.0px;color:#111;white-space:nowrap;transform:scaleX(0.77);transform-origin:0 50%;">651176</div>
<div style="position:absolute;left:48.4px;top:532.16px;font-size:6.5px;line-height:6.5px;color:#b8d0f0;white-space:nowrap;transform:scaleX(0.5);transform-origin:0 50%;">4</div>
<div style="position:absolute;left:22.3px;top:272.4px;width:3.5px;height:267.80000000000007px;background:#d3d3d3;"></div>
<div style="position:absolute;left:44.2px;top:272.4px;width:4.2px;height:267.80000000000007px;background:#d3d3d3;"></div>
<div style="position:absolute;left:1012px;top:261.2px;width:12px;height:279px;background:#f0f0f0;"></div>
<svg width="12" height="280" style="position:absolute;left:1012px;top:261px"><path d="M4.2 8 L6 6 L7.8 8" fill="none" stroke="#444" stroke-width="0.9"/><path d="M4.2 273.6 L6 275.6 L7.8 273.6" fill="none" stroke="#444" stroke-width="0.9"/></svg>
<div style="position:absolute;left:1014.4px;top:420px;width:6.6px;height:27.5px;background:#c2c2c2;"></div>
<svg width="20" height="10" style="position:absolute;left:1003px;top:248px"><path d="M6 3 L4.4 5 L6 7" fill="none" stroke="#aaa" stroke-width="0.9"/><path d="M14.6 3 L16.2 5 L14.6 7" fill="none" stroke="#aaa" stroke-width="0.9"/></svg>
<div style="position:absolute;left:8.3px;top:539.2px;width:1015.7px;height:13.8px;background:#f0f0f0;"></div>
<div style="position:absolute;left:8.3px;top:540.0px;width:1003.7px;height:0.9px;background:#6a6a6a;"></div>
<div style="position:absolute;left:72.4px;top:540.0px;width:56px;height:10.6px;background:#fff;border:0.9px solid #555;border-top:none;"></div>
<div style="position:absolute;left:77.3px;top:542.2px;font-size:6.6px;line-height:6.6px;color:#111;white-space:nowrap;transform:scaleX(0.975);transform-origin:0 50%;">Account History</div>
<div style="position:absolute;left:15px;top:542.2px;font-size:6.6px;line-height:6.6px;color:#8a8a8a;white-space:nowrap;transform:scaleX(0.93);transform-origin:0 50%;">Trade</div>
<div style="position:absolute;left:41.2px;top:542.2px;font-size:6.6px;line-height:6.6px;color:#8a8a8a;white-space:nowrap;transform:scaleX(0.93);transform-origin:0 50%;">Exposure</div>
<div style="position:absolute;left:133.8px;top:542.2px;font-size:6.6px;line-height:6.6px;color:#8a8a8a;white-space:nowrap;transform:scaleX(0.93);transform-origin:0 50%;">News</div>
<div style="position:absolute;left:160.3px;top:542.2px;font-size:6.6px;line-height:6.6px;color:#8a8a8a;white-space:nowrap;transform:scaleX(0.93);transform-origin:0 50%;">Alerts</div>
<div style="position:absolute;left:187px;top:542.2px;font-size:6.6px;line-height:6.6px;color:#8a8a8a;white-space:nowrap;transform:scaleX(0.93);transform-origin:0 50%;">Mailbox</div>
<div style="position:absolute;left:224.3px;top:542.2px;font-size:6.6px;line-height:6.6px;color:#8a8a8a;white-space:nowrap;transform:scaleX(0.93);transform-origin:0 50%;">Market</div>
<div style="position:absolute;left:263.5px;top:542.2px;font-size:6.6px;line-height:6.6px;color:#8a8a8a;white-space:nowrap;transform:scaleX(0.93);transform-origin:0 50%;">Articles</div>
<div style="position:absolute;left:294.8px;top:542.2px;font-size:6.6px;line-height:6.6px;color:#8a8a8a;white-space:nowrap;transform:scaleX(0.93);transform-origin:0 50%;">Code Base</div>
<div style="position:absolute;left:334.8px;top:542.2px;font-size:6.6px;line-height:6.6px;color:#8a8a8a;white-space:nowrap;transform:scaleX(0.93);transform-origin:0 50%;">Experts</div>
<div style="position:absolute;left:366px;top:542.2px;font-size:6.6px;line-height:6.6px;color:#8a8a8a;white-space:nowrap;transform:scaleX(0.93);transform-origin:0 50%;">Journal</div>
<div style="position:absolute;left:35.800000000000004px;top:542px;width:0.8px;height:6.6px;background:#9a9a9a;"></div>
<div style="position:absolute;left:154.6px;top:542px;width:0.8px;height:6.6px;background:#9a9a9a;"></div>
<div style="position:absolute;left:181.29999999999998px;top:542px;width:0.8px;height:6.6px;background:#9a9a9a;"></div>
<div style="position:absolute;left:218.79999999999998px;top:542px;width:0.8px;height:6.6px;background:#9a9a9a;"></div>
<div style="position:absolute;left:257.6px;top:542px;width:0.8px;height:6.6px;background:#9a9a9a;"></div>
<div style="position:absolute;left:289.40000000000003px;top:542px;width:0.8px;height:6.6px;background:#9a9a9a;"></div>
<div style="position:absolute;left:329.40000000000003px;top:542px;width:0.8px;height:6.6px;background:#9a9a9a;"></div>
<div style="position:absolute;left:360.1px;top:542px;width:0.8px;height:6.6px;background:#9a9a9a;"></div>
<div style="position:absolute;left:391.1px;top:542px;width:0.8px;height:6.6px;background:#9a9a9a;"></div>
<div style="position:absolute;left:210.4px;top:545.0px;font-size:5.2px;line-height:5.2px;color:#e02020;white-space:nowrap;">6</div>
<div style="position:absolute;left:244.8px;top:545.0px;font-size:5.2px;line-height:5.2px;color:#e02020;white-space:nowrap;transform:scaleX(0.9);transform-origin:0 50%;">123</div>
<div style="position:absolute;left:0px;top:553px;width:1024px;height:13px;background:#f0f0f0;"></div>
<div style="position:absolute;left:0px;top:552.8px;width:1024px;height:0.8px;background:#d6d6d6;"></div>
<div style="position:absolute;left:1.2px;top:557.6px;font-size:6.6px;line-height:6.6px;color:#1a1a1a;white-space:nowrap;transform:scaleX(0.93);transform-origin:0 50%;">For Help, press F1</div>
<div style="position:absolute;left:654.1px;top:554.8px;width:0.8px;height:10px;background:#c4c4c4;"></div>
<div style="position:absolute;left:715.4px;top:554.8px;width:0.8px;height:10px;background:#c4c4c4;"></div>
<div style="position:absolute;left:770.1px;top:554.8px;width:0.8px;height:10px;background:#c4c4c4;"></div>
<div style="position:absolute;left:807.6px;top:554.8px;width:0.8px;height:10px;background:#c4c4c4;"></div>
<div style="position:absolute;left:845.6px;top:554.8px;width:0.8px;height:10px;background:#c4c4c4;"></div>
<div style="position:absolute;left:882.6px;top:554.8px;width:0.8px;height:10px;background:#c4c4c4;"></div>
<div style="position:absolute;left:920.1px;top:554.8px;width:0.8px;height:10px;background:#c4c4c4;"></div>
<div style="position:absolute;left:953.8000000000001px;top:554.8px;width:0.8px;height:10px;background:#c4c4c4;"></div>
<div style="position:absolute;left:657px;top:557.6px;font-size:6.6px;line-height:6.6px;color:#1a1a1a;white-space:nowrap;transform:scaleX(0.93);transform-origin:0 50%;">Default</div>
<div style="position:absolute;left:719px;top:557.6px;font-size:6.6px;line-height:6.6px;color:#1a1a1a;white-space:nowrap;transform:scaleX(0.86);transform-origin:0 50%;">2025.04.21 02:30</div>
<div style="position:absolute;left:773px;top:557.6px;font-size:6.6px;line-height:6.6px;color:#1a1a1a;white-space:nowrap;transform:scaleX(0.86);transform-origin:0 50%;">O: 85047.20</div>
<div style="position:absolute;left:811px;top:557.6px;font-size:6.6px;line-height:6.6px;color:#1a1a1a;white-space:nowrap;transform:scaleX(0.86);transform-origin:0 50%;">H: 85111.40</div>
<div style="position:absolute;left:849.3px;top:557.6px;font-size:6.6px;line-height:6.6px;color:#1a1a1a;white-space:nowrap;transform:scaleX(0.86);transform-origin:0 50%;">L: 84944.20</div>
<div style="position:absolute;left:885.5px;top:557.6px;font-size:6.6px;line-height:6.6px;color:#1a1a1a;white-space:nowrap;transform:scaleX(0.86);transform-origin:0 50%;">C: 84979.40</div>
<div style="position:absolute;left:923px;top:557.6px;font-size:6.6px;line-height:6.6px;color:#1a1a1a;white-space:nowrap;transform:scaleX(0.86);transform-origin:0 50%;">V: 246</div>
<div style="position:absolute;left:972.5px;top:557.6px;font-size:6.6px;line-height:6.6px;color:#1a1a1a;white-space:nowrap;transform:scaleX(0.86);transform-origin:0 50%;">1009/294 kb</div>
<svg width="14" height="10" style="position:absolute;left:957.5px;top:556px"><rect x="0.5" y="0.6" width="12" height="7.4" fill="#2f8fb0"/><path d="M0.5 8 L0.5 5 L3 4.4 L3 8 Z M3.5 8 L3.5 4 L6 3.2 L6 8 Z M6.5 8 L6.5 3 L9 2.2 L9 8 Z M9.5 8 L9.5 2 L12.5 1 L12.5 8 Z" fill="#7ab83a"/></svg>
<svg width="8" height="10" style="position:absolute;left:1016px;top:556px"><path d="M7.5 2 L1.5 8 M7.5 5 L4.5 8" stroke="#999" stroke-width="0.7"/></svg>
<div style="position:absolute;left:0px;top:565.2px;width:19px;height:0.8px;background:#1a1a1a;"></div>
<div style="position:absolute;left:157px;top:565.2px;width:867px;height:0.8px;background:#505050;"></div>
</body></html>
